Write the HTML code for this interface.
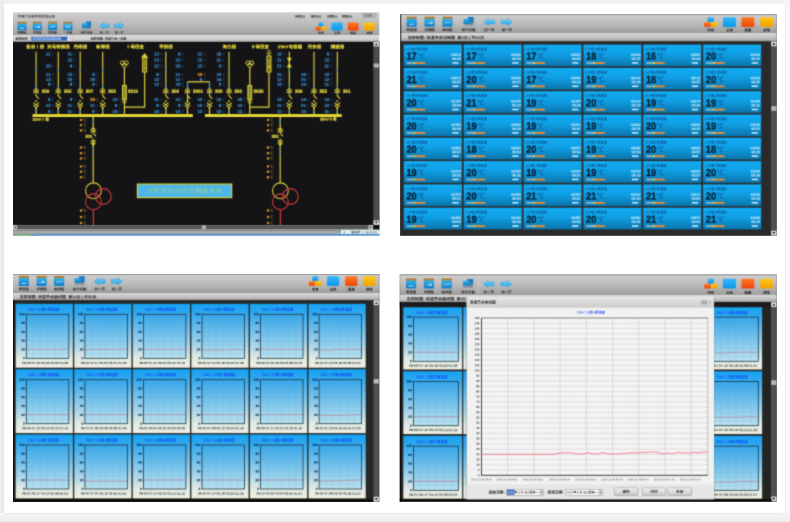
<!DOCTYPE html>
<html lang="zh-CN">
<head>
<meta charset="utf-8">
<title>丹阳变自动综合测温系统</title>
<style>
html,body{margin:0;padding:0;}
body{width:790px;height:522px;overflow:hidden;background:#f1f1f1;position:relative;font-family:"Liberation Sans","Noto Sans CJK SC",sans-serif;}
.sheet{position:absolute;left:3.5px;top:3.5px;width:781.5px;height:509.5px;background:#fff;box-shadow:0 1px 3px rgba(0,0,0,0.06);}
.edge-l{position:absolute;left:0;top:0;width:4px;height:522px;background:#ededed;}
.edge-r{position:absolute;left:785px;top:0;width:5px;height:522px;background:#f7f7f7;}
.edge-b{position:absolute;left:0;top:513px;width:790px;height:9px;background:linear-gradient(#f8f8f8,#ececec);}
.panel{position:absolute;display:block;overflow:hidden;will-change:transform;filter:url(#soft);}
svg text{white-space:pre;}
</style>
</head>
<body>
<div class="edge-l"></div>
<div class="edge-r"></div>
<div class="edge-b"></div>
<div class="sheet"></div>
<svg width="0" height="0" style="position:absolute"><defs><filter id="soft" x="0" y="0" width="1" height="1" color-interpolation-filters="sRGB"><feConvolveMatrix order="3" kernelMatrix="1 2 1 2 11 2 1 2 1" divisor="23" edgeMode="duplicate" preserveAlpha="true"/></filter>
<linearGradient id="gTool" x1="0" y1="0" x2="0" y2="1"><stop offset="0" stop-color="#cfcfcf"/><stop offset="0.55" stop-color="#b9b9b9"/><stop offset="1" stop-color="#9d9d9d"/></linearGradient>
<linearGradient id="gInfo" x1="0" y1="0" x2="0" y2="1"><stop offset="0" stop-color="#dadada"/><stop offset="0.7" stop-color="#bebebe"/><stop offset="1" stop-color="#969696"/></linearGradient>
<linearGradient id="gInfo1" x1="0" y1="0" x2="0" y2="1"><stop offset="0" stop-color="#dedede"/><stop offset="0.8" stop-color="#c8c8c8"/><stop offset="1" stop-color="#acacac"/></linearGradient>
<linearGradient id="gOrangeBar" x1="0" y1="0" x2="0" y2="1"><stop offset="0" stop-color="#a8702c"/><stop offset="1" stop-color="#d08a30"/></linearGradient>
<linearGradient id="gIconBlue" x1="0" y1="0" x2="0" y2="1"><stop offset="0" stop-color="#2cb2ee"/><stop offset="1" stop-color="#1078c4"/></linearGradient>
<linearGradient id="gArrow" x1="0" y1="0" x2="0" y2="1"><stop offset="0" stop-color="#7ad4fa"/><stop offset="1" stop-color="#1ea0e6"/></linearGradient>
<linearGradient id="gBlueBtn" x1="0" y1="0" x2="0" y2="1"><stop offset="0" stop-color="#34b8fa"/><stop offset="1" stop-color="#0c96e8"/></linearGradient>
<linearGradient id="gOrangeBtn" x1="0" y1="0" x2="0" y2="1"><stop offset="0" stop-color="#ff7a24"/><stop offset="1" stop-color="#f04404"/></linearGradient>
<linearGradient id="gYellowBtn" x1="0" y1="0" x2="0" y2="1"><stop offset="0" stop-color="#ffc818"/><stop offset="1" stop-color="#f0a000"/></linearGradient>
<linearGradient id="gCard" x1="0" y1="0" x2="0" y2="1"><stop offset="0" stop-color="#12acf4"/><stop offset="0.45" stop-color="#0f9fe4"/><stop offset="1" stop-color="#0a74ac"/></linearGradient>
<linearGradient id="gChartCard" x1="0" y1="0" x2="0" y2="1"><stop offset="0" stop-color="#16a2f2"/><stop offset="0.12" stop-color="#2aa6ee"/><stop offset="0.6" stop-color="#9cd0ea"/><stop offset="0.86" stop-color="#e2ebe2"/><stop offset="1" stop-color="#efeee2"/></linearGradient>
<linearGradient id="gPlot" x1="0" y1="0" x2="0" y2="1"><stop offset="0" stop-color="#34a6ea"/><stop offset="1" stop-color="#bce2ee"/></linearGradient>
<linearGradient id="gBtn" x1="0" y1="0" x2="0" y2="1"><stop offset="0" stop-color="#f4f4f4"/><stop offset="1" stop-color="#c4c4c4"/></linearGradient>
<linearGradient id="gDlgTitle" x1="0" y1="0" x2="0" y2="1"><stop offset="0" stop-color="#e8e8e8"/><stop offset="1" stop-color="#cbcbcb"/></linearGradient>
</defs></svg>
<svg class="panel" style="left:13px;top:12px" width="367" height="224" viewBox="13 12 367 224" font-family='"Liberation Sans","Noto Sans CJK SC",sans-serif'>
<rect x="13" y="12.3" width="366.3" height="23.2" fill="url(#gTool)" />
<text x="17.6" y="16.6" font-size="3.4" fill="#333" font-weight="500" text-anchor="start" dominant-baseline="central" transform="rotate(0.06 17.6 16.6)" >供电力设备状态监测系统</text>
<text x="295" y="16.6" font-size="3.05" fill="#222" font-weight="700" text-anchor="start" dominant-baseline="central" transform="rotate(0.06 295 16.6)" >系统(S)</text>
<text x="310.7" y="16.6" font-size="3.05" fill="#222" font-weight="700" text-anchor="start" dominant-baseline="central" transform="rotate(0.06 310.7 16.6)" >操作(O)</text>
<text x="327" y="16.6" font-size="3.05" fill="#222" font-weight="700" text-anchor="start" dominant-baseline="central" transform="rotate(0.06 327 16.6)" >设置(S)</text>
<text x="342" y="16.6" font-size="3.05" fill="#222" font-weight="700" text-anchor="start" dominant-baseline="central" transform="rotate(0.06 342 16.6)" >帮助(H)</text>
<rect x="362.7" y="13.4" width="13.3" height="4" fill="#bcbcc4" stroke="#8c8c98" stroke-width="0.4"/>
<text x="364" y="15.5" font-size="2.8" fill="#555" font-weight="500" text-anchor="start" dominant-baseline="central" transform="rotate(0.06 364 15.5)" >监控端</text>
<rect x="17.3" y="21.8" width="9.3" height="2.18" fill="url(#gOrangeBar)" rx="0.6"/><rect x="17.3" y="23.48" width="9.3" height="6.72" fill="url(#gIconBlue)" rx="1"/><rect x="19.62" y="27.78" width="4.65" height="0.9" fill="#d8f2ff" opacity="0.85"/>
<text x="21.95" y="32.5" font-size="2.95" fill="#2e2e2e" font-weight="700" text-anchor="middle" dominant-baseline="central" transform="rotate(0.06 21.95 32.5)" >概要图</text>
<rect x="32.6" y="21.8" width="9.3" height="2.18" fill="url(#gOrangeBar)" rx="0.6"/><rect x="32.6" y="23.48" width="9.3" height="6.72" fill="url(#gIconBlue)" rx="1"/><rect x="37.25" y="25.78" width="2.79" height="2.2" fill="#d8f2ff" opacity="0.7"/><rect x="34.46" y="26.88" width="2.33" height="0.8" fill="#d8f2ff" opacity="0.6"/>
<text x="37.25" y="32.5" font-size="2.95" fill="#2e2e2e" font-weight="700" text-anchor="middle" dominant-baseline="central" transform="rotate(0.06 37.25 32.5)" >详细图</text>
<rect x="48" y="21.8" width="9.3" height="2.18" fill="url(#gOrangeBar)" rx="0.6"/><rect x="48" y="23.48" width="9.3" height="6.72" fill="url(#gIconBlue)" rx="1"/><polyline points="49.86,27.98 51.72,25.98 53.58,27.18 55.63,25.58" fill="none" stroke="#e0f6ff" stroke-width="0.8" opacity="0.85"/>
<text x="52.65" y="32.5" font-size="2.95" fill="#2e2e2e" font-weight="700" text-anchor="middle" dominant-baseline="central" transform="rotate(0.06 52.65 32.5)" >曲线图</text>
<rect x="63.2" y="21.8" width="9.3" height="2.18" fill="url(#gOrangeBar)" rx="0.6"/><rect x="63.2" y="23.48" width="9.3" height="6.72" fill="url(#gIconBlue)" rx="1"/><rect x="65.99" y="25.68" width="0.8" height="3" fill="#d8f2ff" opacity="0.8"/><rect x="68.78" y="25.68" width="0.8" height="3" fill="#d8f2ff" opacity="0.8"/><rect x="65.06" y="25.68" width="5.58" height="0.7" fill="#d8f2ff" opacity="0.8"/>
<text x="67.85" y="32.5" font-size="2.95" fill="#2e2e2e" font-weight="700" text-anchor="middle" dominant-baseline="central" transform="rotate(0.06 67.85 32.5)" >一次图</text>
<rect x="85.86" y="21.6" width="5.34" height="5.33" fill="#1a7cc4" rx="0.5"/><rect x="82" y="23.32" width="5.7" height="4.73" fill="url(#gIconBlue)" rx="0.6"/><rect x="82.46" y="28.31" width="8.28" height="1.72" fill="#8a97a3" rx="0.4"/><rect x="87.06" y="26.93" width="3.68" height="1.38" fill="#5f7486" />
<text x="86.6" y="32.5" font-size="2.95" fill="#2a2a2a" font-weight="700" text-anchor="middle" dominant-baseline="central" transform="rotate(0.06 86.6 32.5)" >操作设备</text>
<polygon points="99.6,25.8 103.55,22.6 103.55,24.01 109,24.01 109,27.59 103.55,27.59 103.55,29" fill="url(#gArrow)" stroke="#2a9ad8" stroke-width="0.4" stroke-linejoin="round"/>
<text x="104.3" y="32.5" font-size="2.95" fill="#2a2a2a" font-weight="700" text-anchor="middle" dominant-baseline="central" transform="rotate(0.06 104.3 32.5)" >前一页</text>
<polygon points="123.8,25.8 119.85,22.6 119.85,24.01 114.4,24.01 114.4,27.59 119.85,27.59 119.85,29" fill="url(#gArrow)" stroke="#2a9ad8" stroke-width="0.4" stroke-linejoin="round"/>
<text x="119.1" y="32.5" font-size="2.95" fill="#2a2a2a" font-weight="700" text-anchor="middle" dominant-baseline="central" transform="rotate(0.06 119.1 32.5)" >后一页</text>
<rect x="318.54" y="22.4" width="5.01" height="4.05" fill="url(#gBlueBtn)" rx="1"/><rect x="315.6" y="26.61" width="5.45" height="3.89" fill="url(#gOrangeBtn)" rx="1.2"/><rect x="321.27" y="26.45" width="5.23" height="4.05" fill="url(#gYellowBtn)" rx="1.2"/><rect x="331.5" y="22.4" width="11.1" height="8.1" fill="url(#gBlueBtn)" rx="1.3"/><rect x="347.8" y="22.4" width="10.8" height="8.1" fill="url(#gOrangeBtn)" rx="1.3"/><rect x="364" y="22.4" width="10.9" height="8.1" fill="url(#gYellowBtn)" rx="1.3"/><text x="321.05" y="33.1" font-size="3" fill="#1c1c1c" font-weight="700" text-anchor="middle" dominant-baseline="central" transform="rotate(0.06 321.05 33.1)" >所有</text><text x="337.05" y="33.1" font-size="3" fill="#1c1c1c" font-weight="700" text-anchor="middle" dominant-baseline="central" transform="rotate(0.06 337.05 33.1)" >正常</text><text x="353.2" y="33.1" font-size="3" fill="#1c1c1c" font-weight="700" text-anchor="middle" dominant-baseline="central" transform="rotate(0.06 353.2 33.1)" >超温</text><text x="369.45" y="33.1" font-size="3" fill="#1c1c1c" font-weight="700" text-anchor="middle" dominant-baseline="central" transform="rotate(0.06 369.45 33.1)" >故障</text>
<rect x="13" y="35.4" width="366.3" height="6.3" fill="url(#gInfo1)" />
<text x="15.2" y="38.7" font-size="3.05" fill="#222" font-weight="700" text-anchor="start" dominant-baseline="central" transform="rotate(0.06 15.2 38.7)" >当前系统:</text>
<rect x="31" y="36.4" width="41.6" height="4.6" fill="#f4f4f4" stroke="#8a8a8a" stroke-width="0.3"/>
<rect x="31.4" y="36.8" width="36" height="3.8" fill="#2f62c0" />
<text x="32.4" y="38.7" font-size="3.2" fill="#d8e4ff" font-weight="500" text-anchor="start" dominant-baseline="central" transform="rotate(0.06 32.4 38.7)" >丹阳变电站测温系统</text>
<polygon points="69.4,38 71.4,38 70.4,39.4" fill="#444"/>
<text x="90.4" y="38.7" font-size="3.1" fill="#222" font-weight="700" text-anchor="start" dominant-baseline="central" transform="rotate(0.06 90.4 38.7)" >当前视图: 测温节点一次图</text>
<rect x="13" y="41.6" width="366.3" height="183.6" fill="#141416" />
<rect x="373.3" y="41.6" width="6" height="183.6" fill="#4c4c4c" />
<rect x="373.6" y="42" width="5.4" height="4.4" fill="#e8e8e8" />
<polygon points="374.8,45.2 377.8,45.2 376.3,43" fill="#111"/>
<rect x="373.6" y="63.5" width="5.4" height="4" fill="#b4b4b4" />
<rect x="373.6" y="220.4" width="5.4" height="4.4" fill="#e8e8e8" />
<polygon points="374.8,221.6 377.8,221.6 376.3,223.8" fill="#111"/>
<rect x="13" y="225.1" width="366.3" height="4.6" fill="#585858" />
<rect x="13.2" y="225.3" width="3.6" height="4.2" fill="#e8e8e8" />
<polygon points="15.8,226.1 15.8,228.7 14,227.4" fill="#111"/>
<rect x="368.6" y="225.3" width="4.2" height="4.2" fill="#e8e8e8" />
<polygon points="369.8,226.1 369.8,228.7 371.8,227.4" fill="#111"/>
<rect x="373.3" y="225.1" width="6" height="4.6" fill="#0c0c0c" />
<rect x="201.8" y="225.3" width="4.2" height="4.2" fill="#b4b4b4" />
<rect x="13" y="229.7" width="366.3" height="5.8" fill="#a6a6a6" />
<rect x="13" y="229.7" width="366.3" height="1.2" fill="#8c8c8c" />
<rect x="341" y="229.9" width="38.3" height="4.6" fill="#dff3f6" />
<text x="343" y="232.2" font-size="2.4" fill="#333" font-weight="normal" text-anchor="start" dominant-baseline="central" transform="rotate(0.06 343 232.2)" >▲</text>
<text x="351" y="232.2" font-size="3" fill="#333" font-weight="500" text-anchor="start" dominant-baseline="central" transform="rotate(0.06 351 232.2)" >值班员: 1  06:09:09</text>
<rect x="13" y="234" width="19" height="1.5" fill="#74a878" />
<rect x="32" y="234" width="347.3" height="1.5" fill="#4a90d8" />
<linearGradient id="gGB" x1="0" x2="1"><stop offset="0" stop-color="#74a878"/><stop offset="1" stop-color="#4a90d8"/></linearGradient>
<rect x="30" y="234" width="6" height="1.5" fill="url(#gGB)" />
<text x="35.2" y="46.8" font-size="4.3" fill="#e6d83e" font-weight="700" text-anchor="middle" dominant-baseline="central" transform="rotate(0.06 35.2 46.8)" letter-spacing="0.2" stroke="#e6d83e" stroke-width="0.2">备用Ⅰ线</text>
<text x="58.6" y="46.8" font-size="4.3" fill="#e6d83e" font-weight="700" text-anchor="middle" dominant-baseline="central" transform="rotate(0.06 58.6 46.8)" letter-spacing="0.2" stroke="#e6d83e" stroke-width="0.2">天马特钢线</text>
<text x="80.4" y="46.8" font-size="4.3" fill="#e6d83e" font-weight="700" text-anchor="middle" dominant-baseline="central" transform="rotate(0.06 80.4 46.8)" letter-spacing="0.2" stroke="#e6d83e" stroke-width="0.2">丹阳线</text>
<text x="102.9" y="46.8" font-size="4.3" fill="#e6d83e" font-weight="700" text-anchor="middle" dominant-baseline="central" transform="rotate(0.06 102.9 46.8)" letter-spacing="0.2" stroke="#e6d83e" stroke-width="0.2">新博线</text>
<text x="135" y="46.8" font-size="4.3" fill="#e6d83e" font-weight="700" text-anchor="middle" dominant-baseline="central" transform="rotate(0.06 135 46.8)" letter-spacing="0.2" stroke="#e6d83e" stroke-width="0.2">Ⅰ母压变</text>
<text x="166" y="46.8" font-size="4.3" fill="#e6d83e" font-weight="700" text-anchor="middle" dominant-baseline="central" transform="rotate(0.06 166 46.8)" letter-spacing="0.2" stroke="#e6d83e" stroke-width="0.2">平桥线</text>
<text x="229.2" y="46.8" font-size="4.3" fill="#e6d83e" font-weight="700" text-anchor="middle" dominant-baseline="central" transform="rotate(0.06 229.2 46.8)" letter-spacing="0.2" stroke="#e6d83e" stroke-width="0.2">海力线</text>
<text x="260" y="46.8" font-size="4.3" fill="#e6d83e" font-weight="700" text-anchor="middle" dominant-baseline="central" transform="rotate(0.06 260 46.8)" letter-spacing="0.2" stroke="#e6d83e" stroke-width="0.2">Ⅱ母压变</text>
<text x="290" y="46.8" font-size="4.3" fill="#e6d83e" font-weight="700" text-anchor="middle" dominant-baseline="central" transform="rotate(0.06 290 46.8)" letter-spacing="0.2" stroke="#e6d83e" stroke-width="0.2">35kV电容器</text>
<text x="314.5" y="46.8" font-size="4.3" fill="#e6d83e" font-weight="700" text-anchor="middle" dominant-baseline="central" transform="rotate(0.06 314.5 46.8)" letter-spacing="0.2" stroke="#e6d83e" stroke-width="0.2">丹东线</text>
<text x="337.4" y="46.8" font-size="4.3" fill="#e6d83e" font-weight="700" text-anchor="middle" dominant-baseline="central" transform="rotate(0.06 337.4 46.8)" letter-spacing="0.2" stroke="#e6d83e" stroke-width="0.2">搏盛线</text>
<line x1="36.1" y1="51.7" x2="36.1" y2="88.6" stroke="#dcd23c" stroke-width="1.15" />
<polyline points="33.4,90.8 36.1,88.4 38.8,90.8" fill="none" stroke="#dcd23c" stroke-width="1.1"/><polyline points="33.4,93.2 36.1,90.8 38.8,93.2" fill="none" stroke="#dcd23c" stroke-width="1.1"/><polyline points="36.1,90.4 36.1,95.7 38.9,99" fill="none" stroke="#dcd23c" stroke-width="1.1"/><line x1="35.1" y1="100.4" x2="37.1" y2="102" stroke="#dcd23c" stroke-width="0.8" /><line x1="37.1" y1="100.4" x2="35.1" y2="102" stroke="#dcd23c" stroke-width="0.8" /><polyline points="33.5,102.6 36.1,105.2 38.7,102.6" fill="none" stroke="#dcd23c" stroke-width="1.1"/><polyline points="33.5,105.2 36.1,107.8 38.7,105.2" fill="none" stroke="#dcd23c" stroke-width="1.1"/><line x1="36.1" y1="107" x2="36.1" y2="108.4" stroke="#dcd23c" stroke-width="1.1" /><text x="41.7" y="91.3" font-size="4.5" fill="#e6d83e" font-weight="700" text-anchor="start" dominant-baseline="central" transform="rotate(0.06 41.7 91.3)" stroke="#e6d83e" stroke-width="0.25">359</text>
<line x1="36.1" y1="108" x2="36.1" y2="114.5" stroke="#dcd23c" stroke-width="1.3" />
<line x1="36.1" y1="68.5" x2="36.1" y2="71" stroke="#3a86c8" stroke-width="1.3" />
<line x1="36.1" y1="85" x2="36.1" y2="87.2" stroke="#3a86c8" stroke-width="1.3" />
<line x1="36.1" y1="110.5" x2="36.1" y2="112.5" stroke="#3a86c8" stroke-width="1.3" />
<line x1="58.3" y1="51.7" x2="58.3" y2="88.6" stroke="#dcd23c" stroke-width="1.15" />
<polyline points="55.6,90.8 58.3,88.4 61,90.8" fill="none" stroke="#dcd23c" stroke-width="1.1"/><polyline points="55.6,93.2 58.3,90.8 61,93.2" fill="none" stroke="#dcd23c" stroke-width="1.1"/><polyline points="58.3,90.4 58.3,95.7 61.1,99" fill="none" stroke="#dcd23c" stroke-width="1.1"/><line x1="57.3" y1="100.4" x2="59.3" y2="102" stroke="#dcd23c" stroke-width="0.8" /><line x1="59.3" y1="100.4" x2="57.3" y2="102" stroke="#dcd23c" stroke-width="0.8" /><polyline points="55.7,102.6 58.3,105.2 60.9,102.6" fill="none" stroke="#dcd23c" stroke-width="1.1"/><polyline points="55.7,105.2 58.3,107.8 60.9,105.2" fill="none" stroke="#dcd23c" stroke-width="1.1"/><line x1="58.3" y1="107" x2="58.3" y2="108.4" stroke="#dcd23c" stroke-width="1.1" /><text x="63.9" y="91.3" font-size="4.5" fill="#e6d83e" font-weight="700" text-anchor="start" dominant-baseline="central" transform="rotate(0.06 63.9 91.3)" stroke="#e6d83e" stroke-width="0.25">355</text>
<line x1="58.3" y1="108" x2="58.3" y2="114.5" stroke="#dcd23c" stroke-width="1.3" />
<line x1="58.3" y1="68.5" x2="58.3" y2="71" stroke="#3a86c8" stroke-width="1.3" />
<line x1="58.3" y1="85" x2="58.3" y2="87.2" stroke="#3a86c8" stroke-width="1.3" />
<line x1="58.3" y1="110.5" x2="58.3" y2="112.5" stroke="#3a86c8" stroke-width="1.3" />
<line x1="80.2" y1="51.7" x2="80.2" y2="88.6" stroke="#dcd23c" stroke-width="1.15" />
<polyline points="77.5,90.8 80.2,88.4 82.9,90.8" fill="none" stroke="#dcd23c" stroke-width="1.1"/><polyline points="77.5,93.2 80.2,90.8 82.9,93.2" fill="none" stroke="#dcd23c" stroke-width="1.1"/><polyline points="80.2,90.4 80.2,95.7 83,99" fill="none" stroke="#dcd23c" stroke-width="1.1"/><line x1="79.2" y1="100.4" x2="81.2" y2="102" stroke="#dcd23c" stroke-width="0.8" /><line x1="81.2" y1="100.4" x2="79.2" y2="102" stroke="#dcd23c" stroke-width="0.8" /><polyline points="77.6,102.6 80.2,105.2 82.8,102.6" fill="none" stroke="#dcd23c" stroke-width="1.1"/><polyline points="77.6,105.2 80.2,107.8 82.8,105.2" fill="none" stroke="#dcd23c" stroke-width="1.1"/><line x1="80.2" y1="107" x2="80.2" y2="108.4" stroke="#dcd23c" stroke-width="1.1" /><text x="85.8" y="91.3" font-size="4.5" fill="#e6d83e" font-weight="700" text-anchor="start" dominant-baseline="central" transform="rotate(0.06 85.8 91.3)" stroke="#e6d83e" stroke-width="0.25">357</text>
<line x1="80.2" y1="108" x2="80.2" y2="114.5" stroke="#dcd23c" stroke-width="1.3" />
<line x1="80.2" y1="68.5" x2="80.2" y2="71" stroke="#3a86c8" stroke-width="1.3" />
<line x1="80.2" y1="85" x2="80.2" y2="87.2" stroke="#3a86c8" stroke-width="1.3" />
<line x1="80.2" y1="110.5" x2="80.2" y2="112.5" stroke="#3a86c8" stroke-width="1.3" />
<line x1="102.7" y1="51.7" x2="102.7" y2="88.6" stroke="#dcd23c" stroke-width="1.15" />
<polyline points="100,90.8 102.7,88.4 105.4,90.8" fill="none" stroke="#dcd23c" stroke-width="1.1"/><polyline points="100,93.2 102.7,90.8 105.4,93.2" fill="none" stroke="#dcd23c" stroke-width="1.1"/><polyline points="102.7,90.4 102.7,95.7 105.5,99" fill="none" stroke="#dcd23c" stroke-width="1.1"/><line x1="101.7" y1="100.4" x2="103.7" y2="102" stroke="#dcd23c" stroke-width="0.8" /><line x1="103.7" y1="100.4" x2="101.7" y2="102" stroke="#dcd23c" stroke-width="0.8" /><polyline points="100.1,102.6 102.7,105.2 105.3,102.6" fill="none" stroke="#dcd23c" stroke-width="1.1"/><polyline points="100.1,105.2 102.7,107.8 105.3,105.2" fill="none" stroke="#dcd23c" stroke-width="1.1"/><line x1="102.7" y1="107" x2="102.7" y2="108.4" stroke="#dcd23c" stroke-width="1.1" /><text x="108.3" y="91.3" font-size="4.5" fill="#e6d83e" font-weight="700" text-anchor="start" dominant-baseline="central" transform="rotate(0.06 108.3 91.3)" stroke="#e6d83e" stroke-width="0.25">353</text>
<line x1="102.7" y1="108" x2="102.7" y2="114.5" stroke="#dcd23c" stroke-width="1.3" />
<line x1="102.7" y1="68.5" x2="102.7" y2="71" stroke="#3a86c8" stroke-width="1.3" />
<line x1="102.7" y1="85" x2="102.7" y2="87.2" stroke="#3a86c8" stroke-width="1.3" />
<line x1="102.7" y1="110.5" x2="102.7" y2="112.5" stroke="#3a86c8" stroke-width="1.3" />
<line x1="165.8" y1="51.7" x2="165.8" y2="88.6" stroke="#dcd23c" stroke-width="1.15" />
<polyline points="163.1,90.8 165.8,88.4 168.5,90.8" fill="none" stroke="#dcd23c" stroke-width="1.1"/><polyline points="163.1,93.2 165.8,90.8 168.5,93.2" fill="none" stroke="#dcd23c" stroke-width="1.1"/><polyline points="165.8,90.4 165.8,95.7 168.6,99" fill="none" stroke="#dcd23c" stroke-width="1.1"/><line x1="164.8" y1="100.4" x2="166.8" y2="102" stroke="#dcd23c" stroke-width="0.8" /><line x1="166.8" y1="100.4" x2="164.8" y2="102" stroke="#dcd23c" stroke-width="0.8" /><polyline points="163.2,102.6 165.8,105.2 168.4,102.6" fill="none" stroke="#dcd23c" stroke-width="1.1"/><polyline points="163.2,105.2 165.8,107.8 168.4,105.2" fill="none" stroke="#dcd23c" stroke-width="1.1"/><line x1="165.8" y1="107" x2="165.8" y2="108.4" stroke="#dcd23c" stroke-width="1.1" /><text x="171.4" y="91.3" font-size="4.5" fill="#e6d83e" font-weight="700" text-anchor="start" dominant-baseline="central" transform="rotate(0.06 171.4 91.3)" stroke="#e6d83e" stroke-width="0.25">356</text>
<line x1="165.8" y1="108" x2="165.8" y2="114.5" stroke="#dcd23c" stroke-width="1.3" />
<line x1="165.8" y1="68.5" x2="165.8" y2="71" stroke="#3a86c8" stroke-width="1.3" />
<line x1="165.8" y1="85" x2="165.8" y2="87.2" stroke="#3a86c8" stroke-width="1.3" />
<line x1="165.8" y1="110.5" x2="165.8" y2="112.5" stroke="#3a86c8" stroke-width="1.3" />
<line x1="229" y1="51.7" x2="229" y2="88.6" stroke="#dcd23c" stroke-width="1.15" />
<polyline points="226.3,90.8 229,88.4 231.7,90.8" fill="none" stroke="#dcd23c" stroke-width="1.1"/><polyline points="226.3,93.2 229,90.8 231.7,93.2" fill="none" stroke="#dcd23c" stroke-width="1.1"/><polyline points="229,90.4 229,95.7 231.8,99" fill="none" stroke="#dcd23c" stroke-width="1.1"/><line x1="228" y1="100.4" x2="230" y2="102" stroke="#dcd23c" stroke-width="0.8" /><line x1="230" y1="100.4" x2="228" y2="102" stroke="#dcd23c" stroke-width="0.8" /><polyline points="226.4,102.6 229,105.2 231.6,102.6" fill="none" stroke="#dcd23c" stroke-width="1.1"/><polyline points="226.4,105.2 229,107.8 231.6,105.2" fill="none" stroke="#dcd23c" stroke-width="1.1"/><line x1="229" y1="107" x2="229" y2="108.4" stroke="#dcd23c" stroke-width="1.1" /><text x="234.6" y="91.3" font-size="4.5" fill="#e6d83e" font-weight="700" text-anchor="start" dominant-baseline="central" transform="rotate(0.06 234.6 91.3)" stroke="#e6d83e" stroke-width="0.25">350</text>
<line x1="229" y1="108" x2="229" y2="114.5" stroke="#dcd23c" stroke-width="1.3" />
<line x1="229" y1="68.5" x2="229" y2="71" stroke="#3a86c8" stroke-width="1.3" />
<line x1="229" y1="85" x2="229" y2="87.2" stroke="#3a86c8" stroke-width="1.3" />
<line x1="229" y1="110.5" x2="229" y2="112.5" stroke="#3a86c8" stroke-width="1.3" />
<line x1="289.3" y1="51.7" x2="289.3" y2="88.6" stroke="#dcd23c" stroke-width="1.15" />
<polyline points="286.6,90.8 289.3,88.4 292,90.8" fill="none" stroke="#dcd23c" stroke-width="1.1"/><polyline points="286.6,93.2 289.3,90.8 292,93.2" fill="none" stroke="#dcd23c" stroke-width="1.1"/><polyline points="289.3,90.4 289.3,95.7 292.1,99" fill="none" stroke="#dcd23c" stroke-width="1.1"/><line x1="288.3" y1="100.4" x2="290.3" y2="102" stroke="#dcd23c" stroke-width="0.8" /><line x1="290.3" y1="100.4" x2="288.3" y2="102" stroke="#dcd23c" stroke-width="0.8" /><polyline points="286.7,102.6 289.3,105.2 291.9,102.6" fill="none" stroke="#dcd23c" stroke-width="1.1"/><polyline points="286.7,105.2 289.3,107.8 291.9,105.2" fill="none" stroke="#dcd23c" stroke-width="1.1"/><line x1="289.3" y1="107" x2="289.3" y2="108.4" stroke="#dcd23c" stroke-width="1.1" /><text x="294.9" y="91.3" font-size="4.5" fill="#e6d83e" font-weight="700" text-anchor="start" dominant-baseline="central" transform="rotate(0.06 294.9 91.3)" stroke="#e6d83e" stroke-width="0.25">306</text>
<line x1="289.3" y1="108" x2="289.3" y2="114.5" stroke="#dcd23c" stroke-width="1.3" />
<line x1="289.3" y1="68.5" x2="289.3" y2="71" stroke="#3a86c8" stroke-width="1.3" />
<line x1="289.3" y1="85" x2="289.3" y2="87.2" stroke="#3a86c8" stroke-width="1.3" />
<line x1="289.3" y1="110.5" x2="289.3" y2="112.5" stroke="#3a86c8" stroke-width="1.3" />
<line x1="314" y1="51.7" x2="314" y2="88.6" stroke="#dcd23c" stroke-width="1.15" />
<polyline points="311.3,90.8 314,88.4 316.7,90.8" fill="none" stroke="#dcd23c" stroke-width="1.1"/><polyline points="311.3,93.2 314,90.8 316.7,93.2" fill="none" stroke="#dcd23c" stroke-width="1.1"/><polyline points="314,90.4 314,95.7 316.8,99" fill="none" stroke="#dcd23c" stroke-width="1.1"/><line x1="313" y1="100.4" x2="315" y2="102" stroke="#dcd23c" stroke-width="0.8" /><line x1="315" y1="100.4" x2="313" y2="102" stroke="#dcd23c" stroke-width="0.8" /><polyline points="311.4,102.6 314,105.2 316.6,102.6" fill="none" stroke="#dcd23c" stroke-width="1.1"/><polyline points="311.4,105.2 314,107.8 316.6,105.2" fill="none" stroke="#dcd23c" stroke-width="1.1"/><line x1="314" y1="107" x2="314" y2="108.4" stroke="#dcd23c" stroke-width="1.1" /><text x="319.6" y="91.3" font-size="4.5" fill="#e6d83e" font-weight="700" text-anchor="start" dominant-baseline="central" transform="rotate(0.06 319.6 91.3)" stroke="#e6d83e" stroke-width="0.25">352</text>
<line x1="314" y1="108" x2="314" y2="114.5" stroke="#dcd23c" stroke-width="1.3" />
<line x1="314" y1="68.5" x2="314" y2="71" stroke="#3a86c8" stroke-width="1.3" />
<line x1="314" y1="85" x2="314" y2="87.2" stroke="#3a86c8" stroke-width="1.3" />
<line x1="314" y1="110.5" x2="314" y2="112.5" stroke="#3a86c8" stroke-width="1.3" />
<line x1="337.3" y1="51.7" x2="337.3" y2="88.6" stroke="#dcd23c" stroke-width="1.15" />
<polyline points="334.6,90.8 337.3,88.4 340,90.8" fill="none" stroke="#dcd23c" stroke-width="1.1"/><polyline points="334.6,93.2 337.3,90.8 340,93.2" fill="none" stroke="#dcd23c" stroke-width="1.1"/><polyline points="337.3,90.4 337.3,95.7 340.1,99" fill="none" stroke="#dcd23c" stroke-width="1.1"/><line x1="336.3" y1="100.4" x2="338.3" y2="102" stroke="#dcd23c" stroke-width="0.8" /><line x1="338.3" y1="100.4" x2="336.3" y2="102" stroke="#dcd23c" stroke-width="0.8" /><polyline points="334.7,102.6 337.3,105.2 339.9,102.6" fill="none" stroke="#dcd23c" stroke-width="1.1"/><polyline points="334.7,105.2 337.3,107.8 339.9,105.2" fill="none" stroke="#dcd23c" stroke-width="1.1"/><line x1="337.3" y1="107" x2="337.3" y2="108.4" stroke="#dcd23c" stroke-width="1.1" /><text x="342.9" y="91.3" font-size="4.5" fill="#e6d83e" font-weight="700" text-anchor="start" dominant-baseline="central" transform="rotate(0.06 342.9 91.3)" stroke="#e6d83e" stroke-width="0.25">351</text>
<line x1="337.3" y1="108" x2="337.3" y2="114.5" stroke="#dcd23c" stroke-width="1.3" />
<line x1="337.3" y1="68.5" x2="337.3" y2="71" stroke="#3a86c8" stroke-width="1.3" />
<line x1="337.3" y1="85" x2="337.3" y2="87.2" stroke="#3a86c8" stroke-width="1.3" />
<line x1="337.3" y1="110.5" x2="337.3" y2="112.5" stroke="#3a86c8" stroke-width="1.3" />
<polygon points="286.8,57.8 291.8,57.8 289.3,62.6" fill="#dcd23c"/>
<polygon points="286.8,67.6 291.8,67.6 289.3,62.6" fill="#dcd23c"/>
<line x1="187.5" y1="81.8" x2="187.5" y2="88.6" stroke="#5a9ac0" stroke-width="1.3" />
<line x1="187.5" y1="108" x2="187.5" y2="114.5" stroke="#dcd23c" stroke-width="1.3" />
<line x1="209.5" y1="81.8" x2="209.5" y2="88.6" stroke="#5a9ac0" stroke-width="1.3" />
<line x1="209.5" y1="108" x2="209.5" y2="114.5" stroke="#dcd23c" stroke-width="1.3" />
<polyline points="184.8,90.8 187.5,88.4 190.2,90.8" fill="none" stroke="#dcd23c" stroke-width="1.1"/><polyline points="184.8,93.2 187.5,90.8 190.2,93.2" fill="none" stroke="#dcd23c" stroke-width="1.1"/><polyline points="187.5,90.4 187.5,95.7 190.3,99" fill="none" stroke="#dcd23c" stroke-width="1.1"/><line x1="186.5" y1="100.4" x2="188.5" y2="102" stroke="#dcd23c" stroke-width="0.8" /><line x1="188.5" y1="100.4" x2="186.5" y2="102" stroke="#dcd23c" stroke-width="0.8" /><polyline points="184.9,102.6 187.5,105.2 190.1,102.6" fill="none" stroke="#dcd23c" stroke-width="1.1"/><polyline points="184.9,105.2 187.5,107.8 190.1,105.2" fill="none" stroke="#dcd23c" stroke-width="1.1"/><line x1="187.5" y1="107" x2="187.5" y2="108.4" stroke="#dcd23c" stroke-width="1.1" /><text x="193.1" y="91.3" font-size="4.5" fill="#e6d83e" font-weight="700" text-anchor="start" dominant-baseline="central" transform="rotate(0.06 193.1 91.3)" stroke="#e6d83e" stroke-width="0.25">3001</text>
<polyline points="206.8,90.8 209.5,88.4 212.2,90.8" fill="none" stroke="#dcd23c" stroke-width="1.1"/><polyline points="206.8,93.2 209.5,90.8 212.2,93.2" fill="none" stroke="#dcd23c" stroke-width="1.1"/><polyline points="209.5,90.4 209.5,95.7 212.3,99" fill="none" stroke="#dcd23c" stroke-width="1.1"/><line x1="208.5" y1="100.4" x2="210.5" y2="102" stroke="#dcd23c" stroke-width="0.8" /><line x1="210.5" y1="100.4" x2="208.5" y2="102" stroke="#dcd23c" stroke-width="0.8" /><polyline points="206.9,102.6 209.5,105.2 212.1,102.6" fill="none" stroke="#dcd23c" stroke-width="1.1"/><polyline points="206.9,105.2 209.5,107.8 212.1,105.2" fill="none" stroke="#dcd23c" stroke-width="1.1"/><line x1="209.5" y1="107" x2="209.5" y2="108.4" stroke="#dcd23c" stroke-width="1.1" /><text x="215.1" y="91.3" font-size="4.5" fill="#e6d83e" font-weight="700" text-anchor="start" dominant-baseline="central" transform="rotate(0.06 215.1 91.3)" stroke="#e6d83e" stroke-width="0.25">300</text>
<line x1="187.5" y1="90" x2="187.5" y2="103" stroke="#dcd23c" stroke-width="1.1" />
<line x1="187.5" y1="81.8" x2="209.5" y2="81.8" stroke="#dcd23c" stroke-width="1.3" />
<circle cx="122.5" cy="62.9" r="2" fill="none" stroke="#dcd23c" stroke-width="1"/><circle cx="126.3" cy="62.9" r="2" fill="none" stroke="#dcd23c" stroke-width="1"/><circle cx="124.4" cy="65.3" r="2" fill="none" stroke="#dcd23c" stroke-width="1"/><line x1="124.4" y1="67.3" x2="124.4" y2="85.5" stroke="#dcd23c" stroke-width="1.2" /><rect x="122.5" y="85.5" width="3.8" height="13.6" fill="#8c8a2c" stroke="#dcd23c" stroke-width="1"/><line x1="124.4" y1="99" x2="124.4" y2="114.5" stroke="#dcd23c" stroke-width="1.2" /><polyline points="122.2,99.6 124.4,101.8 126.6,99.6" fill="none" stroke="#dcd23c" stroke-width="1"/><polyline points="122.2,101.6 124.4,103.8 126.6,101.6" fill="none" stroke="#dcd23c" stroke-width="1"/><text x="128" y="91.3" font-size="4.5" fill="#e6d83e" font-weight="700" text-anchor="start" dominant-baseline="central" transform="rotate(0.06 128 91.3)" stroke="#e6d83e" stroke-width="0.25">3015</text>
<circle cx="247.9" cy="62.9" r="2" fill="none" stroke="#dcd23c" stroke-width="1"/><circle cx="251.7" cy="62.9" r="2" fill="none" stroke="#dcd23c" stroke-width="1"/><circle cx="249.8" cy="65.3" r="2" fill="none" stroke="#dcd23c" stroke-width="1"/><line x1="249.8" y1="67.3" x2="249.8" y2="85.5" stroke="#dcd23c" stroke-width="1.2" /><rect x="247.9" y="85.5" width="3.8" height="13.6" fill="#8c8a2c" stroke="#dcd23c" stroke-width="1"/><line x1="249.8" y1="99" x2="249.8" y2="114.5" stroke="#dcd23c" stroke-width="1.2" /><polyline points="247.6,99.6 249.8,101.8 252,99.6" fill="none" stroke="#dcd23c" stroke-width="1"/><polyline points="247.6,101.6 249.8,103.8 252,101.6" fill="none" stroke="#dcd23c" stroke-width="1"/><text x="253.4" y="91.3" font-size="4.5" fill="#e6d83e" font-weight="700" text-anchor="start" dominant-baseline="central" transform="rotate(0.06 253.4 91.3)" stroke="#e6d83e" stroke-width="0.25">3025</text>
<polygon points="141,57.8 148.2,57.8 144.6,53" fill="#dcd23c"/>
<rect x="142.6" y="58" width="4" height="14" fill="#5c5a1c" stroke="#dcd23c" stroke-width="1"/>
<line x1="144.6" y1="60" x2="144.6" y2="68" stroke="#dcd23c" stroke-width="0.8" />
<polygon points="143.4,69.6 145.8,69.6 144.6,67.4" fill="#dcd23c"/>
<polyline points="144.6,72 144.6,107.2 124.4,107.2" fill="none" stroke="#dcd23c" stroke-width="1.2"/>
<line x1="267" y1="51" x2="271" y2="51" stroke="#dcd23c" stroke-width="0.9" />
<line x1="266.4" y1="53.2" x2="271.6" y2="53.2" stroke="#dcd23c" stroke-width="0.9" />
<line x1="269" y1="53.2" x2="269" y2="56" stroke="#dcd23c" stroke-width="1.1" />
<rect x="267" y="56" width="4" height="16" fill="#5c5a1c" stroke="#dcd23c" stroke-width="1"/>
<line x1="269" y1="59" x2="269" y2="68" stroke="#dcd23c" stroke-width="0.8" />
<rect x="267.9" y="66.4" width="2.2" height="2.6" fill="none" stroke="#dcd23c" stroke-width="0.6"/>
<polyline points="269,72 269,107.2 249.8,107.2" fill="none" stroke="#dcd23c" stroke-width="1.2"/>
<rect x="32.5" y="114.1" width="160.3" height="2.9" fill="#e8dc34" />
<rect x="205" y="114.1" width="136.7" height="2.9" fill="#e8dc34" />
<text x="32.5" y="119.8" font-size="3.8" fill="#e6d83e" font-weight="700" text-anchor="start" dominant-baseline="central" transform="rotate(0.06 32.5 119.8)" stroke="#e6d83e" stroke-width="0.2">35kVⅠ母</text>
<text x="320" y="119.6" font-size="3.8" fill="#e6d83e" font-weight="700" text-anchor="start" dominant-baseline="central" transform="rotate(0.06 320 119.6)" stroke="#e6d83e" stroke-width="0.2">35kVⅡ母</text>
<text x="45.7" y="54" font-size="4.4" font-weight="700" dominant-baseline="central" transform="rotate(0.06 45.7 54)" fill="#3a92dc" stroke="#3a92dc" stroke-width="0.15">11<tspan fill="#24557e" font-weight="400" font-size="3.9" stroke="none">℃</tspan></text>
<text x="45.7" y="66" font-size="4.4" font-weight="700" dominant-baseline="central" transform="rotate(0.06 45.7 66)" fill="#3a92dc" stroke="#3a92dc" stroke-width="0.15">10<tspan fill="#24557e" font-weight="400" font-size="3.9" stroke="none">℃</tspan></text>
<text x="45.7" y="74.5" font-size="4.4" font-weight="700" dominant-baseline="central" transform="rotate(0.06 45.7 74.5)" fill="#3a92dc" stroke="#3a92dc" stroke-width="0.15">11<tspan fill="#24557e" font-weight="400" font-size="3.9" stroke="none">℃</tspan></text>
<text x="45.7" y="79.4" font-size="4.4" font-weight="700" dominant-baseline="central" transform="rotate(0.06 45.7 79.4)" fill="#3a92dc" stroke="#3a92dc" stroke-width="0.15">13<tspan fill="#24557e" font-weight="400" font-size="3.9" stroke="none">℃</tspan></text>
<text x="48" y="84.3" font-size="4.4" font-weight="700" dominant-baseline="central" transform="rotate(0.06 48 84.3)" fill="#3a92dc" stroke="#3a92dc" stroke-width="0.15">8<tspan fill="#24557e" font-weight="400" font-size="3.9" stroke="none">℃</tspan></text>
<text x="48" y="99.6" font-size="4.4" font-weight="700" dominant-baseline="central" transform="rotate(0.06 48 99.6)" fill="#3a92dc" stroke="#3a92dc" stroke-width="0.15">9<tspan fill="#24557e" font-weight="400" font-size="3.9" stroke="none">℃</tspan></text>
<text x="45.7" y="105.6" font-size="4.4" font-weight="700" dominant-baseline="central" transform="rotate(0.06 45.7 105.6)" fill="#3a92dc" stroke="#3a92dc" stroke-width="0.15">12<tspan fill="#24557e" font-weight="400" font-size="3.9" stroke="none">℃</tspan></text>
<text x="48" y="111.6" font-size="4.4" font-weight="700" dominant-baseline="central" transform="rotate(0.06 48 111.6)" fill="#3a92dc" stroke="#3a92dc" stroke-width="0.15">9<tspan fill="#24557e" font-weight="400" font-size="3.9" stroke="none">℃</tspan></text>
<text x="67.4" y="54" font-size="4.4" font-weight="700" dominant-baseline="central" transform="rotate(0.06 67.4 54)" fill="#3a92dc" stroke="#3a92dc" stroke-width="0.15">11<tspan fill="#24557e" font-weight="400" font-size="3.9" stroke="none">℃</tspan></text>
<text x="67.4" y="60" font-size="4.4" font-weight="700" dominant-baseline="central" transform="rotate(0.06 67.4 60)" fill="#3a92dc" stroke="#3a92dc" stroke-width="0.15">12<tspan fill="#24557e" font-weight="400" font-size="3.9" stroke="none">℃</tspan></text>
<text x="69.7" y="66" font-size="4.4" font-weight="700" dominant-baseline="central" transform="rotate(0.06 69.7 66)" fill="#3a92dc" stroke="#3a92dc" stroke-width="0.15">8<tspan fill="#24557e" font-weight="400" font-size="3.9" stroke="none">℃</tspan></text>
<text x="67.4" y="74.5" font-size="4.4" font-weight="700" dominant-baseline="central" transform="rotate(0.06 67.4 74.5)" fill="#3a92dc" stroke="#3a92dc" stroke-width="0.15">12<tspan fill="#24557e" font-weight="400" font-size="3.9" stroke="none">℃</tspan></text>
<text x="67.4" y="79.4" font-size="4.4" font-weight="700" dominant-baseline="central" transform="rotate(0.06 67.4 79.4)" fill="#3a92dc" stroke="#3a92dc" stroke-width="0.15">10<tspan fill="#24557e" font-weight="400" font-size="3.9" stroke="none">℃</tspan></text>
<text x="69.7" y="84.3" font-size="4.4" font-weight="700" dominant-baseline="central" transform="rotate(0.06 69.7 84.3)" fill="#3a92dc" stroke="#3a92dc" stroke-width="0.15">8<tspan fill="#24557e" font-weight="400" font-size="3.9" stroke="none">℃</tspan></text>
<text x="69.7" y="99.6" font-size="4.4" font-weight="700" dominant-baseline="central" transform="rotate(0.06 69.7 99.6)" fill="#3a92dc" stroke="#3a92dc" stroke-width="0.15">9<tspan fill="#24557e" font-weight="400" font-size="3.9" stroke="none">℃</tspan></text>
<text x="67.4" y="105.6" font-size="4.4" font-weight="700" dominant-baseline="central" transform="rotate(0.06 67.4 105.6)" fill="#3a92dc" stroke="#3a92dc" stroke-width="0.15">11<tspan fill="#24557e" font-weight="400" font-size="3.9" stroke="none">℃</tspan></text>
<text x="67.4" y="111.6" font-size="4.4" font-weight="700" dominant-baseline="central" transform="rotate(0.06 67.4 111.6)" fill="#3a92dc" stroke="#3a92dc" stroke-width="0.15">11<tspan fill="#24557e" font-weight="400" font-size="3.9" stroke="none">℃</tspan></text>
<text x="92.3" y="74.5" font-size="4.4" font-weight="700" dominant-baseline="central" transform="rotate(0.06 92.3 74.5)" fill="#3a92dc" stroke="#3a92dc" stroke-width="0.15">9<tspan fill="#24557e" font-weight="400" font-size="3.9" stroke="none">℃</tspan></text>
<text x="90" y="79.4" font-size="4.4" font-weight="700" dominant-baseline="central" transform="rotate(0.06 90 79.4)" fill="#3a92dc" stroke="#3a92dc" stroke-width="0.15">10<tspan fill="#24557e" font-weight="400" font-size="3.9" stroke="none">℃</tspan></text>
<text x="92.3" y="84.3" font-size="4.4" font-weight="700" dominant-baseline="central" transform="rotate(0.06 92.3 84.3)" fill="#3a92dc" stroke="#3a92dc" stroke-width="0.15">9<tspan fill="#24557e" font-weight="400" font-size="3.9" stroke="none">℃</tspan></text>
<text x="90" y="99.6" font-size="4.4" font-weight="700" dominant-baseline="central" transform="rotate(0.06 90 99.6)" fill="#f09a1c" stroke="#f09a1c" stroke-width="0.15">36<tspan fill="#8a6a30" font-weight="400" font-size="3.9" stroke="none">℃</tspan></text>
<text x="90" y="105.6" font-size="4.4" font-weight="700" dominant-baseline="central" transform="rotate(0.06 90 105.6)" fill="#3a92dc" stroke="#3a92dc" stroke-width="0.15">11<tspan fill="#24557e" font-weight="400" font-size="3.9" stroke="none">℃</tspan></text>
<text x="92.3" y="111.6" font-size="4.4" font-weight="700" dominant-baseline="central" transform="rotate(0.06 92.3 111.6)" fill="#3a92dc" stroke="#3a92dc" stroke-width="0.15">8<tspan fill="#24557e" font-weight="400" font-size="3.9" stroke="none">℃</tspan></text>
<text x="112.5" y="99.6" font-size="4.4" font-weight="700" dominant-baseline="central" transform="rotate(0.06 112.5 99.6)" fill="#3a92dc" stroke="#3a92dc" stroke-width="0.15">12<tspan fill="#24557e" font-weight="400" font-size="3.9" stroke="none">℃</tspan></text>
<text x="114.8" y="105.6" font-size="4.4" font-weight="700" dominant-baseline="central" transform="rotate(0.06 114.8 105.6)" fill="#3a92dc" stroke="#3a92dc" stroke-width="0.15">9<tspan fill="#24557e" font-weight="400" font-size="3.9" stroke="none">℃</tspan></text>
<text x="112.5" y="111.6" font-size="4.4" font-weight="700" dominant-baseline="central" transform="rotate(0.06 112.5 111.6)" fill="#3a92dc" stroke="#3a92dc" stroke-width="0.15">10<tspan fill="#24557e" font-weight="400" font-size="3.9" stroke="none">℃</tspan></text>
<text x="154" y="54" font-size="4.4" font-weight="700" dominant-baseline="central" transform="rotate(0.06 154 54)" fill="#3a92dc" stroke="#3a92dc" stroke-width="0.15">13<tspan fill="#24557e" font-weight="400" font-size="3.9" stroke="none">℃</tspan></text>
<text x="154" y="60" font-size="4.4" font-weight="700" dominant-baseline="central" transform="rotate(0.06 154 60)" fill="#3a92dc" stroke="#3a92dc" stroke-width="0.15">13<tspan fill="#24557e" font-weight="400" font-size="3.9" stroke="none">℃</tspan></text>
<text x="154" y="66" font-size="4.4" font-weight="700" dominant-baseline="central" transform="rotate(0.06 154 66)" fill="#3a92dc" stroke="#3a92dc" stroke-width="0.15">12<tspan fill="#24557e" font-weight="400" font-size="3.9" stroke="none">℃</tspan></text>
<text x="156.3" y="74.5" font-size="4.4" font-weight="700" dominant-baseline="central" transform="rotate(0.06 156.3 74.5)" fill="#3a92dc" stroke="#3a92dc" stroke-width="0.15">8<tspan fill="#24557e" font-weight="400" font-size="3.9" stroke="none">℃</tspan></text>
<text x="154" y="79.4" font-size="4.4" font-weight="700" dominant-baseline="central" transform="rotate(0.06 154 79.4)" fill="#3a92dc" stroke="#3a92dc" stroke-width="0.15">12<tspan fill="#24557e" font-weight="400" font-size="3.9" stroke="none">℃</tspan></text>
<text x="154" y="84.3" font-size="4.4" font-weight="700" dominant-baseline="central" transform="rotate(0.06 154 84.3)" fill="#3a92dc" stroke="#3a92dc" stroke-width="0.15">12<tspan fill="#24557e" font-weight="400" font-size="3.9" stroke="none">℃</tspan></text>
<text x="154" y="99.6" font-size="4.4" font-weight="700" dominant-baseline="central" transform="rotate(0.06 154 99.6)" fill="#3a92dc" stroke="#3a92dc" stroke-width="0.15">11<tspan fill="#24557e" font-weight="400" font-size="3.9" stroke="none">℃</tspan></text>
<text x="156.3" y="105.6" font-size="4.4" font-weight="700" dominant-baseline="central" transform="rotate(0.06 156.3 105.6)" fill="#3a92dc" stroke="#3a92dc" stroke-width="0.15">8<tspan fill="#24557e" font-weight="400" font-size="3.9" stroke="none">℃</tspan></text>
<text x="154" y="111.6" font-size="4.4" font-weight="700" dominant-baseline="central" transform="rotate(0.06 154 111.6)" fill="#3a92dc" stroke="#3a92dc" stroke-width="0.15">10<tspan fill="#24557e" font-weight="400" font-size="3.9" stroke="none">℃</tspan></text>
<text x="177.9" y="54" font-size="4.4" font-weight="700" dominant-baseline="central" transform="rotate(0.06 177.9 54)" fill="#3a92dc" stroke="#3a92dc" stroke-width="0.15">8<tspan fill="#24557e" font-weight="400" font-size="3.9" stroke="none">℃</tspan></text>
<text x="175.6" y="60" font-size="4.4" font-weight="700" dominant-baseline="central" transform="rotate(0.06 175.6 60)" fill="#3a92dc" stroke="#3a92dc" stroke-width="0.15">12<tspan fill="#24557e" font-weight="400" font-size="3.9" stroke="none">℃</tspan></text>
<text x="175.6" y="66" font-size="4.4" font-weight="700" dominant-baseline="central" transform="rotate(0.06 175.6 66)" fill="#3a92dc" stroke="#3a92dc" stroke-width="0.15">10<tspan fill="#24557e" font-weight="400" font-size="3.9" stroke="none">℃</tspan></text>
<text x="175.6" y="74.5" font-size="4.4" font-weight="700" dominant-baseline="central" transform="rotate(0.06 175.6 74.5)" fill="#3a92dc" stroke="#3a92dc" stroke-width="0.15">11<tspan fill="#24557e" font-weight="400" font-size="3.9" stroke="none">℃</tspan></text>
<text x="175.6" y="79.4" font-size="4.4" font-weight="700" dominant-baseline="central" transform="rotate(0.06 175.6 79.4)" fill="#3a92dc" stroke="#3a92dc" stroke-width="0.15">11<tspan fill="#24557e" font-weight="400" font-size="3.9" stroke="none">℃</tspan></text>
<text x="175.6" y="84.3" font-size="4.4" font-weight="700" dominant-baseline="central" transform="rotate(0.06 175.6 84.3)" fill="#3a92dc" stroke="#3a92dc" stroke-width="0.15">10<tspan fill="#24557e" font-weight="400" font-size="3.9" stroke="none">℃</tspan></text>
<text x="175.6" y="99.6" font-size="4.4" font-weight="700" dominant-baseline="central" transform="rotate(0.06 175.6 99.6)" fill="#3a92dc" stroke="#3a92dc" stroke-width="0.15">12<tspan fill="#24557e" font-weight="400" font-size="3.9" stroke="none">℃</tspan></text>
<text x="177.9" y="105.6" font-size="4.4" font-weight="700" dominant-baseline="central" transform="rotate(0.06 177.9 105.6)" fill="#3a92dc" stroke="#3a92dc" stroke-width="0.15">9<tspan fill="#24557e" font-weight="400" font-size="3.9" stroke="none">℃</tspan></text>
<text x="175.6" y="111.6" font-size="4.4" font-weight="700" dominant-baseline="central" transform="rotate(0.06 175.6 111.6)" fill="#3a92dc" stroke="#3a92dc" stroke-width="0.15">12<tspan fill="#24557e" font-weight="400" font-size="3.9" stroke="none">℃</tspan></text>
<text x="197.4" y="54" font-size="4.4" font-weight="700" dominant-baseline="central" transform="rotate(0.06 197.4 54)" fill="#3a92dc" stroke="#3a92dc" stroke-width="0.15">11<tspan fill="#24557e" font-weight="400" font-size="3.9" stroke="none">℃</tspan></text>
<text x="197.4" y="60" font-size="4.4" font-weight="700" dominant-baseline="central" transform="rotate(0.06 197.4 60)" fill="#3a92dc" stroke="#3a92dc" stroke-width="0.15">12<tspan fill="#24557e" font-weight="400" font-size="3.9" stroke="none">℃</tspan></text>
<text x="197.4" y="66" font-size="4.4" font-weight="700" dominant-baseline="central" transform="rotate(0.06 197.4 66)" fill="#3a92dc" stroke="#3a92dc" stroke-width="0.15">13<tspan fill="#24557e" font-weight="400" font-size="3.9" stroke="none">℃</tspan></text>
<text x="197.4" y="74.5" font-size="4.4" font-weight="700" dominant-baseline="central" transform="rotate(0.06 197.4 74.5)" fill="#f09a1c" stroke="#f09a1c" stroke-width="0.15">19<tspan fill="#8a6a30" font-weight="400" font-size="3.9" stroke="none">℃</tspan></text>
<text x="199.7" y="79.4" font-size="4.4" font-weight="700" dominant-baseline="central" transform="rotate(0.06 199.7 79.4)" fill="#3a92dc" stroke="#3a92dc" stroke-width="0.15">9<tspan fill="#24557e" font-weight="400" font-size="3.9" stroke="none">℃</tspan></text>
<text x="197.4" y="99.6" font-size="4.4" font-weight="700" dominant-baseline="central" transform="rotate(0.06 197.4 99.6)" fill="#3a92dc" stroke="#3a92dc" stroke-width="0.15">12<tspan fill="#24557e" font-weight="400" font-size="3.9" stroke="none">℃</tspan></text>
<text x="197.4" y="105.6" font-size="4.4" font-weight="700" dominant-baseline="central" transform="rotate(0.06 197.4 105.6)" fill="#3a92dc" stroke="#3a92dc" stroke-width="0.15">12<tspan fill="#24557e" font-weight="400" font-size="3.9" stroke="none">℃</tspan></text>
<text x="197.4" y="111.6" font-size="4.4" font-weight="700" dominant-baseline="central" transform="rotate(0.06 197.4 111.6)" fill="#3a92dc" stroke="#3a92dc" stroke-width="0.15">13<tspan fill="#24557e" font-weight="400" font-size="3.9" stroke="none">℃</tspan></text>
<text x="216.4" y="54" font-size="4.4" font-weight="700" dominant-baseline="central" transform="rotate(0.06 216.4 54)" fill="#3a92dc" stroke="#3a92dc" stroke-width="0.15">10<tspan fill="#24557e" font-weight="400" font-size="3.9" stroke="none">℃</tspan></text>
<text x="216.4" y="60" font-size="4.4" font-weight="700" dominant-baseline="central" transform="rotate(0.06 216.4 60)" fill="#3a92dc" stroke="#3a92dc" stroke-width="0.15">11<tspan fill="#24557e" font-weight="400" font-size="3.9" stroke="none">℃</tspan></text>
<text x="218.7" y="66" font-size="4.4" font-weight="700" dominant-baseline="central" transform="rotate(0.06 218.7 66)" fill="#3a92dc" stroke="#3a92dc" stroke-width="0.15">9<tspan fill="#24557e" font-weight="400" font-size="3.9" stroke="none">℃</tspan></text>
<text x="216.4" y="74.5" font-size="4.4" font-weight="700" dominant-baseline="central" transform="rotate(0.06 216.4 74.5)" fill="#3a92dc" stroke="#3a92dc" stroke-width="0.15">12<tspan fill="#24557e" font-weight="400" font-size="3.9" stroke="none">℃</tspan></text>
<text x="216.4" y="79.4" font-size="4.4" font-weight="700" dominant-baseline="central" transform="rotate(0.06 216.4 79.4)" fill="#3a92dc" stroke="#3a92dc" stroke-width="0.15">14<tspan fill="#24557e" font-weight="400" font-size="3.9" stroke="none">℃</tspan></text>
<text x="218.7" y="84.3" font-size="4.4" font-weight="700" dominant-baseline="central" transform="rotate(0.06 218.7 84.3)" fill="#3a92dc" stroke="#3a92dc" stroke-width="0.15">9<tspan fill="#24557e" font-weight="400" font-size="3.9" stroke="none">℃</tspan></text>
<text x="216.4" y="99.6" font-size="4.4" font-weight="700" dominant-baseline="central" transform="rotate(0.06 216.4 99.6)" fill="#3a92dc" stroke="#3a92dc" stroke-width="0.15">12<tspan fill="#24557e" font-weight="400" font-size="3.9" stroke="none">℃</tspan></text>
<text x="218.7" y="105.6" font-size="4.4" font-weight="700" dominant-baseline="central" transform="rotate(0.06 218.7 105.6)" fill="#3a92dc" stroke="#3a92dc" stroke-width="0.15">8<tspan fill="#24557e" font-weight="400" font-size="3.9" stroke="none">℃</tspan></text>
<text x="216.4" y="111.6" font-size="4.4" font-weight="700" dominant-baseline="central" transform="rotate(0.06 216.4 111.6)" fill="#3a92dc" stroke="#3a92dc" stroke-width="0.15">12<tspan fill="#24557e" font-weight="400" font-size="3.9" stroke="none">℃</tspan></text>
<text x="237.4" y="99.6" font-size="4.4" font-weight="700" dominant-baseline="central" transform="rotate(0.06 237.4 99.6)" fill="#3a92dc" stroke="#3a92dc" stroke-width="0.15">10<tspan fill="#24557e" font-weight="400" font-size="3.9" stroke="none">℃</tspan></text>
<text x="237.4" y="105.6" font-size="4.4" font-weight="700" dominant-baseline="central" transform="rotate(0.06 237.4 105.6)" fill="#3a92dc" stroke="#3a92dc" stroke-width="0.15">12<tspan fill="#24557e" font-weight="400" font-size="3.9" stroke="none">℃</tspan></text>
<text x="237.4" y="111.6" font-size="4.4" font-weight="700" dominant-baseline="central" transform="rotate(0.06 237.4 111.6)" fill="#3a92dc" stroke="#3a92dc" stroke-width="0.15">13<tspan fill="#24557e" font-weight="400" font-size="3.9" stroke="none">℃</tspan></text>
<text x="276.9" y="54" font-size="4.4" font-weight="700" dominant-baseline="central" transform="rotate(0.06 276.9 54)" fill="#3a92dc" stroke="#3a92dc" stroke-width="0.15">12<tspan fill="#24557e" font-weight="400" font-size="3.9" stroke="none">℃</tspan></text>
<text x="276.9" y="60" font-size="4.4" font-weight="700" dominant-baseline="central" transform="rotate(0.06 276.9 60)" fill="#3a92dc" stroke="#3a92dc" stroke-width="0.15">11<tspan fill="#24557e" font-weight="400" font-size="3.9" stroke="none">℃</tspan></text>
<text x="276.9" y="66" font-size="4.4" font-weight="700" dominant-baseline="central" transform="rotate(0.06 276.9 66)" fill="#3a92dc" stroke="#3a92dc" stroke-width="0.15">21<tspan fill="#24557e" font-weight="400" font-size="3.9" stroke="none">℃</tspan></text>
<text x="276.9" y="74.5" font-size="4.4" font-weight="700" dominant-baseline="central" transform="rotate(0.06 276.9 74.5)" fill="#3a92dc" stroke="#3a92dc" stroke-width="0.15">11<tspan fill="#24557e" font-weight="400" font-size="3.9" stroke="none">℃</tspan></text>
<text x="276.9" y="79.4" font-size="4.4" font-weight="700" dominant-baseline="central" transform="rotate(0.06 276.9 79.4)" fill="#3a92dc" stroke="#3a92dc" stroke-width="0.15">12<tspan fill="#24557e" font-weight="400" font-size="3.9" stroke="none">℃</tspan></text>
<text x="276.9" y="84.3" font-size="4.4" font-weight="700" dominant-baseline="central" transform="rotate(0.06 276.9 84.3)" fill="#3a92dc" stroke="#3a92dc" stroke-width="0.15">12<tspan fill="#24557e" font-weight="400" font-size="3.9" stroke="none">℃</tspan></text>
<text x="276.9" y="99.6" font-size="4.4" font-weight="700" dominant-baseline="central" transform="rotate(0.06 276.9 99.6)" fill="#3a92dc" stroke="#3a92dc" stroke-width="0.15">12<tspan fill="#24557e" font-weight="400" font-size="3.9" stroke="none">℃</tspan></text>
<text x="276.9" y="105.6" font-size="4.4" font-weight="700" dominant-baseline="central" transform="rotate(0.06 276.9 105.6)" fill="#3a92dc" stroke="#3a92dc" stroke-width="0.15">11<tspan fill="#24557e" font-weight="400" font-size="3.9" stroke="none">℃</tspan></text>
<text x="276.9" y="111.6" font-size="4.4" font-weight="700" dominant-baseline="central" transform="rotate(0.06 276.9 111.6)" fill="#3a92dc" stroke="#3a92dc" stroke-width="0.15">11<tspan fill="#24557e" font-weight="400" font-size="3.9" stroke="none">℃</tspan></text>
<text x="301" y="74.5" font-size="4.4" font-weight="700" dominant-baseline="central" transform="rotate(0.06 301 74.5)" fill="#3a92dc" stroke="#3a92dc" stroke-width="0.15">10<tspan fill="#24557e" font-weight="400" font-size="3.9" stroke="none">℃</tspan></text>
<text x="301" y="79.4" font-size="4.4" font-weight="700" dominant-baseline="central" transform="rotate(0.06 301 79.4)" fill="#3a92dc" stroke="#3a92dc" stroke-width="0.15">21<tspan fill="#24557e" font-weight="400" font-size="3.9" stroke="none">℃</tspan></text>
<text x="301" y="84.3" font-size="4.4" font-weight="700" dominant-baseline="central" transform="rotate(0.06 301 84.3)" fill="#3a92dc" stroke="#3a92dc" stroke-width="0.15">10<tspan fill="#24557e" font-weight="400" font-size="3.9" stroke="none">℃</tspan></text>
<text x="301" y="99.6" font-size="4.4" font-weight="700" dominant-baseline="central" transform="rotate(0.06 301 99.6)" fill="#3a92dc" stroke="#3a92dc" stroke-width="0.15">14<tspan fill="#24557e" font-weight="400" font-size="3.9" stroke="none">℃</tspan></text>
<text x="301" y="105.6" font-size="4.4" font-weight="700" dominant-baseline="central" transform="rotate(0.06 301 105.6)" fill="#3a92dc" stroke="#3a92dc" stroke-width="0.15">21<tspan fill="#24557e" font-weight="400" font-size="3.9" stroke="none">℃</tspan></text>
<text x="301" y="111.6" font-size="4.4" font-weight="700" dominant-baseline="central" transform="rotate(0.06 301 111.6)" fill="#3a92dc" stroke="#3a92dc" stroke-width="0.15">10<tspan fill="#24557e" font-weight="400" font-size="3.9" stroke="none">℃</tspan></text>
<text x="326.7" y="54" font-size="4.4" font-weight="700" dominant-baseline="central" transform="rotate(0.06 326.7 54)" fill="#3a92dc" stroke="#3a92dc" stroke-width="0.15">9<tspan fill="#24557e" font-weight="400" font-size="3.9" stroke="none">℃</tspan></text>
<text x="324.4" y="60" font-size="4.4" font-weight="700" dominant-baseline="central" transform="rotate(0.06 324.4 60)" fill="#3a92dc" stroke="#3a92dc" stroke-width="0.15">12<tspan fill="#24557e" font-weight="400" font-size="3.9" stroke="none">℃</tspan></text>
<text x="324.4" y="66" font-size="4.4" font-weight="700" dominant-baseline="central" transform="rotate(0.06 324.4 66)" fill="#3a92dc" stroke="#3a92dc" stroke-width="0.15">11<tspan fill="#24557e" font-weight="400" font-size="3.9" stroke="none">℃</tspan></text>
<text x="324.4" y="74.5" font-size="4.4" font-weight="700" dominant-baseline="central" transform="rotate(0.06 324.4 74.5)" fill="#3a92dc" stroke="#3a92dc" stroke-width="0.15">12<tspan fill="#24557e" font-weight="400" font-size="3.9" stroke="none">℃</tspan></text>
<text x="324.4" y="79.4" font-size="4.4" font-weight="700" dominant-baseline="central" transform="rotate(0.06 324.4 79.4)" fill="#3a92dc" stroke="#3a92dc" stroke-width="0.15">12<tspan fill="#24557e" font-weight="400" font-size="3.9" stroke="none">℃</tspan></text>
<text x="324.4" y="84.3" font-size="4.4" font-weight="700" dominant-baseline="central" transform="rotate(0.06 324.4 84.3)" fill="#3a92dc" stroke="#3a92dc" stroke-width="0.15">11<tspan fill="#24557e" font-weight="400" font-size="3.9" stroke="none">℃</tspan></text>
<text x="324.4" y="99.6" font-size="4.4" font-weight="700" dominant-baseline="central" transform="rotate(0.06 324.4 99.6)" fill="#3a92dc" stroke="#3a92dc" stroke-width="0.15">14<tspan fill="#24557e" font-weight="400" font-size="3.9" stroke="none">℃</tspan></text>
<text x="324.4" y="105.6" font-size="4.4" font-weight="700" dominant-baseline="central" transform="rotate(0.06 324.4 105.6)" fill="#3a92dc" stroke="#3a92dc" stroke-width="0.15">12<tspan fill="#24557e" font-weight="400" font-size="3.9" stroke="none">℃</tspan></text>
<text x="324.4" y="111.6" font-size="4.4" font-weight="700" dominant-baseline="central" transform="rotate(0.06 324.4 111.6)" fill="#3a92dc" stroke="#3a92dc" stroke-width="0.15">11<tspan fill="#24557e" font-weight="400" font-size="3.9" stroke="none">℃</tspan></text>
<line x1="93.2" y1="117" x2="93.2" y2="127.8" stroke="#dcd23c" stroke-width="1.2" />
<line x1="93.2" y1="120.5" x2="93.2" y2="123" stroke="#3a86c8" stroke-width="1.2" />
<polyline points="90.6,130.2 93.2,127.8 95.8,130.2" fill="none" stroke="#dcd23c" stroke-width="1.1"/>
<polyline points="90.6,132.4 93.2,130 95.8,132.4" fill="none" stroke="#dcd23c" stroke-width="1.1"/>
<polyline points="93.2,129.5 93.2,133 96,136.4" fill="none" stroke="#dcd23c" stroke-width="1.1"/>
<text x="85.2" y="136.2" font-size="4.3" fill="#e6d83e" font-weight="700" text-anchor="start" dominant-baseline="central" transform="rotate(0.06 85.2 136.2)" stroke="#e6d83e" stroke-width="0.25">301</text>
<polyline points="90.8,140 93.2,142.6 95.6,140" fill="none" stroke="#dcd23c" stroke-width="1.1"/>
<polyline points="90.8,142.6 93.2,145.2 95.6,142.6" fill="none" stroke="#dcd23c" stroke-width="1.1"/>
<line x1="93.2" y1="138.6" x2="93.2" y2="183" stroke="#dcd23c" stroke-width="1.2" />
<line x1="93.2" y1="148" x2="93.2" y2="150" stroke="#3a86c8" stroke-width="1.2" />
<line x1="93.2" y1="152.4" x2="93.2" y2="154.4" stroke="#3a86c8" stroke-width="1.2" />
<circle cx="93.4" cy="190.8" r="7.9" fill="none" stroke="#d8cc3c" stroke-width="1.1"/>
<circle cx="103.3" cy="196.5" r="7.9" fill="none" stroke="#d23a3a" stroke-width="1.1"/>
<circle cx="93.4" cy="201.8" r="7.9" fill="none" stroke="#d23a3a" stroke-width="1.1"/>
<line x1="93.4" y1="209.7" x2="93.4" y2="225.1" stroke="#d23a3a" stroke-width="1.2" />
<circle cx="81" cy="119.9" r="1.2" fill="#e09a20"/><text x="82.4" y="119.9" font-size="4" dominant-baseline="central" transform="rotate(0.06 82.4 119.9)" fill="#b8a45a">℃</text>
<circle cx="81" cy="125.1" r="1.2" fill="#e09a20"/><text x="82.4" y="125.1" font-size="4" dominant-baseline="central" transform="rotate(0.06 82.4 125.1)" fill="#b8a45a">℃</text>
<circle cx="81" cy="130.5" r="1.2" fill="#e09a20"/><text x="82.4" y="130.5" font-size="4" dominant-baseline="central" transform="rotate(0.06 82.4 130.5)" fill="#b8a45a">℃</text>
<circle cx="81" cy="147.5" r="1.2" fill="#e09a20"/><text x="82.4" y="147.5" font-size="4" dominant-baseline="central" transform="rotate(0.06 82.4 147.5)" fill="#b8a45a">℃</text>
<circle cx="81" cy="153.2" r="1.2" fill="#e09a20"/><text x="82.4" y="153.2" font-size="4" dominant-baseline="central" transform="rotate(0.06 82.4 153.2)" fill="#b8a45a">℃</text>
<circle cx="81" cy="158.5" r="1.2" fill="#e09a20"/><text x="82.4" y="158.5" font-size="4" dominant-baseline="central" transform="rotate(0.06 82.4 158.5)" fill="#b8a45a">℃</text>
<circle cx="81" cy="166.4" r="1.2" fill="#e09a20"/><text x="82.4" y="166.4" font-size="4" dominant-baseline="central" transform="rotate(0.06 82.4 166.4)" fill="#b8a45a">℃</text>
<circle cx="81" cy="171.8" r="1.2" fill="#e09a20"/><text x="82.4" y="171.8" font-size="4" dominant-baseline="central" transform="rotate(0.06 82.4 171.8)" fill="#b8a45a">℃</text>
<circle cx="81" cy="177.3" r="1.2" fill="#e09a20"/><text x="82.4" y="177.3" font-size="4" dominant-baseline="central" transform="rotate(0.06 82.4 177.3)" fill="#b8a45a">℃</text>
<circle cx="81" cy="210.5" r="1.2" fill="#e09a20"/><text x="82.4" y="210.5" font-size="4" dominant-baseline="central" transform="rotate(0.06 82.4 210.5)" fill="#b8a45a">℃</text>
<circle cx="81" cy="217" r="1.2" fill="#e09a20"/><text x="82.4" y="217" font-size="4" dominant-baseline="central" transform="rotate(0.06 82.4 217)" fill="#b8a45a">℃</text>
<circle cx="81" cy="223" r="1.2" fill="#e09a20"/><text x="82.4" y="223" font-size="4" dominant-baseline="central" transform="rotate(0.06 82.4 223)" fill="#b8a45a">℃</text>
<line x1="280.2" y1="117" x2="280.2" y2="127.8" stroke="#dcd23c" stroke-width="1.2" />
<line x1="280.2" y1="120.5" x2="280.2" y2="123" stroke="#3a86c8" stroke-width="1.2" />
<polyline points="277.6,130.2 280.2,127.8 282.8,130.2" fill="none" stroke="#dcd23c" stroke-width="1.1"/>
<polyline points="277.6,132.4 280.2,130 282.8,132.4" fill="none" stroke="#dcd23c" stroke-width="1.1"/>
<polyline points="280.2,129.5 280.2,133 283,136.4" fill="none" stroke="#dcd23c" stroke-width="1.1"/>
<text x="271.4" y="136.2" font-size="4.3" fill="#e6d83e" font-weight="700" text-anchor="start" dominant-baseline="central" transform="rotate(0.06 271.4 136.2)" stroke="#e6d83e" stroke-width="0.25">302</text>
<polyline points="277.8,140 280.2,142.6 282.6,140" fill="none" stroke="#dcd23c" stroke-width="1.1"/>
<polyline points="277.8,142.6 280.2,145.2 282.6,142.6" fill="none" stroke="#dcd23c" stroke-width="1.1"/>
<line x1="280.2" y1="138.6" x2="280.2" y2="183" stroke="#dcd23c" stroke-width="1.2" />
<line x1="280.2" y1="148" x2="280.2" y2="150" stroke="#3a86c8" stroke-width="1.2" />
<line x1="280.2" y1="152.4" x2="280.2" y2="154.4" stroke="#3a86c8" stroke-width="1.2" />
<circle cx="280.4" cy="190.8" r="7.9" fill="none" stroke="#d8cc3c" stroke-width="1.1"/>
<circle cx="290.3" cy="196.5" r="7.9" fill="none" stroke="#d23a3a" stroke-width="1.1"/>
<circle cx="280.4" cy="201.8" r="7.9" fill="none" stroke="#d23a3a" stroke-width="1.1"/>
<line x1="280.4" y1="209.7" x2="280.4" y2="225.1" stroke="#d23a3a" stroke-width="1.2" />
<circle cx="268" cy="119.9" r="1.2" fill="#e09a20"/><text x="269.4" y="119.9" font-size="4" dominant-baseline="central" transform="rotate(0.06 269.4 119.9)" fill="#b8a45a">℃</text>
<circle cx="268" cy="125.1" r="1.2" fill="#e09a20"/><text x="269.4" y="125.1" font-size="4" dominant-baseline="central" transform="rotate(0.06 269.4 125.1)" fill="#b8a45a">℃</text>
<circle cx="268" cy="130.5" r="1.2" fill="#e09a20"/><text x="269.4" y="130.5" font-size="4" dominant-baseline="central" transform="rotate(0.06 269.4 130.5)" fill="#b8a45a">℃</text>
<circle cx="268" cy="147.5" r="1.2" fill="#e09a20"/><text x="269.4" y="147.5" font-size="4" dominant-baseline="central" transform="rotate(0.06 269.4 147.5)" fill="#b8a45a">℃</text>
<circle cx="268" cy="153.2" r="1.2" fill="#e09a20"/><text x="269.4" y="153.2" font-size="4" dominant-baseline="central" transform="rotate(0.06 269.4 153.2)" fill="#b8a45a">℃</text>
<circle cx="268" cy="158.5" r="1.2" fill="#e09a20"/><text x="269.4" y="158.5" font-size="4" dominant-baseline="central" transform="rotate(0.06 269.4 158.5)" fill="#b8a45a">℃</text>
<circle cx="268" cy="166.4" r="1.2" fill="#e09a20"/><text x="269.4" y="166.4" font-size="4" dominant-baseline="central" transform="rotate(0.06 269.4 166.4)" fill="#b8a45a">℃</text>
<circle cx="268" cy="171.8" r="1.2" fill="#e09a20"/><text x="269.4" y="171.8" font-size="4" dominant-baseline="central" transform="rotate(0.06 269.4 171.8)" fill="#b8a45a">℃</text>
<circle cx="268" cy="177.3" r="1.2" fill="#e09a20"/><text x="269.4" y="177.3" font-size="4" dominant-baseline="central" transform="rotate(0.06 269.4 177.3)" fill="#b8a45a">℃</text>
<circle cx="268" cy="210.5" r="1.2" fill="#e09a20"/><text x="269.4" y="210.5" font-size="4" dominant-baseline="central" transform="rotate(0.06 269.4 210.5)" fill="#b8a45a">℃</text>
<circle cx="268" cy="217" r="1.2" fill="#e09a20"/><text x="269.4" y="217" font-size="4" dominant-baseline="central" transform="rotate(0.06 269.4 217)" fill="#b8a45a">℃</text>
<circle cx="268" cy="223" r="1.2" fill="#e09a20"/><text x="269.4" y="223" font-size="4" dominant-baseline="central" transform="rotate(0.06 269.4 223)" fill="#b8a45a">℃</text>
<rect x="137.4" y="184.1" width="94.3" height="13.5" fill="#4cb6ea" stroke="#d8d23c" stroke-width="1.2"/>
<text x="184.6" y="190.5" transform="rotate(0.06 184.6 190.5)" font-size="6.4" fill="#a8d87a" text-anchor="middle" dominant-baseline="central" letter-spacing="0.45" font-family='"Liberation Serif","Noto Serif CJK SC",serif'>丹阳变自动综合测温系统</text>
</svg>
<svg class="panel" style="left:400px;top:14px" width="377" height="222" viewBox="400 14 377 222" font-family='"Liberation Sans","Noto Sans CJK SC",sans-serif'>
<rect x="400.3" y="14.3" width="376.3" height="221.5" fill="#2a2a2a" />
<rect x="400.3" y="14.3" width="376.3" height="18.5" fill="url(#gTool)" />
<rect x="400.3" y="14.3" width="376.3" height="0.6" fill="#8e8e8e" />
<rect x="406.6" y="16.8" width="10.2" height="2.5" fill="url(#gOrangeBar)" rx="0.6"/><rect x="406.6" y="18.8" width="10.2" height="8" fill="url(#gIconBlue)" rx="1"/><rect x="409.15" y="23.8" width="5.1" height="0.9" fill="#d8f2ff" opacity="0.85"/>
<text x="411.7" y="30" font-size="3.4" fill="#2a2a2a" font-weight="700" text-anchor="middle" dominant-baseline="central" transform="rotate(0.06 411.7 30)" >概要图</text>
<rect x="424.5" y="16.8" width="10.2" height="2.5" fill="url(#gOrangeBar)" rx="0.6"/><rect x="424.5" y="18.8" width="10.2" height="8" fill="url(#gIconBlue)" rx="1"/><rect x="429.6" y="21.8" width="3.06" height="2.2" fill="#d8f2ff" opacity="0.7"/><rect x="426.54" y="22.9" width="2.55" height="0.8" fill="#d8f2ff" opacity="0.6"/>
<text x="429.6" y="30" font-size="3.4" fill="#2a2a2a" font-weight="700" text-anchor="middle" dominant-baseline="central" transform="rotate(0.06 429.6 30)" >详细图</text>
<rect x="442.3" y="16.8" width="10.2" height="2.5" fill="url(#gOrangeBar)" rx="0.6"/><rect x="442.3" y="18.8" width="10.2" height="8" fill="url(#gIconBlue)" rx="1"/><polyline points="444.34,24 446.38,22 448.42,23.2 450.66,21.6" fill="none" stroke="#e0f6ff" stroke-width="0.8" opacity="0.85"/>
<text x="447.4" y="30" font-size="3.4" fill="#2a2a2a" font-weight="700" text-anchor="middle" dominant-baseline="central" transform="rotate(0.06 447.4 30)" >曲线图</text>
<rect x="467.78" y="17.1" width="5.92" height="5.7" fill="#1a7cc4" rx="0.5"/><rect x="463.5" y="18.94" width="6.32" height="5.06" fill="url(#gIconBlue)" rx="0.6"/><rect x="464.01" y="24.28" width="9.18" height="1.84" fill="#8a97a3" rx="0.4"/><rect x="469.11" y="22.8" width="4.08" height="1.47" fill="#5f7486" />
<text x="468.6" y="30" font-size="3.4" fill="#2a2a2a" font-weight="700" text-anchor="middle" dominant-baseline="central" transform="rotate(0.06 468.6 30)" >操作设备</text>
<line x1="478.9" y1="16.3" x2="478.9" y2="31.3" stroke="#d6d6d6" stroke-width="0.5" />
<polygon points="483.8,22.1 488.42,18.6 488.42,20.14 494.8,20.14 494.8,24.06 488.42,24.06 488.42,25.6" fill="url(#gArrow)" stroke="#2a9ad8" stroke-width="0.4" stroke-linejoin="round"/>
<text x="489.3" y="30" font-size="3.4" fill="#2a2a2a" font-weight="700" text-anchor="middle" dominant-baseline="central" transform="rotate(0.06 489.3 30)" >前一页</text>
<polygon points="512.3,22.1 507.68,18.6 507.68,20.14 501.3,20.14 501.3,24.06 507.68,24.06 507.68,25.6" fill="url(#gArrow)" stroke="#2a9ad8" stroke-width="0.4" stroke-linejoin="round"/>
<text x="506.8" y="30" font-size="3.4" fill="#2a2a2a" font-weight="700" text-anchor="middle" dominant-baseline="central" transform="rotate(0.06 506.8 30)" >后一页</text>
<rect x="707.62" y="17.2" width="6.16" height="4.9" fill="url(#gBlueBtn)" rx="1"/><rect x="704" y="22.3" width="6.7" height="4.7" fill="url(#gOrangeBtn)" rx="1.2"/><rect x="710.97" y="22.1" width="6.43" height="4.9" fill="url(#gYellowBtn)" rx="1.2"/><rect x="722.9" y="17.2" width="13.1" height="9.8" fill="url(#gBlueBtn)" rx="1.3"/><rect x="741.4" y="17.2" width="12.9" height="9.8" fill="url(#gOrangeBtn)" rx="1.3"/><rect x="760" y="17.2" width="13.3" height="9.8" fill="url(#gYellowBtn)" rx="1.3"/><text x="710.7" y="30.3" font-size="3.3" fill="#1c1c1c" font-weight="700" text-anchor="middle" dominant-baseline="central" transform="rotate(0.06 710.7 30.3)" >所有</text><text x="729.45" y="30.3" font-size="3.3" fill="#1c1c1c" font-weight="700" text-anchor="middle" dominant-baseline="central" transform="rotate(0.06 729.45 30.3)" >正常</text><text x="747.85" y="30.3" font-size="3.3" fill="#1c1c1c" font-weight="700" text-anchor="middle" dominant-baseline="central" transform="rotate(0.06 747.85 30.3)" >超温</text><text x="766.65" y="30.3" font-size="3.3" fill="#1c1c1c" font-weight="700" text-anchor="middle" dominant-baseline="central" transform="rotate(0.06 766.65 30.3)" >故障</text>
<rect x="400.3" y="32.8" width="376.3" height="8.4" fill="url(#gInfo)" />
<text x="407.4" y="37.4" font-size="3.9" fill="#1e1e1e" font-weight="700" textLength="76.6" lengthAdjust="spacingAndGlyphs" dominant-baseline="central" transform="rotate(0.06 407.4 37.4)" >当前视图: 测温节点详细图&#160;&#160;第1页 | 共10页</text>
<rect x="771" y="41.2" width="5.6" height="194.6" fill="#505050" />
<rect x="771.2" y="41.6" width="5.2" height="4.6" fill="#ececec" />
<polygon points="772.3,45 775.3,45 773.8,42.6" fill="#111"/>
<rect x="771.2" y="230.8" width="5.2" height="4.6" fill="#ececec" />
<polygon points="772.3,232 775.3,232 773.8,234.4" fill="#111"/>
<rect x="771.2" y="106.2" width="5.2" height="4.6" fill="#b8b8b8" />
<rect x="400.3" y="14.3" width="0.9" height="221.5" fill="#2c2c2c" />
<rect x="403.8" y="44.6" width="58.1" height="21.7" fill="url(#gCard)" />
<text x="405.8" y="49.2" font-size="3.4" fill="#0e4c86" font-weight="500" text-anchor="start" dominant-baseline="central" transform="rotate(0.06 405.8 49.2)" >01#柜A相温度</text>
<text x="406.5" y="56.1" font-size="10.2" fill="#07192c" font-weight="700" textLength="10.2" lengthAdjust="spacingAndGlyphs" dominant-baseline="central" transform="rotate(0.06 406.5 56.1)" stroke="#07192c" stroke-width="0.25">17</text>
<text x="417.4" y="56.3" font-size="7.2" fill="#0c62a6" font-weight="700" text-anchor="start" dominant-baseline="central" transform="rotate(0.06 417.4 56.3)" >℃</text>
<rect x="406.6" y="62.1" width="6.8" height="1.9" fill="#8db2c8" />
<rect x="413.4" y="62.1" width="2.2" height="1.9" fill="#f6d23a" />
<rect x="415.6" y="62.1" width="9.6" height="1.9" fill="#f08a30" />
<text x="461" y="55" font-size="3.5" fill="#e6f6ff" font-weight="700" text-anchor="end" dominant-baseline="central" transform="rotate(0.06 461 55)" >0201#</text>
<text x="461" y="59" font-size="3.5" fill="#e6f6ff" font-weight="700" text-anchor="end" dominant-baseline="central" transform="rotate(0.06 461 59)" >08:36</text>
<rect x="452.4" y="62.2" width="6.2" height="1.5" fill="#d4ecf8" />
<rect x="463.66" y="44.6" width="58.1" height="21.7" fill="url(#gCard)" />
<text x="465.66" y="49.2" font-size="3.4" fill="#0e4c86" font-weight="500" text-anchor="start" dominant-baseline="central" transform="rotate(0.06 465.66 49.2)" >01#柜B相温度</text>
<text x="466.36" y="56.1" font-size="10.2" fill="#07192c" font-weight="700" textLength="10.2" lengthAdjust="spacingAndGlyphs" dominant-baseline="central" transform="rotate(0.06 466.36 56.1)" stroke="#07192c" stroke-width="0.25">17</text>
<text x="477.26" y="56.3" font-size="7.2" fill="#0c62a6" font-weight="700" text-anchor="start" dominant-baseline="central" transform="rotate(0.06 477.26 56.3)" >℃</text>
<rect x="466.46" y="62.1" width="6.8" height="1.9" fill="#8db2c8" />
<rect x="473.26" y="62.1" width="2.2" height="1.9" fill="#f6d23a" />
<rect x="475.46" y="62.1" width="9.6" height="1.9" fill="#f08a30" />
<text x="520.86" y="55" font-size="3.5" fill="#e6f6ff" font-weight="700" text-anchor="end" dominant-baseline="central" transform="rotate(0.06 520.86 55)" >0202#</text>
<text x="520.86" y="59" font-size="3.5" fill="#e6f6ff" font-weight="700" text-anchor="end" dominant-baseline="central" transform="rotate(0.06 520.86 59)" >08:33</text>
<rect x="512.26" y="62.2" width="6.2" height="1.5" fill="#d4ecf8" />
<rect x="523.52" y="44.6" width="58.1" height="21.7" fill="url(#gCard)" />
<text x="525.52" y="49.2" font-size="3.4" fill="#0e4c86" font-weight="500" text-anchor="start" dominant-baseline="central" transform="rotate(0.06 525.52 49.2)" >01#柜C相温度</text>
<text x="526.22" y="56.1" font-size="10.2" fill="#07192c" font-weight="700" textLength="10.2" lengthAdjust="spacingAndGlyphs" dominant-baseline="central" transform="rotate(0.06 526.22 56.1)" stroke="#07192c" stroke-width="0.25">17</text>
<text x="537.12" y="56.3" font-size="7.2" fill="#0c62a6" font-weight="700" text-anchor="start" dominant-baseline="central" transform="rotate(0.06 537.12 56.3)" >℃</text>
<rect x="526.32" y="62.1" width="6.8" height="1.9" fill="#8db2c8" />
<rect x="533.12" y="62.1" width="2.2" height="1.9" fill="#f6d23a" />
<rect x="535.32" y="62.1" width="9.6" height="1.9" fill="#f08a30" />
<text x="580.72" y="55" font-size="3.5" fill="#e6f6ff" font-weight="700" text-anchor="end" dominant-baseline="central" transform="rotate(0.06 580.72 55)" >0203#</text>
<text x="580.72" y="59" font-size="3.5" fill="#e6f6ff" font-weight="700" text-anchor="end" dominant-baseline="central" transform="rotate(0.06 580.72 59)" >08:52</text>
<rect x="572.12" y="62.2" width="6.2" height="1.5" fill="#d4ecf8" />
<rect x="583.38" y="44.6" width="58.1" height="21.7" fill="url(#gCard)" />
<text x="585.38" y="49.2" font-size="3.4" fill="#0e4c86" font-weight="500" text-anchor="start" dominant-baseline="central" transform="rotate(0.06 585.38 49.2)" >02#柜A相温度</text>
<text x="586.08" y="56.1" font-size="10.2" fill="#07192c" font-weight="700" textLength="10.2" lengthAdjust="spacingAndGlyphs" dominant-baseline="central" transform="rotate(0.06 586.08 56.1)" stroke="#07192c" stroke-width="0.25">18</text>
<text x="596.98" y="56.3" font-size="7.2" fill="#0c62a6" font-weight="700" text-anchor="start" dominant-baseline="central" transform="rotate(0.06 596.98 56.3)" >℃</text>
<rect x="586.18" y="62.1" width="6.8" height="1.9" fill="#8db2c8" />
<rect x="592.98" y="62.1" width="2.2" height="1.9" fill="#f6d23a" />
<rect x="595.18" y="62.1" width="9.6" height="1.9" fill="#f08a30" />
<text x="640.58" y="55" font-size="3.5" fill="#e6f6ff" font-weight="700" text-anchor="end" dominant-baseline="central" transform="rotate(0.06 640.58 55)" >0204#</text>
<text x="640.58" y="59" font-size="3.5" fill="#e6f6ff" font-weight="700" text-anchor="end" dominant-baseline="central" transform="rotate(0.06 640.58 59)" >08:57</text>
<rect x="631.98" y="62.2" width="6.2" height="1.5" fill="#d4ecf8" />
<rect x="643.24" y="44.6" width="58.1" height="21.7" fill="url(#gCard)" />
<text x="645.24" y="49.2" font-size="3.4" fill="#0e4c86" font-weight="500" text-anchor="start" dominant-baseline="central" transform="rotate(0.06 645.24 49.2)" >02#柜B相温度</text>
<text x="645.94" y="56.1" font-size="10.2" fill="#07192c" font-weight="700" textLength="10.2" lengthAdjust="spacingAndGlyphs" dominant-baseline="central" transform="rotate(0.06 645.94 56.1)" stroke="#07192c" stroke-width="0.25">16</text>
<text x="656.84" y="56.3" font-size="7.2" fill="#0c62a6" font-weight="700" text-anchor="start" dominant-baseline="central" transform="rotate(0.06 656.84 56.3)" >℃</text>
<rect x="646.04" y="62.1" width="6.8" height="1.9" fill="#8db2c8" />
<rect x="652.84" y="62.1" width="2.2" height="1.9" fill="#f6d23a" />
<rect x="655.04" y="62.1" width="9.6" height="1.9" fill="#f08a30" />
<text x="700.44" y="55" font-size="3.5" fill="#e6f6ff" font-weight="700" text-anchor="end" dominant-baseline="central" transform="rotate(0.06 700.44 55)" >0205#</text>
<text x="700.44" y="59" font-size="3.5" fill="#e6f6ff" font-weight="700" text-anchor="end" dominant-baseline="central" transform="rotate(0.06 700.44 59)" >08:32</text>
<rect x="691.84" y="62.2" width="6.2" height="1.5" fill="#d4ecf8" />
<rect x="703.1" y="44.6" width="58.1" height="21.7" fill="url(#gCard)" />
<text x="705.1" y="49.2" font-size="3.4" fill="#0e4c86" font-weight="500" text-anchor="start" dominant-baseline="central" transform="rotate(0.06 705.1 49.2)" >02#柜C相温度</text>
<text x="705.8" y="56.1" font-size="10.2" fill="#07192c" font-weight="700" textLength="10.2" lengthAdjust="spacingAndGlyphs" dominant-baseline="central" transform="rotate(0.06 705.8 56.1)" stroke="#07192c" stroke-width="0.25">20</text>
<text x="716.7" y="56.3" font-size="7.2" fill="#0c62a6" font-weight="700" text-anchor="start" dominant-baseline="central" transform="rotate(0.06 716.7 56.3)" >℃</text>
<rect x="705.9" y="62.1" width="6.8" height="1.9" fill="#8db2c8" />
<rect x="712.7" y="62.1" width="2.2" height="1.9" fill="#f6d23a" />
<rect x="714.9" y="62.1" width="9.6" height="1.9" fill="#f08a30" />
<text x="760.3" y="55" font-size="3.5" fill="#e6f6ff" font-weight="700" text-anchor="end" dominant-baseline="central" transform="rotate(0.06 760.3 55)" >0206#</text>
<text x="760.3" y="59" font-size="3.5" fill="#e6f6ff" font-weight="700" text-anchor="end" dominant-baseline="central" transform="rotate(0.06 760.3 59)" >08:31</text>
<rect x="751.7" y="62.2" width="6.2" height="1.5" fill="#d4ecf8" />
<rect x="403.8" y="67.9" width="58.1" height="21.7" fill="url(#gCard)" />
<text x="405.8" y="72.5" font-size="3.4" fill="#0e4c86" font-weight="500" text-anchor="start" dominant-baseline="central" transform="rotate(0.06 405.8 72.5)" >03#柜A相温度</text>
<text x="406.5" y="79.4" font-size="10.2" fill="#07192c" font-weight="700" textLength="10.2" lengthAdjust="spacingAndGlyphs" dominant-baseline="central" transform="rotate(0.06 406.5 79.4)" stroke="#07192c" stroke-width="0.25">21</text>
<text x="417.4" y="79.6" font-size="7.2" fill="#0c62a6" font-weight="700" text-anchor="start" dominant-baseline="central" transform="rotate(0.06 417.4 79.6)" >℃</text>
<rect x="406.6" y="85.4" width="6.8" height="1.9" fill="#8db2c8" />
<rect x="413.4" y="85.4" width="2.2" height="1.9" fill="#f6d23a" />
<rect x="415.6" y="85.4" width="9.6" height="1.9" fill="#f08a30" />
<text x="461" y="78.3" font-size="3.5" fill="#e6f6ff" font-weight="700" text-anchor="end" dominant-baseline="central" transform="rotate(0.06 461 78.3)" >0207#</text>
<text x="461" y="82.3" font-size="3.5" fill="#e6f6ff" font-weight="700" text-anchor="end" dominant-baseline="central" transform="rotate(0.06 461 82.3)" >08:57</text>
<rect x="452.4" y="85.5" width="6.2" height="1.5" fill="#d4ecf8" />
<rect x="463.66" y="67.9" width="58.1" height="21.7" fill="url(#gCard)" />
<text x="465.66" y="72.5" font-size="3.4" fill="#0e4c86" font-weight="500" text-anchor="start" dominant-baseline="central" transform="rotate(0.06 465.66 72.5)" >03#柜B相温度</text>
<text x="466.36" y="79.4" font-size="10.2" fill="#07192c" font-weight="700" textLength="10.2" lengthAdjust="spacingAndGlyphs" dominant-baseline="central" transform="rotate(0.06 466.36 79.4)" stroke="#07192c" stroke-width="0.25">20</text>
<text x="477.26" y="79.6" font-size="7.2" fill="#0c62a6" font-weight="700" text-anchor="start" dominant-baseline="central" transform="rotate(0.06 477.26 79.6)" >℃</text>
<rect x="466.46" y="85.4" width="6.8" height="1.9" fill="#8db2c8" />
<rect x="473.26" y="85.4" width="2.2" height="1.9" fill="#f6d23a" />
<rect x="475.46" y="85.4" width="9.6" height="1.9" fill="#f08a30" />
<text x="520.86" y="78.3" font-size="3.5" fill="#e6f6ff" font-weight="700" text-anchor="end" dominant-baseline="central" transform="rotate(0.06 520.86 78.3)" >0208#</text>
<text x="520.86" y="82.3" font-size="3.5" fill="#e6f6ff" font-weight="700" text-anchor="end" dominant-baseline="central" transform="rotate(0.06 520.86 82.3)" >08:51</text>
<rect x="512.26" y="85.5" width="6.2" height="1.5" fill="#d4ecf8" />
<rect x="523.52" y="67.9" width="58.1" height="21.7" fill="url(#gCard)" />
<text x="525.52" y="72.5" font-size="3.4" fill="#0e4c86" font-weight="500" text-anchor="start" dominant-baseline="central" transform="rotate(0.06 525.52 72.5)" >03#柜C相温度</text>
<text x="526.22" y="79.4" font-size="10.2" fill="#07192c" font-weight="700" textLength="10.2" lengthAdjust="spacingAndGlyphs" dominant-baseline="central" transform="rotate(0.06 526.22 79.4)" stroke="#07192c" stroke-width="0.25">17</text>
<text x="537.12" y="79.6" font-size="7.2" fill="#0c62a6" font-weight="700" text-anchor="start" dominant-baseline="central" transform="rotate(0.06 537.12 79.6)" >℃</text>
<rect x="526.32" y="85.4" width="6.8" height="1.9" fill="#8db2c8" />
<rect x="533.12" y="85.4" width="2.2" height="1.9" fill="#f6d23a" />
<rect x="535.32" y="85.4" width="9.6" height="1.9" fill="#f08a30" />
<text x="580.72" y="78.3" font-size="3.5" fill="#e6f6ff" font-weight="700" text-anchor="end" dominant-baseline="central" transform="rotate(0.06 580.72 78.3)" >0209#</text>
<text x="580.72" y="82.3" font-size="3.5" fill="#e6f6ff" font-weight="700" text-anchor="end" dominant-baseline="central" transform="rotate(0.06 580.72 82.3)" >08:36</text>
<rect x="572.12" y="85.5" width="6.2" height="1.5" fill="#d4ecf8" />
<rect x="583.38" y="67.9" width="58.1" height="21.7" fill="url(#gCard)" />
<text x="585.38" y="72.5" font-size="3.4" fill="#0e4c86" font-weight="500" text-anchor="start" dominant-baseline="central" transform="rotate(0.06 585.38 72.5)" >04#柜A相温度</text>
<text x="586.08" y="79.4" font-size="10.2" fill="#07192c" font-weight="700" textLength="10.2" lengthAdjust="spacingAndGlyphs" dominant-baseline="central" transform="rotate(0.06 586.08 79.4)" stroke="#07192c" stroke-width="0.25">19</text>
<text x="596.98" y="79.6" font-size="7.2" fill="#0c62a6" font-weight="700" text-anchor="start" dominant-baseline="central" transform="rotate(0.06 596.98 79.6)" >℃</text>
<rect x="586.18" y="85.4" width="6.8" height="1.9" fill="#8db2c8" />
<rect x="592.98" y="85.4" width="2.2" height="1.9" fill="#f6d23a" />
<rect x="595.18" y="85.4" width="9.6" height="1.9" fill="#f08a30" />
<text x="640.58" y="78.3" font-size="3.5" fill="#e6f6ff" font-weight="700" text-anchor="end" dominant-baseline="central" transform="rotate(0.06 640.58 78.3)" >0210#</text>
<text x="640.58" y="82.3" font-size="3.5" fill="#e6f6ff" font-weight="700" text-anchor="end" dominant-baseline="central" transform="rotate(0.06 640.58 82.3)" >08:36</text>
<rect x="631.98" y="85.5" width="6.2" height="1.5" fill="#d4ecf8" />
<rect x="643.24" y="67.9" width="58.1" height="21.7" fill="url(#gCard)" />
<text x="645.24" y="72.5" font-size="3.4" fill="#0e4c86" font-weight="500" text-anchor="start" dominant-baseline="central" transform="rotate(0.06 645.24 72.5)" >04#柜B相温度</text>
<text x="645.94" y="79.4" font-size="10.2" fill="#07192c" font-weight="700" textLength="10.2" lengthAdjust="spacingAndGlyphs" dominant-baseline="central" transform="rotate(0.06 645.94 79.4)" stroke="#07192c" stroke-width="0.25">18</text>
<text x="656.84" y="79.6" font-size="7.2" fill="#0c62a6" font-weight="700" text-anchor="start" dominant-baseline="central" transform="rotate(0.06 656.84 79.6)" >℃</text>
<rect x="646.04" y="85.4" width="6.8" height="1.9" fill="#8db2c8" />
<rect x="652.84" y="85.4" width="2.2" height="1.9" fill="#f6d23a" />
<rect x="655.04" y="85.4" width="9.6" height="1.9" fill="#f08a30" />
<text x="700.44" y="78.3" font-size="3.5" fill="#e6f6ff" font-weight="700" text-anchor="end" dominant-baseline="central" transform="rotate(0.06 700.44 78.3)" >0211#</text>
<text x="700.44" y="82.3" font-size="3.5" fill="#e6f6ff" font-weight="700" text-anchor="end" dominant-baseline="central" transform="rotate(0.06 700.44 82.3)" >08:57</text>
<rect x="691.84" y="85.5" width="6.2" height="1.5" fill="#d4ecf8" />
<rect x="703.1" y="67.9" width="58.1" height="21.7" fill="url(#gCard)" />
<text x="705.1" y="72.5" font-size="3.4" fill="#0e4c86" font-weight="500" text-anchor="start" dominant-baseline="central" transform="rotate(0.06 705.1 72.5)" >04#柜C相温度</text>
<text x="705.8" y="79.4" font-size="10.2" fill="#07192c" font-weight="700" textLength="10.2" lengthAdjust="spacingAndGlyphs" dominant-baseline="central" transform="rotate(0.06 705.8 79.4)" stroke="#07192c" stroke-width="0.25">20</text>
<text x="716.7" y="79.6" font-size="7.2" fill="#0c62a6" font-weight="700" text-anchor="start" dominant-baseline="central" transform="rotate(0.06 716.7 79.6)" >℃</text>
<rect x="705.9" y="85.4" width="6.8" height="1.9" fill="#8db2c8" />
<rect x="712.7" y="85.4" width="2.2" height="1.9" fill="#f6d23a" />
<rect x="714.9" y="85.4" width="9.6" height="1.9" fill="#f08a30" />
<text x="760.3" y="78.3" font-size="3.5" fill="#e6f6ff" font-weight="700" text-anchor="end" dominant-baseline="central" transform="rotate(0.06 760.3 78.3)" >0212#</text>
<text x="760.3" y="82.3" font-size="3.5" fill="#e6f6ff" font-weight="700" text-anchor="end" dominant-baseline="central" transform="rotate(0.06 760.3 82.3)" >08:57</text>
<rect x="751.7" y="85.5" width="6.2" height="1.5" fill="#d4ecf8" />
<rect x="403.8" y="91.2" width="58.1" height="21.7" fill="url(#gCard)" />
<text x="405.8" y="95.8" font-size="3.4" fill="#0e4c86" font-weight="500" text-anchor="start" dominant-baseline="central" transform="rotate(0.06 405.8 95.8)" >05#柜A相温度</text>
<text x="406.5" y="102.7" font-size="10.2" fill="#07192c" font-weight="700" textLength="10.2" lengthAdjust="spacingAndGlyphs" dominant-baseline="central" transform="rotate(0.06 406.5 102.7)" stroke="#07192c" stroke-width="0.25">20</text>
<text x="417.4" y="102.9" font-size="7.2" fill="#0c62a6" font-weight="700" text-anchor="start" dominant-baseline="central" transform="rotate(0.06 417.4 102.9)" >℃</text>
<rect x="406.6" y="108.7" width="6.8" height="1.9" fill="#8db2c8" />
<rect x="413.4" y="108.7" width="2.2" height="1.9" fill="#f6d23a" />
<rect x="415.6" y="108.7" width="9.6" height="1.9" fill="#f08a30" />
<text x="461" y="101.6" font-size="3.5" fill="#e6f6ff" font-weight="700" text-anchor="end" dominant-baseline="central" transform="rotate(0.06 461 101.6)" >0213#</text>
<text x="461" y="105.6" font-size="3.5" fill="#e6f6ff" font-weight="700" text-anchor="end" dominant-baseline="central" transform="rotate(0.06 461 105.6)" >08:54</text>
<rect x="452.4" y="108.8" width="6.2" height="1.5" fill="#d4ecf8" />
<rect x="463.66" y="91.2" width="58.1" height="21.7" fill="url(#gCard)" />
<text x="465.66" y="95.8" font-size="3.4" fill="#0e4c86" font-weight="500" text-anchor="start" dominant-baseline="central" transform="rotate(0.06 465.66 95.8)" >05#柜B相温度</text>
<text x="466.36" y="102.7" font-size="10.2" fill="#07192c" font-weight="700" textLength="10.2" lengthAdjust="spacingAndGlyphs" dominant-baseline="central" transform="rotate(0.06 466.36 102.7)" stroke="#07192c" stroke-width="0.25">21</text>
<text x="477.26" y="102.9" font-size="7.2" fill="#0c62a6" font-weight="700" text-anchor="start" dominant-baseline="central" transform="rotate(0.06 477.26 102.9)" >℃</text>
<rect x="466.46" y="108.7" width="6.8" height="1.9" fill="#8db2c8" />
<rect x="473.26" y="108.7" width="2.2" height="1.9" fill="#f6d23a" />
<rect x="475.46" y="108.7" width="9.6" height="1.9" fill="#f08a30" />
<text x="520.86" y="101.6" font-size="3.5" fill="#e6f6ff" font-weight="700" text-anchor="end" dominant-baseline="central" transform="rotate(0.06 520.86 101.6)" >0214#</text>
<text x="520.86" y="105.6" font-size="3.5" fill="#e6f6ff" font-weight="700" text-anchor="end" dominant-baseline="central" transform="rotate(0.06 520.86 105.6)" >08:33</text>
<rect x="512.26" y="108.8" width="6.2" height="1.5" fill="#d4ecf8" />
<rect x="523.52" y="91.2" width="58.1" height="21.7" fill="url(#gCard)" />
<text x="525.52" y="95.8" font-size="3.4" fill="#0e4c86" font-weight="500" text-anchor="start" dominant-baseline="central" transform="rotate(0.06 525.52 95.8)" >05#柜C相温度</text>
<text x="526.22" y="102.7" font-size="10.2" fill="#07192c" font-weight="700" textLength="10.2" lengthAdjust="spacingAndGlyphs" dominant-baseline="central" transform="rotate(0.06 526.22 102.7)" stroke="#07192c" stroke-width="0.25">19</text>
<text x="537.12" y="102.9" font-size="7.2" fill="#0c62a6" font-weight="700" text-anchor="start" dominant-baseline="central" transform="rotate(0.06 537.12 102.9)" >℃</text>
<rect x="526.32" y="108.7" width="6.8" height="1.9" fill="#8db2c8" />
<rect x="533.12" y="108.7" width="2.2" height="1.9" fill="#f6d23a" />
<rect x="535.32" y="108.7" width="9.6" height="1.9" fill="#f08a30" />
<text x="580.72" y="101.6" font-size="3.5" fill="#e6f6ff" font-weight="700" text-anchor="end" dominant-baseline="central" transform="rotate(0.06 580.72 101.6)" >0215#</text>
<text x="580.72" y="105.6" font-size="3.5" fill="#e6f6ff" font-weight="700" text-anchor="end" dominant-baseline="central" transform="rotate(0.06 580.72 105.6)" >08:36</text>
<rect x="572.12" y="108.8" width="6.2" height="1.5" fill="#d4ecf8" />
<rect x="583.38" y="91.2" width="58.1" height="21.7" fill="url(#gCard)" />
<text x="585.38" y="95.8" font-size="3.4" fill="#0e4c86" font-weight="500" text-anchor="start" dominant-baseline="central" transform="rotate(0.06 585.38 95.8)" >06#柜A相温度</text>
<text x="586.08" y="102.7" font-size="10.2" fill="#07192c" font-weight="700" textLength="10.2" lengthAdjust="spacingAndGlyphs" dominant-baseline="central" transform="rotate(0.06 586.08 102.7)" stroke="#07192c" stroke-width="0.25">20</text>
<text x="596.98" y="102.9" font-size="7.2" fill="#0c62a6" font-weight="700" text-anchor="start" dominant-baseline="central" transform="rotate(0.06 596.98 102.9)" >℃</text>
<rect x="586.18" y="108.7" width="6.8" height="1.9" fill="#8db2c8" />
<rect x="592.98" y="108.7" width="2.2" height="1.9" fill="#f6d23a" />
<rect x="595.18" y="108.7" width="9.6" height="1.9" fill="#f08a30" />
<text x="640.58" y="101.6" font-size="3.5" fill="#e6f6ff" font-weight="700" text-anchor="end" dominant-baseline="central" transform="rotate(0.06 640.58 101.6)" >0216#</text>
<text x="640.58" y="105.6" font-size="3.5" fill="#e6f6ff" font-weight="700" text-anchor="end" dominant-baseline="central" transform="rotate(0.06 640.58 105.6)" >08:33</text>
<rect x="631.98" y="108.8" width="6.2" height="1.5" fill="#d4ecf8" />
<rect x="643.24" y="91.2" width="58.1" height="21.7" fill="url(#gCard)" />
<text x="645.24" y="95.8" font-size="3.4" fill="#0e4c86" font-weight="500" text-anchor="start" dominant-baseline="central" transform="rotate(0.06 645.24 95.8)" >06#柜B相温度</text>
<text x="645.94" y="102.7" font-size="10.2" fill="#07192c" font-weight="700" textLength="10.2" lengthAdjust="spacingAndGlyphs" dominant-baseline="central" transform="rotate(0.06 645.94 102.7)" stroke="#07192c" stroke-width="0.25">19</text>
<text x="656.84" y="102.9" font-size="7.2" fill="#0c62a6" font-weight="700" text-anchor="start" dominant-baseline="central" transform="rotate(0.06 656.84 102.9)" >℃</text>
<rect x="646.04" y="108.7" width="6.8" height="1.9" fill="#8db2c8" />
<rect x="652.84" y="108.7" width="2.2" height="1.9" fill="#f6d23a" />
<rect x="655.04" y="108.7" width="9.6" height="1.9" fill="#f08a30" />
<text x="700.44" y="101.6" font-size="3.5" fill="#e6f6ff" font-weight="700" text-anchor="end" dominant-baseline="central" transform="rotate(0.06 700.44 101.6)" >0217#</text>
<text x="700.44" y="105.6" font-size="3.5" fill="#e6f6ff" font-weight="700" text-anchor="end" dominant-baseline="central" transform="rotate(0.06 700.44 105.6)" >08:54</text>
<rect x="691.84" y="108.8" width="6.2" height="1.5" fill="#d4ecf8" />
<rect x="703.1" y="91.2" width="58.1" height="21.7" fill="url(#gCard)" />
<text x="705.1" y="95.8" font-size="3.4" fill="#0e4c86" font-weight="500" text-anchor="start" dominant-baseline="central" transform="rotate(0.06 705.1 95.8)" >06#柜C相温度</text>
<text x="705.8" y="102.7" font-size="10.2" fill="#07192c" font-weight="700" textLength="10.2" lengthAdjust="spacingAndGlyphs" dominant-baseline="central" transform="rotate(0.06 705.8 102.7)" stroke="#07192c" stroke-width="0.25">19</text>
<text x="716.7" y="102.9" font-size="7.2" fill="#0c62a6" font-weight="700" text-anchor="start" dominant-baseline="central" transform="rotate(0.06 716.7 102.9)" >℃</text>
<rect x="705.9" y="108.7" width="6.8" height="1.9" fill="#8db2c8" />
<rect x="712.7" y="108.7" width="2.2" height="1.9" fill="#f6d23a" />
<rect x="714.9" y="108.7" width="9.6" height="1.9" fill="#f08a30" />
<text x="760.3" y="101.6" font-size="3.5" fill="#e6f6ff" font-weight="700" text-anchor="end" dominant-baseline="central" transform="rotate(0.06 760.3 101.6)" >0218#</text>
<text x="760.3" y="105.6" font-size="3.5" fill="#e6f6ff" font-weight="700" text-anchor="end" dominant-baseline="central" transform="rotate(0.06 760.3 105.6)" >08:31</text>
<rect x="751.7" y="108.8" width="6.2" height="1.5" fill="#d4ecf8" />
<rect x="403.8" y="114.5" width="58.1" height="21.7" fill="url(#gCard)" />
<text x="405.8" y="119.1" font-size="3.4" fill="#0e4c86" font-weight="500" text-anchor="start" dominant-baseline="central" transform="rotate(0.06 405.8 119.1)" >07#柜A相温度</text>
<text x="406.5" y="126" font-size="10.2" fill="#07192c" font-weight="700" textLength="10.2" lengthAdjust="spacingAndGlyphs" dominant-baseline="central" transform="rotate(0.06 406.5 126)" stroke="#07192c" stroke-width="0.25">20</text>
<text x="417.4" y="126.2" font-size="7.2" fill="#0c62a6" font-weight="700" text-anchor="start" dominant-baseline="central" transform="rotate(0.06 417.4 126.2)" >℃</text>
<rect x="406.6" y="132" width="6.8" height="1.9" fill="#8db2c8" />
<rect x="413.4" y="132" width="2.2" height="1.9" fill="#f6d23a" />
<rect x="415.6" y="132" width="9.6" height="1.9" fill="#f08a30" />
<text x="461" y="124.9" font-size="3.5" fill="#e6f6ff" font-weight="700" text-anchor="end" dominant-baseline="central" transform="rotate(0.06 461 124.9)" >0219#</text>
<text x="461" y="128.9" font-size="3.5" fill="#e6f6ff" font-weight="700" text-anchor="end" dominant-baseline="central" transform="rotate(0.06 461 128.9)" >08:32</text>
<rect x="452.4" y="132.1" width="6.2" height="1.5" fill="#d4ecf8" />
<rect x="463.66" y="114.5" width="58.1" height="21.7" fill="url(#gCard)" />
<text x="465.66" y="119.1" font-size="3.4" fill="#0e4c86" font-weight="500" text-anchor="start" dominant-baseline="central" transform="rotate(0.06 465.66 119.1)" >07#柜B相温度</text>
<text x="466.36" y="126" font-size="10.2" fill="#07192c" font-weight="700" textLength="10.2" lengthAdjust="spacingAndGlyphs" dominant-baseline="central" transform="rotate(0.06 466.36 126)" stroke="#07192c" stroke-width="0.25">19</text>
<text x="477.26" y="126.2" font-size="7.2" fill="#0c62a6" font-weight="700" text-anchor="start" dominant-baseline="central" transform="rotate(0.06 477.26 126.2)" >℃</text>
<rect x="466.46" y="132" width="6.8" height="1.9" fill="#8db2c8" />
<rect x="473.26" y="132" width="2.2" height="1.9" fill="#f6d23a" />
<rect x="475.46" y="132" width="9.6" height="1.9" fill="#f08a30" />
<text x="520.86" y="124.9" font-size="3.5" fill="#e6f6ff" font-weight="700" text-anchor="end" dominant-baseline="central" transform="rotate(0.06 520.86 124.9)" >0220#</text>
<text x="520.86" y="128.9" font-size="3.5" fill="#e6f6ff" font-weight="700" text-anchor="end" dominant-baseline="central" transform="rotate(0.06 520.86 128.9)" >08:33</text>
<rect x="512.26" y="132.1" width="6.2" height="1.5" fill="#d4ecf8" />
<rect x="523.52" y="114.5" width="58.1" height="21.7" fill="url(#gCard)" />
<text x="525.52" y="119.1" font-size="3.4" fill="#0e4c86" font-weight="500" text-anchor="start" dominant-baseline="central" transform="rotate(0.06 525.52 119.1)" >07#柜C相温度</text>
<text x="526.22" y="126" font-size="10.2" fill="#07192c" font-weight="700" textLength="10.2" lengthAdjust="spacingAndGlyphs" dominant-baseline="central" transform="rotate(0.06 526.22 126)" stroke="#07192c" stroke-width="0.25">19</text>
<text x="537.12" y="126.2" font-size="7.2" fill="#0c62a6" font-weight="700" text-anchor="start" dominant-baseline="central" transform="rotate(0.06 537.12 126.2)" >℃</text>
<rect x="526.32" y="132" width="6.8" height="1.9" fill="#8db2c8" />
<rect x="533.12" y="132" width="2.2" height="1.9" fill="#f6d23a" />
<rect x="535.32" y="132" width="9.6" height="1.9" fill="#f08a30" />
<text x="580.72" y="124.9" font-size="3.5" fill="#e6f6ff" font-weight="700" text-anchor="end" dominant-baseline="central" transform="rotate(0.06 580.72 124.9)" >0221#</text>
<text x="580.72" y="128.9" font-size="3.5" fill="#e6f6ff" font-weight="700" text-anchor="end" dominant-baseline="central" transform="rotate(0.06 580.72 128.9)" >08:31</text>
<rect x="572.12" y="132.1" width="6.2" height="1.5" fill="#d4ecf8" />
<rect x="583.38" y="114.5" width="58.1" height="21.7" fill="url(#gCard)" />
<text x="585.38" y="119.1" font-size="3.4" fill="#0e4c86" font-weight="500" text-anchor="start" dominant-baseline="central" transform="rotate(0.06 585.38 119.1)" >08#柜A相温度</text>
<text x="586.08" y="126" font-size="10.2" fill="#07192c" font-weight="700" textLength="10.2" lengthAdjust="spacingAndGlyphs" dominant-baseline="central" transform="rotate(0.06 586.08 126)" stroke="#07192c" stroke-width="0.25">19</text>
<text x="596.98" y="126.2" font-size="7.2" fill="#0c62a6" font-weight="700" text-anchor="start" dominant-baseline="central" transform="rotate(0.06 596.98 126.2)" >℃</text>
<rect x="586.18" y="132" width="6.8" height="1.9" fill="#8db2c8" />
<rect x="592.98" y="132" width="2.2" height="1.9" fill="#f6d23a" />
<rect x="595.18" y="132" width="9.6" height="1.9" fill="#f08a30" />
<text x="640.58" y="124.9" font-size="3.5" fill="#e6f6ff" font-weight="700" text-anchor="end" dominant-baseline="central" transform="rotate(0.06 640.58 124.9)" >0222#</text>
<text x="640.58" y="128.9" font-size="3.5" fill="#e6f6ff" font-weight="700" text-anchor="end" dominant-baseline="central" transform="rotate(0.06 640.58 128.9)" >08:51</text>
<rect x="631.98" y="132.1" width="6.2" height="1.5" fill="#d4ecf8" />
<rect x="643.24" y="114.5" width="58.1" height="21.7" fill="url(#gCard)" />
<text x="645.24" y="119.1" font-size="3.4" fill="#0e4c86" font-weight="500" text-anchor="start" dominant-baseline="central" transform="rotate(0.06 645.24 119.1)" >08#柜B相温度</text>
<text x="645.94" y="126" font-size="10.2" fill="#07192c" font-weight="700" textLength="10.2" lengthAdjust="spacingAndGlyphs" dominant-baseline="central" transform="rotate(0.06 645.94 126)" stroke="#07192c" stroke-width="0.25">20</text>
<text x="656.84" y="126.2" font-size="7.2" fill="#0c62a6" font-weight="700" text-anchor="start" dominant-baseline="central" transform="rotate(0.06 656.84 126.2)" >℃</text>
<rect x="646.04" y="132" width="6.8" height="1.9" fill="#8db2c8" />
<rect x="652.84" y="132" width="2.2" height="1.9" fill="#f6d23a" />
<rect x="655.04" y="132" width="9.6" height="1.9" fill="#f08a30" />
<text x="700.44" y="124.9" font-size="3.5" fill="#e6f6ff" font-weight="700" text-anchor="end" dominant-baseline="central" transform="rotate(0.06 700.44 124.9)" >0223#</text>
<text x="700.44" y="128.9" font-size="3.5" fill="#e6f6ff" font-weight="700" text-anchor="end" dominant-baseline="central" transform="rotate(0.06 700.44 128.9)" >08:31</text>
<rect x="691.84" y="132.1" width="6.2" height="1.5" fill="#d4ecf8" />
<rect x="703.1" y="114.5" width="58.1" height="21.7" fill="url(#gCard)" />
<text x="705.1" y="119.1" font-size="3.4" fill="#0e4c86" font-weight="500" text-anchor="start" dominant-baseline="central" transform="rotate(0.06 705.1 119.1)" >08#柜C相温度</text>
<text x="705.8" y="126" font-size="10.2" fill="#07192c" font-weight="700" textLength="10.2" lengthAdjust="spacingAndGlyphs" dominant-baseline="central" transform="rotate(0.06 705.8 126)" stroke="#07192c" stroke-width="0.25">19</text>
<text x="716.7" y="126.2" font-size="7.2" fill="#0c62a6" font-weight="700" text-anchor="start" dominant-baseline="central" transform="rotate(0.06 716.7 126.2)" >℃</text>
<rect x="705.9" y="132" width="6.8" height="1.9" fill="#8db2c8" />
<rect x="712.7" y="132" width="2.2" height="1.9" fill="#f6d23a" />
<rect x="714.9" y="132" width="9.6" height="1.9" fill="#f08a30" />
<text x="760.3" y="124.9" font-size="3.5" fill="#e6f6ff" font-weight="700" text-anchor="end" dominant-baseline="central" transform="rotate(0.06 760.3 124.9)" >0224#</text>
<text x="760.3" y="128.9" font-size="3.5" fill="#e6f6ff" font-weight="700" text-anchor="end" dominant-baseline="central" transform="rotate(0.06 760.3 128.9)" >08:51</text>
<rect x="751.7" y="132.1" width="6.2" height="1.5" fill="#d4ecf8" />
<rect x="403.8" y="137.8" width="58.1" height="21.7" fill="url(#gCard)" />
<text x="405.8" y="142.4" font-size="3.4" fill="#0e4c86" font-weight="500" text-anchor="start" dominant-baseline="central" transform="rotate(0.06 405.8 142.4)" >09#柜A相温度</text>
<text x="406.5" y="149.3" font-size="10.2" fill="#07192c" font-weight="700" textLength="10.2" lengthAdjust="spacingAndGlyphs" dominant-baseline="central" transform="rotate(0.06 406.5 149.3)" stroke="#07192c" stroke-width="0.25">20</text>
<text x="417.4" y="149.5" font-size="7.2" fill="#0c62a6" font-weight="700" text-anchor="start" dominant-baseline="central" transform="rotate(0.06 417.4 149.5)" >℃</text>
<rect x="406.6" y="155.3" width="6.8" height="1.9" fill="#8db2c8" />
<rect x="413.4" y="155.3" width="2.2" height="1.9" fill="#f6d23a" />
<rect x="415.6" y="155.3" width="9.6" height="1.9" fill="#f08a30" />
<text x="461" y="148.2" font-size="3.5" fill="#e6f6ff" font-weight="700" text-anchor="end" dominant-baseline="central" transform="rotate(0.06 461 148.2)" >0225#</text>
<text x="461" y="152.2" font-size="3.5" fill="#e6f6ff" font-weight="700" text-anchor="end" dominant-baseline="central" transform="rotate(0.06 461 152.2)" >08:57</text>
<rect x="452.4" y="155.4" width="6.2" height="1.5" fill="#d4ecf8" />
<rect x="463.66" y="137.8" width="58.1" height="21.7" fill="url(#gCard)" />
<text x="465.66" y="142.4" font-size="3.4" fill="#0e4c86" font-weight="500" text-anchor="start" dominant-baseline="central" transform="rotate(0.06 465.66 142.4)" >09#柜B相温度</text>
<text x="466.36" y="149.3" font-size="10.2" fill="#07192c" font-weight="700" textLength="10.2" lengthAdjust="spacingAndGlyphs" dominant-baseline="central" transform="rotate(0.06 466.36 149.3)" stroke="#07192c" stroke-width="0.25">18</text>
<text x="477.26" y="149.5" font-size="7.2" fill="#0c62a6" font-weight="700" text-anchor="start" dominant-baseline="central" transform="rotate(0.06 477.26 149.5)" >℃</text>
<rect x="466.46" y="155.3" width="6.8" height="1.9" fill="#8db2c8" />
<rect x="473.26" y="155.3" width="2.2" height="1.9" fill="#f6d23a" />
<rect x="475.46" y="155.3" width="9.6" height="1.9" fill="#f08a30" />
<text x="520.86" y="148.2" font-size="3.5" fill="#e6f6ff" font-weight="700" text-anchor="end" dominant-baseline="central" transform="rotate(0.06 520.86 148.2)" >0226#</text>
<text x="520.86" y="152.2" font-size="3.5" fill="#e6f6ff" font-weight="700" text-anchor="end" dominant-baseline="central" transform="rotate(0.06 520.86 152.2)" >08:54</text>
<rect x="512.26" y="155.4" width="6.2" height="1.5" fill="#d4ecf8" />
<rect x="523.52" y="137.8" width="58.1" height="21.7" fill="url(#gCard)" />
<text x="525.52" y="142.4" font-size="3.4" fill="#0e4c86" font-weight="500" text-anchor="start" dominant-baseline="central" transform="rotate(0.06 525.52 142.4)" >09#柜C相温度</text>
<text x="526.22" y="149.3" font-size="10.2" fill="#07192c" font-weight="700" textLength="10.2" lengthAdjust="spacingAndGlyphs" dominant-baseline="central" transform="rotate(0.06 526.22 149.3)" stroke="#07192c" stroke-width="0.25">20</text>
<text x="537.12" y="149.5" font-size="7.2" fill="#0c62a6" font-weight="700" text-anchor="start" dominant-baseline="central" transform="rotate(0.06 537.12 149.5)" >℃</text>
<rect x="526.32" y="155.3" width="6.8" height="1.9" fill="#8db2c8" />
<rect x="533.12" y="155.3" width="2.2" height="1.9" fill="#f6d23a" />
<rect x="535.32" y="155.3" width="9.6" height="1.9" fill="#f08a30" />
<text x="580.72" y="148.2" font-size="3.5" fill="#e6f6ff" font-weight="700" text-anchor="end" dominant-baseline="central" transform="rotate(0.06 580.72 148.2)" >0227#</text>
<text x="580.72" y="152.2" font-size="3.5" fill="#e6f6ff" font-weight="700" text-anchor="end" dominant-baseline="central" transform="rotate(0.06 580.72 152.2)" >08:54</text>
<rect x="572.12" y="155.4" width="6.2" height="1.5" fill="#d4ecf8" />
<rect x="583.38" y="137.8" width="58.1" height="21.7" fill="url(#gCard)" />
<text x="585.38" y="142.4" font-size="3.4" fill="#0e4c86" font-weight="500" text-anchor="start" dominant-baseline="central" transform="rotate(0.06 585.38 142.4)" >10#柜A相温度</text>
<text x="586.08" y="149.3" font-size="10.2" fill="#07192c" font-weight="700" textLength="10.2" lengthAdjust="spacingAndGlyphs" dominant-baseline="central" transform="rotate(0.06 586.08 149.3)" stroke="#07192c" stroke-width="0.25">19</text>
<text x="596.98" y="149.5" font-size="7.2" fill="#0c62a6" font-weight="700" text-anchor="start" dominant-baseline="central" transform="rotate(0.06 596.98 149.5)" >℃</text>
<rect x="586.18" y="155.3" width="6.8" height="1.9" fill="#8db2c8" />
<rect x="592.98" y="155.3" width="2.2" height="1.9" fill="#f6d23a" />
<rect x="595.18" y="155.3" width="9.6" height="1.9" fill="#f08a30" />
<text x="640.58" y="148.2" font-size="3.5" fill="#e6f6ff" font-weight="700" text-anchor="end" dominant-baseline="central" transform="rotate(0.06 640.58 148.2)" >0228#</text>
<text x="640.58" y="152.2" font-size="3.5" fill="#e6f6ff" font-weight="700" text-anchor="end" dominant-baseline="central" transform="rotate(0.06 640.58 152.2)" >08:54</text>
<rect x="631.98" y="155.4" width="6.2" height="1.5" fill="#d4ecf8" />
<rect x="643.24" y="137.8" width="58.1" height="21.7" fill="url(#gCard)" />
<text x="645.24" y="142.4" font-size="3.4" fill="#0e4c86" font-weight="500" text-anchor="start" dominant-baseline="central" transform="rotate(0.06 645.24 142.4)" >10#柜B相温度</text>
<text x="645.94" y="149.3" font-size="10.2" fill="#07192c" font-weight="700" textLength="10.2" lengthAdjust="spacingAndGlyphs" dominant-baseline="central" transform="rotate(0.06 645.94 149.3)" stroke="#07192c" stroke-width="0.25">20</text>
<text x="656.84" y="149.5" font-size="7.2" fill="#0c62a6" font-weight="700" text-anchor="start" dominant-baseline="central" transform="rotate(0.06 656.84 149.5)" >℃</text>
<rect x="646.04" y="155.3" width="6.8" height="1.9" fill="#8db2c8" />
<rect x="652.84" y="155.3" width="2.2" height="1.9" fill="#f6d23a" />
<rect x="655.04" y="155.3" width="9.6" height="1.9" fill="#f08a30" />
<text x="700.44" y="148.2" font-size="3.5" fill="#e6f6ff" font-weight="700" text-anchor="end" dominant-baseline="central" transform="rotate(0.06 700.44 148.2)" >0229#</text>
<text x="700.44" y="152.2" font-size="3.5" fill="#e6f6ff" font-weight="700" text-anchor="end" dominant-baseline="central" transform="rotate(0.06 700.44 152.2)" >08:57</text>
<rect x="691.84" y="155.4" width="6.2" height="1.5" fill="#d4ecf8" />
<rect x="703.1" y="137.8" width="58.1" height="21.7" fill="url(#gCard)" />
<text x="705.1" y="142.4" font-size="3.4" fill="#0e4c86" font-weight="500" text-anchor="start" dominant-baseline="central" transform="rotate(0.06 705.1 142.4)" >10#柜C相温度</text>
<text x="705.8" y="149.3" font-size="10.2" fill="#07192c" font-weight="700" textLength="10.2" lengthAdjust="spacingAndGlyphs" dominant-baseline="central" transform="rotate(0.06 705.8 149.3)" stroke="#07192c" stroke-width="0.25">18</text>
<text x="716.7" y="149.5" font-size="7.2" fill="#0c62a6" font-weight="700" text-anchor="start" dominant-baseline="central" transform="rotate(0.06 716.7 149.5)" >℃</text>
<rect x="705.9" y="155.3" width="6.8" height="1.9" fill="#8db2c8" />
<rect x="712.7" y="155.3" width="2.2" height="1.9" fill="#f6d23a" />
<rect x="714.9" y="155.3" width="9.6" height="1.9" fill="#f08a30" />
<text x="760.3" y="148.2" font-size="3.5" fill="#e6f6ff" font-weight="700" text-anchor="end" dominant-baseline="central" transform="rotate(0.06 760.3 148.2)" >0230#</text>
<text x="760.3" y="152.2" font-size="3.5" fill="#e6f6ff" font-weight="700" text-anchor="end" dominant-baseline="central" transform="rotate(0.06 760.3 152.2)" >08:33</text>
<rect x="751.7" y="155.4" width="6.2" height="1.5" fill="#d4ecf8" />
<rect x="403.8" y="161.1" width="58.1" height="21.7" fill="url(#gCard)" />
<text x="405.8" y="165.7" font-size="3.4" fill="#0e4c86" font-weight="500" text-anchor="start" dominant-baseline="central" transform="rotate(0.06 405.8 165.7)" >11#柜A相温度</text>
<text x="406.5" y="172.6" font-size="10.2" fill="#07192c" font-weight="700" textLength="10.2" lengthAdjust="spacingAndGlyphs" dominant-baseline="central" transform="rotate(0.06 406.5 172.6)" stroke="#07192c" stroke-width="0.25">19</text>
<text x="417.4" y="172.8" font-size="7.2" fill="#0c62a6" font-weight="700" text-anchor="start" dominant-baseline="central" transform="rotate(0.06 417.4 172.8)" >℃</text>
<rect x="406.6" y="178.6" width="6.8" height="1.9" fill="#8db2c8" />
<rect x="413.4" y="178.6" width="2.2" height="1.9" fill="#f6d23a" />
<rect x="415.6" y="178.6" width="9.6" height="1.9" fill="#f08a30" />
<text x="461" y="171.5" font-size="3.5" fill="#e6f6ff" font-weight="700" text-anchor="end" dominant-baseline="central" transform="rotate(0.06 461 171.5)" >0231#</text>
<text x="461" y="175.5" font-size="3.5" fill="#e6f6ff" font-weight="700" text-anchor="end" dominant-baseline="central" transform="rotate(0.06 461 175.5)" >08:52</text>
<rect x="452.4" y="178.7" width="6.2" height="1.5" fill="#d4ecf8" />
<rect x="463.66" y="161.1" width="58.1" height="21.7" fill="url(#gCard)" />
<text x="465.66" y="165.7" font-size="3.4" fill="#0e4c86" font-weight="500" text-anchor="start" dominant-baseline="central" transform="rotate(0.06 465.66 165.7)" >11#柜B相温度</text>
<text x="466.36" y="172.6" font-size="10.2" fill="#07192c" font-weight="700" textLength="10.2" lengthAdjust="spacingAndGlyphs" dominant-baseline="central" transform="rotate(0.06 466.36 172.6)" stroke="#07192c" stroke-width="0.25">20</text>
<text x="477.26" y="172.8" font-size="7.2" fill="#0c62a6" font-weight="700" text-anchor="start" dominant-baseline="central" transform="rotate(0.06 477.26 172.8)" >℃</text>
<rect x="466.46" y="178.6" width="6.8" height="1.9" fill="#8db2c8" />
<rect x="473.26" y="178.6" width="2.2" height="1.9" fill="#f6d23a" />
<rect x="475.46" y="178.6" width="9.6" height="1.9" fill="#f08a30" />
<text x="520.86" y="171.5" font-size="3.5" fill="#e6f6ff" font-weight="700" text-anchor="end" dominant-baseline="central" transform="rotate(0.06 520.86 171.5)" >0232#</text>
<text x="520.86" y="175.5" font-size="3.5" fill="#e6f6ff" font-weight="700" text-anchor="end" dominant-baseline="central" transform="rotate(0.06 520.86 175.5)" >08:32</text>
<rect x="512.26" y="178.7" width="6.2" height="1.5" fill="#d4ecf8" />
<rect x="523.52" y="161.1" width="58.1" height="21.7" fill="url(#gCard)" />
<text x="525.52" y="165.7" font-size="3.4" fill="#0e4c86" font-weight="500" text-anchor="start" dominant-baseline="central" transform="rotate(0.06 525.52 165.7)" >11#柜C相温度</text>
<text x="526.22" y="172.6" font-size="10.2" fill="#07192c" font-weight="700" textLength="10.2" lengthAdjust="spacingAndGlyphs" dominant-baseline="central" transform="rotate(0.06 526.22 172.6)" stroke="#07192c" stroke-width="0.25">19</text>
<text x="537.12" y="172.8" font-size="7.2" fill="#0c62a6" font-weight="700" text-anchor="start" dominant-baseline="central" transform="rotate(0.06 537.12 172.8)" >℃</text>
<rect x="526.32" y="178.6" width="6.8" height="1.9" fill="#8db2c8" />
<rect x="533.12" y="178.6" width="2.2" height="1.9" fill="#f6d23a" />
<rect x="535.32" y="178.6" width="9.6" height="1.9" fill="#f08a30" />
<text x="580.72" y="171.5" font-size="3.5" fill="#e6f6ff" font-weight="700" text-anchor="end" dominant-baseline="central" transform="rotate(0.06 580.72 171.5)" >0233#</text>
<text x="580.72" y="175.5" font-size="3.5" fill="#e6f6ff" font-weight="700" text-anchor="end" dominant-baseline="central" transform="rotate(0.06 580.72 175.5)" >08:31</text>
<rect x="572.12" y="178.7" width="6.2" height="1.5" fill="#d4ecf8" />
<rect x="583.38" y="161.1" width="58.1" height="21.7" fill="url(#gCard)" />
<text x="585.38" y="165.7" font-size="3.4" fill="#0e4c86" font-weight="500" text-anchor="start" dominant-baseline="central" transform="rotate(0.06 585.38 165.7)" >12#柜A相温度</text>
<text x="586.08" y="172.6" font-size="10.2" fill="#07192c" font-weight="700" textLength="10.2" lengthAdjust="spacingAndGlyphs" dominant-baseline="central" transform="rotate(0.06 586.08 172.6)" stroke="#07192c" stroke-width="0.25">19</text>
<text x="596.98" y="172.8" font-size="7.2" fill="#0c62a6" font-weight="700" text-anchor="start" dominant-baseline="central" transform="rotate(0.06 596.98 172.8)" >℃</text>
<rect x="586.18" y="178.6" width="6.8" height="1.9" fill="#8db2c8" />
<rect x="592.98" y="178.6" width="2.2" height="1.9" fill="#f6d23a" />
<rect x="595.18" y="178.6" width="9.6" height="1.9" fill="#f08a30" />
<text x="640.58" y="171.5" font-size="3.5" fill="#e6f6ff" font-weight="700" text-anchor="end" dominant-baseline="central" transform="rotate(0.06 640.58 171.5)" >0234#</text>
<text x="640.58" y="175.5" font-size="3.5" fill="#e6f6ff" font-weight="700" text-anchor="end" dominant-baseline="central" transform="rotate(0.06 640.58 175.5)" >08:33</text>
<rect x="631.98" y="178.7" width="6.2" height="1.5" fill="#d4ecf8" />
<rect x="643.24" y="161.1" width="58.1" height="21.7" fill="url(#gCard)" />
<text x="645.24" y="165.7" font-size="3.4" fill="#0e4c86" font-weight="500" text-anchor="start" dominant-baseline="central" transform="rotate(0.06 645.24 165.7)" >12#柜B相温度</text>
<text x="645.94" y="172.6" font-size="10.2" fill="#07192c" font-weight="700" textLength="10.2" lengthAdjust="spacingAndGlyphs" dominant-baseline="central" transform="rotate(0.06 645.94 172.6)" stroke="#07192c" stroke-width="0.25">19</text>
<text x="656.84" y="172.8" font-size="7.2" fill="#0c62a6" font-weight="700" text-anchor="start" dominant-baseline="central" transform="rotate(0.06 656.84 172.8)" >℃</text>
<rect x="646.04" y="178.6" width="6.8" height="1.9" fill="#8db2c8" />
<rect x="652.84" y="178.6" width="2.2" height="1.9" fill="#f6d23a" />
<rect x="655.04" y="178.6" width="9.6" height="1.9" fill="#f08a30" />
<text x="700.44" y="171.5" font-size="3.5" fill="#e6f6ff" font-weight="700" text-anchor="end" dominant-baseline="central" transform="rotate(0.06 700.44 171.5)" >0235#</text>
<text x="700.44" y="175.5" font-size="3.5" fill="#e6f6ff" font-weight="700" text-anchor="end" dominant-baseline="central" transform="rotate(0.06 700.44 175.5)" >08:57</text>
<rect x="691.84" y="178.7" width="6.2" height="1.5" fill="#d4ecf8" />
<rect x="703.1" y="161.1" width="58.1" height="21.7" fill="url(#gCard)" />
<text x="705.1" y="165.7" font-size="3.4" fill="#0e4c86" font-weight="500" text-anchor="start" dominant-baseline="central" transform="rotate(0.06 705.1 165.7)" >12#柜C相温度</text>
<text x="705.8" y="172.6" font-size="10.2" fill="#07192c" font-weight="700" textLength="10.2" lengthAdjust="spacingAndGlyphs" dominant-baseline="central" transform="rotate(0.06 705.8 172.6)" stroke="#07192c" stroke-width="0.25">20</text>
<text x="716.7" y="172.8" font-size="7.2" fill="#0c62a6" font-weight="700" text-anchor="start" dominant-baseline="central" transform="rotate(0.06 716.7 172.8)" >℃</text>
<rect x="705.9" y="178.6" width="6.8" height="1.9" fill="#8db2c8" />
<rect x="712.7" y="178.6" width="2.2" height="1.9" fill="#f6d23a" />
<rect x="714.9" y="178.6" width="9.6" height="1.9" fill="#f08a30" />
<text x="760.3" y="171.5" font-size="3.5" fill="#e6f6ff" font-weight="700" text-anchor="end" dominant-baseline="central" transform="rotate(0.06 760.3 171.5)" >0236#</text>
<text x="760.3" y="175.5" font-size="3.5" fill="#e6f6ff" font-weight="700" text-anchor="end" dominant-baseline="central" transform="rotate(0.06 760.3 175.5)" >08:36</text>
<rect x="751.7" y="178.7" width="6.2" height="1.5" fill="#d4ecf8" />
<rect x="403.8" y="184.4" width="58.1" height="21.7" fill="url(#gCard)" />
<text x="405.8" y="189" font-size="3.4" fill="#0e4c86" font-weight="500" text-anchor="start" dominant-baseline="central" transform="rotate(0.06 405.8 189)" >13#柜A相温度</text>
<text x="406.5" y="195.9" font-size="10.2" fill="#07192c" font-weight="700" textLength="10.2" lengthAdjust="spacingAndGlyphs" dominant-baseline="central" transform="rotate(0.06 406.5 195.9)" stroke="#07192c" stroke-width="0.25">20</text>
<text x="417.4" y="196.1" font-size="7.2" fill="#0c62a6" font-weight="700" text-anchor="start" dominant-baseline="central" transform="rotate(0.06 417.4 196.1)" >℃</text>
<rect x="406.6" y="201.9" width="6.8" height="1.9" fill="#8db2c8" />
<rect x="413.4" y="201.9" width="2.2" height="1.9" fill="#f6d23a" />
<rect x="415.6" y="201.9" width="9.6" height="1.9" fill="#f08a30" />
<text x="461" y="194.8" font-size="3.5" fill="#e6f6ff" font-weight="700" text-anchor="end" dominant-baseline="central" transform="rotate(0.06 461 194.8)" >0237#</text>
<text x="461" y="198.8" font-size="3.5" fill="#e6f6ff" font-weight="700" text-anchor="end" dominant-baseline="central" transform="rotate(0.06 461 198.8)" >08:51</text>
<rect x="452.4" y="202" width="6.2" height="1.5" fill="#d4ecf8" />
<rect x="463.66" y="184.4" width="58.1" height="21.7" fill="url(#gCard)" />
<text x="465.66" y="189" font-size="3.4" fill="#0e4c86" font-weight="500" text-anchor="start" dominant-baseline="central" transform="rotate(0.06 465.66 189)" >13#柜B相温度</text>
<text x="466.36" y="195.9" font-size="10.2" fill="#07192c" font-weight="700" textLength="10.2" lengthAdjust="spacingAndGlyphs" dominant-baseline="central" transform="rotate(0.06 466.36 195.9)" stroke="#07192c" stroke-width="0.25">20</text>
<text x="477.26" y="196.1" font-size="7.2" fill="#0c62a6" font-weight="700" text-anchor="start" dominant-baseline="central" transform="rotate(0.06 477.26 196.1)" >℃</text>
<rect x="466.46" y="201.9" width="6.8" height="1.9" fill="#8db2c8" />
<rect x="473.26" y="201.9" width="2.2" height="1.9" fill="#f6d23a" />
<rect x="475.46" y="201.9" width="9.6" height="1.9" fill="#f08a30" />
<text x="520.86" y="194.8" font-size="3.5" fill="#e6f6ff" font-weight="700" text-anchor="end" dominant-baseline="central" transform="rotate(0.06 520.86 194.8)" >0238#</text>
<text x="520.86" y="198.8" font-size="3.5" fill="#e6f6ff" font-weight="700" text-anchor="end" dominant-baseline="central" transform="rotate(0.06 520.86 198.8)" >08:54</text>
<rect x="512.26" y="202" width="6.2" height="1.5" fill="#d4ecf8" />
<rect x="523.52" y="184.4" width="58.1" height="21.7" fill="url(#gCard)" />
<text x="525.52" y="189" font-size="3.4" fill="#0e4c86" font-weight="500" text-anchor="start" dominant-baseline="central" transform="rotate(0.06 525.52 189)" >13#柜C相温度</text>
<text x="526.22" y="195.9" font-size="10.2" fill="#07192c" font-weight="700" textLength="10.2" lengthAdjust="spacingAndGlyphs" dominant-baseline="central" transform="rotate(0.06 526.22 195.9)" stroke="#07192c" stroke-width="0.25">21</text>
<text x="537.12" y="196.1" font-size="7.2" fill="#0c62a6" font-weight="700" text-anchor="start" dominant-baseline="central" transform="rotate(0.06 537.12 196.1)" >℃</text>
<rect x="526.32" y="201.9" width="6.8" height="1.9" fill="#8db2c8" />
<rect x="533.12" y="201.9" width="2.2" height="1.9" fill="#f6d23a" />
<rect x="535.32" y="201.9" width="9.6" height="1.9" fill="#f08a30" />
<text x="580.72" y="194.8" font-size="3.5" fill="#e6f6ff" font-weight="700" text-anchor="end" dominant-baseline="central" transform="rotate(0.06 580.72 194.8)" >0239#</text>
<text x="580.72" y="198.8" font-size="3.5" fill="#e6f6ff" font-weight="700" text-anchor="end" dominant-baseline="central" transform="rotate(0.06 580.72 198.8)" >08:51</text>
<rect x="572.12" y="202" width="6.2" height="1.5" fill="#d4ecf8" />
<rect x="583.38" y="184.4" width="58.1" height="21.7" fill="url(#gCard)" />
<text x="585.38" y="189" font-size="3.4" fill="#0e4c86" font-weight="500" text-anchor="start" dominant-baseline="central" transform="rotate(0.06 585.38 189)" >14#柜A相温度</text>
<text x="586.08" y="195.9" font-size="10.2" fill="#07192c" font-weight="700" textLength="10.2" lengthAdjust="spacingAndGlyphs" dominant-baseline="central" transform="rotate(0.06 586.08 195.9)" stroke="#07192c" stroke-width="0.25">21</text>
<text x="596.98" y="196.1" font-size="7.2" fill="#0c62a6" font-weight="700" text-anchor="start" dominant-baseline="central" transform="rotate(0.06 596.98 196.1)" >℃</text>
<rect x="586.18" y="201.9" width="6.8" height="1.9" fill="#8db2c8" />
<rect x="592.98" y="201.9" width="2.2" height="1.9" fill="#f6d23a" />
<rect x="595.18" y="201.9" width="9.6" height="1.9" fill="#f08a30" />
<text x="640.58" y="194.8" font-size="3.5" fill="#e6f6ff" font-weight="700" text-anchor="end" dominant-baseline="central" transform="rotate(0.06 640.58 194.8)" >0240#</text>
<text x="640.58" y="198.8" font-size="3.5" fill="#e6f6ff" font-weight="700" text-anchor="end" dominant-baseline="central" transform="rotate(0.06 640.58 198.8)" >08:54</text>
<rect x="631.98" y="202" width="6.2" height="1.5" fill="#d4ecf8" />
<rect x="643.24" y="184.4" width="58.1" height="21.7" fill="url(#gCard)" />
<text x="645.24" y="189" font-size="3.4" fill="#0e4c86" font-weight="500" text-anchor="start" dominant-baseline="central" transform="rotate(0.06 645.24 189)" >14#柜B相温度</text>
<text x="645.94" y="195.9" font-size="10.2" fill="#07192c" font-weight="700" textLength="10.2" lengthAdjust="spacingAndGlyphs" dominant-baseline="central" transform="rotate(0.06 645.94 195.9)" stroke="#07192c" stroke-width="0.25">21</text>
<text x="656.84" y="196.1" font-size="7.2" fill="#0c62a6" font-weight="700" text-anchor="start" dominant-baseline="central" transform="rotate(0.06 656.84 196.1)" >℃</text>
<rect x="646.04" y="201.9" width="6.8" height="1.9" fill="#8db2c8" />
<rect x="652.84" y="201.9" width="2.2" height="1.9" fill="#f6d23a" />
<rect x="655.04" y="201.9" width="9.6" height="1.9" fill="#f08a30" />
<text x="700.44" y="194.8" font-size="3.5" fill="#e6f6ff" font-weight="700" text-anchor="end" dominant-baseline="central" transform="rotate(0.06 700.44 194.8)" >0241#</text>
<text x="700.44" y="198.8" font-size="3.5" fill="#e6f6ff" font-weight="700" text-anchor="end" dominant-baseline="central" transform="rotate(0.06 700.44 198.8)" >08:54</text>
<rect x="691.84" y="202" width="6.2" height="1.5" fill="#d4ecf8" />
<rect x="703.1" y="184.4" width="58.1" height="21.7" fill="url(#gCard)" />
<text x="705.1" y="189" font-size="3.4" fill="#0e4c86" font-weight="500" text-anchor="start" dominant-baseline="central" transform="rotate(0.06 705.1 189)" >14#柜C相温度</text>
<text x="705.8" y="195.9" font-size="10.2" fill="#07192c" font-weight="700" textLength="10.2" lengthAdjust="spacingAndGlyphs" dominant-baseline="central" transform="rotate(0.06 705.8 195.9)" stroke="#07192c" stroke-width="0.25">20</text>
<text x="716.7" y="196.1" font-size="7.2" fill="#0c62a6" font-weight="700" text-anchor="start" dominant-baseline="central" transform="rotate(0.06 716.7 196.1)" >℃</text>
<rect x="705.9" y="201.9" width="6.8" height="1.9" fill="#8db2c8" />
<rect x="712.7" y="201.9" width="2.2" height="1.9" fill="#f6d23a" />
<rect x="714.9" y="201.9" width="9.6" height="1.9" fill="#f08a30" />
<text x="760.3" y="194.8" font-size="3.5" fill="#e6f6ff" font-weight="700" text-anchor="end" dominant-baseline="central" transform="rotate(0.06 760.3 194.8)" >0242#</text>
<text x="760.3" y="198.8" font-size="3.5" fill="#e6f6ff" font-weight="700" text-anchor="end" dominant-baseline="central" transform="rotate(0.06 760.3 198.8)" >08:52</text>
<rect x="751.7" y="202" width="6.2" height="1.5" fill="#d4ecf8" />
<rect x="403.8" y="207.7" width="58.1" height="21.7" fill="url(#gCard)" />
<text x="405.8" y="212.3" font-size="3.4" fill="#0e4c86" font-weight="500" text-anchor="start" dominant-baseline="central" transform="rotate(0.06 405.8 212.3)" >15#柜A相温度</text>
<text x="406.5" y="219.2" font-size="10.2" fill="#07192c" font-weight="700" textLength="10.2" lengthAdjust="spacingAndGlyphs" dominant-baseline="central" transform="rotate(0.06 406.5 219.2)" stroke="#07192c" stroke-width="0.25">19</text>
<text x="417.4" y="219.4" font-size="7.2" fill="#0c62a6" font-weight="700" text-anchor="start" dominant-baseline="central" transform="rotate(0.06 417.4 219.4)" >℃</text>
<rect x="406.6" y="225.2" width="6.8" height="1.9" fill="#8db2c8" />
<rect x="413.4" y="225.2" width="2.2" height="1.9" fill="#f6d23a" />
<rect x="415.6" y="225.2" width="9.6" height="1.9" fill="#f08a30" />
<text x="461" y="218.1" font-size="3.5" fill="#e6f6ff" font-weight="700" text-anchor="end" dominant-baseline="central" transform="rotate(0.06 461 218.1)" >0243#</text>
<text x="461" y="222.1" font-size="3.5" fill="#e6f6ff" font-weight="700" text-anchor="end" dominant-baseline="central" transform="rotate(0.06 461 222.1)" >08:54</text>
<rect x="452.4" y="225.3" width="6.2" height="1.5" fill="#d4ecf8" />
<rect x="463.66" y="207.7" width="58.1" height="21.7" fill="url(#gCard)" />
<text x="465.66" y="212.3" font-size="3.4" fill="#0e4c86" font-weight="500" text-anchor="start" dominant-baseline="central" transform="rotate(0.06 465.66 212.3)" >15#柜B相温度</text>
<text x="466.36" y="219.2" font-size="10.2" fill="#07192c" font-weight="700" textLength="10.2" lengthAdjust="spacingAndGlyphs" dominant-baseline="central" transform="rotate(0.06 466.36 219.2)" stroke="#07192c" stroke-width="0.25">19</text>
<text x="477.26" y="219.4" font-size="7.2" fill="#0c62a6" font-weight="700" text-anchor="start" dominant-baseline="central" transform="rotate(0.06 477.26 219.4)" >℃</text>
<rect x="466.46" y="225.2" width="6.8" height="1.9" fill="#8db2c8" />
<rect x="473.26" y="225.2" width="2.2" height="1.9" fill="#f6d23a" />
<rect x="475.46" y="225.2" width="9.6" height="1.9" fill="#f08a30" />
<text x="520.86" y="218.1" font-size="3.5" fill="#e6f6ff" font-weight="700" text-anchor="end" dominant-baseline="central" transform="rotate(0.06 520.86 218.1)" >0244#</text>
<text x="520.86" y="222.1" font-size="3.5" fill="#e6f6ff" font-weight="700" text-anchor="end" dominant-baseline="central" transform="rotate(0.06 520.86 222.1)" >08:36</text>
<rect x="512.26" y="225.3" width="6.2" height="1.5" fill="#d4ecf8" />
<rect x="523.52" y="207.7" width="58.1" height="21.7" fill="url(#gCard)" />
<text x="525.52" y="212.3" font-size="3.4" fill="#0e4c86" font-weight="500" text-anchor="start" dominant-baseline="central" transform="rotate(0.06 525.52 212.3)" >15#柜C相温度</text>
<text x="526.22" y="219.2" font-size="10.2" fill="#07192c" font-weight="700" textLength="10.2" lengthAdjust="spacingAndGlyphs" dominant-baseline="central" transform="rotate(0.06 526.22 219.2)" stroke="#07192c" stroke-width="0.25">20</text>
<text x="537.12" y="219.4" font-size="7.2" fill="#0c62a6" font-weight="700" text-anchor="start" dominant-baseline="central" transform="rotate(0.06 537.12 219.4)" >℃</text>
<rect x="526.32" y="225.2" width="6.8" height="1.9" fill="#8db2c8" />
<rect x="533.12" y="225.2" width="2.2" height="1.9" fill="#f6d23a" />
<rect x="535.32" y="225.2" width="9.6" height="1.9" fill="#f08a30" />
<text x="580.72" y="218.1" font-size="3.5" fill="#e6f6ff" font-weight="700" text-anchor="end" dominant-baseline="central" transform="rotate(0.06 580.72 218.1)" >0245#</text>
<text x="580.72" y="222.1" font-size="3.5" fill="#e6f6ff" font-weight="700" text-anchor="end" dominant-baseline="central" transform="rotate(0.06 580.72 222.1)" >08:52</text>
<rect x="572.12" y="225.3" width="6.2" height="1.5" fill="#d4ecf8" />
<rect x="583.38" y="207.7" width="58.1" height="21.7" fill="url(#gCard)" />
<text x="585.38" y="212.3" font-size="3.4" fill="#0e4c86" font-weight="500" text-anchor="start" dominant-baseline="central" transform="rotate(0.06 585.38 212.3)" >16#柜A相温度</text>
<text x="586.08" y="219.2" font-size="10.2" fill="#07192c" font-weight="700" textLength="10.2" lengthAdjust="spacingAndGlyphs" dominant-baseline="central" transform="rotate(0.06 586.08 219.2)" stroke="#07192c" stroke-width="0.25">20</text>
<text x="596.98" y="219.4" font-size="7.2" fill="#0c62a6" font-weight="700" text-anchor="start" dominant-baseline="central" transform="rotate(0.06 596.98 219.4)" >℃</text>
<rect x="586.18" y="225.2" width="6.8" height="1.9" fill="#8db2c8" />
<rect x="592.98" y="225.2" width="2.2" height="1.9" fill="#f6d23a" />
<rect x="595.18" y="225.2" width="9.6" height="1.9" fill="#f08a30" />
<text x="640.58" y="218.1" font-size="3.5" fill="#e6f6ff" font-weight="700" text-anchor="end" dominant-baseline="central" transform="rotate(0.06 640.58 218.1)" >0246#</text>
<text x="640.58" y="222.1" font-size="3.5" fill="#e6f6ff" font-weight="700" text-anchor="end" dominant-baseline="central" transform="rotate(0.06 640.58 222.1)" >08:31</text>
<rect x="631.98" y="225.3" width="6.2" height="1.5" fill="#d4ecf8" />
<rect x="643.24" y="207.7" width="58.1" height="21.7" fill="url(#gCard)" />
<text x="645.24" y="212.3" font-size="3.4" fill="#0e4c86" font-weight="500" text-anchor="start" dominant-baseline="central" transform="rotate(0.06 645.24 212.3)" >16#柜B相温度</text>
<text x="645.94" y="219.2" font-size="10.2" fill="#07192c" font-weight="700" textLength="10.2" lengthAdjust="spacingAndGlyphs" dominant-baseline="central" transform="rotate(0.06 645.94 219.2)" stroke="#07192c" stroke-width="0.25">21</text>
<text x="656.84" y="219.4" font-size="7.2" fill="#0c62a6" font-weight="700" text-anchor="start" dominant-baseline="central" transform="rotate(0.06 656.84 219.4)" >℃</text>
<rect x="646.04" y="225.2" width="6.8" height="1.9" fill="#8db2c8" />
<rect x="652.84" y="225.2" width="2.2" height="1.9" fill="#f6d23a" />
<rect x="655.04" y="225.2" width="9.6" height="1.9" fill="#f08a30" />
<text x="700.44" y="218.1" font-size="3.5" fill="#e6f6ff" font-weight="700" text-anchor="end" dominant-baseline="central" transform="rotate(0.06 700.44 218.1)" >0247#</text>
<text x="700.44" y="222.1" font-size="3.5" fill="#e6f6ff" font-weight="700" text-anchor="end" dominant-baseline="central" transform="rotate(0.06 700.44 222.1)" >08:51</text>
<rect x="691.84" y="225.3" width="6.2" height="1.5" fill="#d4ecf8" />
<rect x="703.1" y="207.7" width="58.1" height="21.7" fill="url(#gCard)" />
<text x="705.1" y="212.3" font-size="3.4" fill="#0e4c86" font-weight="500" text-anchor="start" dominant-baseline="central" transform="rotate(0.06 705.1 212.3)" >16#柜C相温度</text>
<text x="705.8" y="219.2" font-size="10.2" fill="#07192c" font-weight="700" textLength="10.2" lengthAdjust="spacingAndGlyphs" dominant-baseline="central" transform="rotate(0.06 705.8 219.2)" stroke="#07192c" stroke-width="0.25">21</text>
<text x="716.7" y="219.4" font-size="7.2" fill="#0c62a6" font-weight="700" text-anchor="start" dominant-baseline="central" transform="rotate(0.06 716.7 219.4)" >℃</text>
<rect x="705.9" y="225.2" width="6.8" height="1.9" fill="#8db2c8" />
<rect x="712.7" y="225.2" width="2.2" height="1.9" fill="#f6d23a" />
<rect x="714.9" y="225.2" width="9.6" height="1.9" fill="#f08a30" />
<text x="760.3" y="218.1" font-size="3.5" fill="#e6f6ff" font-weight="700" text-anchor="end" dominant-baseline="central" transform="rotate(0.06 760.3 218.1)" >0248#</text>
<text x="760.3" y="222.1" font-size="3.5" fill="#e6f6ff" font-weight="700" text-anchor="end" dominant-baseline="central" transform="rotate(0.06 760.3 222.1)" >08:33</text>
<rect x="751.7" y="225.3" width="6.2" height="1.5" fill="#d4ecf8" />
</svg>
<svg class="panel" style="left:13px;top:274px" width="367" height="228" viewBox="13 274 367 228" font-family='"Liberation Sans","Noto Sans CJK SC",sans-serif'>
<rect x="13" y="274.3" width="366.3" height="227.5" fill="#262626" />
<rect x="13" y="274.3" width="366.3" height="18.5" fill="url(#gTool)" />
<rect x="13" y="274.3" width="366.3" height="0.6" fill="#8e8e8e" />
<rect x="18.8" y="276" width="10.2" height="2.5" fill="url(#gOrangeBar)" rx="0.6"/><rect x="18.8" y="278" width="10.2" height="8" fill="url(#gIconBlue)" rx="1"/><rect x="21.35" y="283" width="5.1" height="0.9" fill="#d8f2ff" opacity="0.85"/>
<text x="23.9" y="289.3" font-size="3.4" fill="#2a2a2a" font-weight="700" text-anchor="middle" dominant-baseline="central" transform="rotate(0.06 23.9 289.3)" >概要图</text>
<rect x="36.5" y="276" width="10.2" height="2.5" fill="url(#gOrangeBar)" rx="0.6"/><rect x="36.5" y="278" width="10.2" height="8" fill="url(#gIconBlue)" rx="1"/><rect x="41.6" y="281" width="3.06" height="2.2" fill="#d8f2ff" opacity="0.7"/><rect x="38.54" y="282.1" width="2.55" height="0.8" fill="#d8f2ff" opacity="0.6"/>
<text x="41.6" y="289.3" font-size="3.4" fill="#2a2a2a" font-weight="700" text-anchor="middle" dominant-baseline="central" transform="rotate(0.06 41.6 289.3)" >详细图</text>
<rect x="54" y="276" width="10.2" height="2.5" fill="url(#gOrangeBar)" rx="0.6"/><rect x="54" y="278" width="10.2" height="8" fill="url(#gIconBlue)" rx="1"/><polyline points="56.04,283.2 58.08,281.2 60.12,282.4 62.36,280.8" fill="none" stroke="#e0f6ff" stroke-width="0.8" opacity="0.85"/>
<text x="59.1" y="289.3" font-size="3.4" fill="#2a2a2a" font-weight="700" text-anchor="middle" dominant-baseline="central" transform="rotate(0.06 59.1 289.3)" >曲线图</text>
<rect x="78.78" y="276.3" width="5.92" height="5.7" fill="#1a7cc4" rx="0.5"/><rect x="74.5" y="278.14" width="6.32" height="5.06" fill="url(#gIconBlue)" rx="0.6"/><rect x="75.01" y="283.48" width="9.18" height="1.84" fill="#8a97a3" rx="0.4"/><rect x="80.11" y="282" width="4.08" height="1.47" fill="#5f7486" />
<text x="79.6" y="289.3" font-size="3.4" fill="#2a2a2a" font-weight="700" text-anchor="middle" dominant-baseline="central" transform="rotate(0.06 79.6 289.3)" >操作设备</text>
<line x1="89.6" y1="276.3" x2="89.6" y2="291.3" stroke="#d6d6d6" stroke-width="0.5" />
<polygon points="94.2,281.3 98.82,277.8 98.82,279.34 105.2,279.34 105.2,283.26 98.82,283.26 98.82,284.8" fill="url(#gArrow)" stroke="#2a9ad8" stroke-width="0.4" stroke-linejoin="round"/>
<text x="99.7" y="289.3" font-size="3.4" fill="#2a2a2a" font-weight="700" text-anchor="middle" dominant-baseline="central" transform="rotate(0.06 99.7 289.3)" >前一页</text>
<polygon points="122.4,281.3 117.78,277.8 117.78,279.34 111.4,279.34 111.4,283.26 117.78,283.26 117.78,284.8" fill="url(#gArrow)" stroke="#2a9ad8" stroke-width="0.4" stroke-linejoin="round"/>
<text x="116.9" y="289.3" font-size="3.4" fill="#2a2a2a" font-weight="700" text-anchor="middle" dominant-baseline="central" transform="rotate(0.06 116.9 289.3)" >后一页</text>
<rect x="312.28" y="276.2" width="5.93" height="4.9" fill="url(#gBlueBtn)" rx="1"/><rect x="308.8" y="281.3" width="6.45" height="4.7" fill="url(#gOrangeBtn)" rx="1.2"/><rect x="315.51" y="281.1" width="6.19" height="4.9" fill="url(#gYellowBtn)" rx="1.2"/><rect x="327" y="276.2" width="12.1" height="9.8" fill="url(#gBlueBtn)" rx="1.3"/><rect x="345.2" y="276.2" width="12.2" height="9.8" fill="url(#gOrangeBtn)" rx="1.3"/><rect x="363" y="276.2" width="12.6" height="9.8" fill="url(#gYellowBtn)" rx="1.3"/><text x="315.25" y="289.4" font-size="3.3" fill="#1c1c1c" font-weight="700" text-anchor="middle" dominant-baseline="central" transform="rotate(0.06 315.25 289.4)" >所有</text><text x="333.05" y="289.4" font-size="3.3" fill="#1c1c1c" font-weight="700" text-anchor="middle" dominant-baseline="central" transform="rotate(0.06 333.05 289.4)" >正常</text><text x="351.3" y="289.4" font-size="3.3" fill="#1c1c1c" font-weight="700" text-anchor="middle" dominant-baseline="central" transform="rotate(0.06 351.3 289.4)" >超温</text><text x="369.3" y="289.4" font-size="3.3" fill="#1c1c1c" font-weight="700" text-anchor="middle" dominant-baseline="central" transform="rotate(0.06 369.3 289.4)" >故障</text>
<rect x="13" y="292.8" width="366.3" height="7.3" fill="url(#gInfo)" />
<text x="19.4" y="296.7" font-size="3.9" fill="#1e1e1e" font-weight="700" textLength="77.2" lengthAdjust="spacingAndGlyphs" dominant-baseline="central" transform="rotate(0.06 19.4 296.7)" >当前视图: 测温节点曲线图&#160;&#160;第10页 | 共56页</text>
<rect x="373.5" y="300" width="5.6" height="201.8" fill="#505050" />
<rect x="373.7" y="300.4" width="5.2" height="4.6" fill="#ececec" />
<polygon points="374.8,303.8 377.8,303.8 376.3,301.4" fill="#111"/>
<rect x="373.7" y="496.8" width="5.2" height="4.6" fill="#ececec" />
<polygon points="374.8,498 377.8,498 376.3,500.4" fill="#111"/>
<rect x="373.7" y="379" width="5.2" height="4.6" fill="#b8b8b8" />
<rect x="13" y="300" width="1.2" height="201.8" fill="#0c0c0c" />
<rect x="13" y="499.2" width="360" height="2.6" fill="#0c0c0c" />
<rect x="15.7" y="303.8" width="57.2" height="63.9" fill="url(#gChartCard)" />
<text x="27.7" y="309.7" font-size="3.8" fill="#0a3cf0" font-weight="500" textLength="31.6" lengthAdjust="spacingAndGlyphs" dominant-baseline="central" transform="rotate(0.06 27.7 309.7)" >35kV 10柜C相温度</text>
<rect x="26.3" y="314.3" width="42.5" height="44" fill="url(#gPlot)" />
<path d="M33.38 314.3V358.3M40.47 314.3V358.3M47.55 314.3V358.3M54.63 314.3V358.3M61.72 314.3V358.3M26.3 318.7H68.8M26.3 323.1H68.8M26.3 327.5H68.8M26.3 331.9H68.8M26.3 336.3H68.8M26.3 340.7H68.8M26.3 345.1H68.8M26.3 349.5H68.8M26.3 353.9H68.8" stroke="#5f9cc2" stroke-width="0.35" opacity="0.4" fill="none"/>
<polyline points="26.3,349.28 68.8,349.28" fill="none" stroke="#cc7484" stroke-width="0.6"/>
<rect x="26.3" y="314.3" width="42.5" height="44" fill="none" stroke="#1c3442" stroke-width="0.8"/>
<text x="24.7" y="314.3" font-size="3.2" fill="#0e2f58" font-weight="700" text-anchor="end" dominant-baseline="central" transform="rotate(0.06 24.7 314.3)" stroke="#0e2f58" stroke-width="0.12">100</text>
<line x1="25.3" y1="314.3" x2="26.3" y2="314.3" stroke="#1c3442" stroke-width="0.4" />
<text x="24.7" y="323.1" font-size="3.2" fill="#0e2f58" font-weight="700" text-anchor="end" dominant-baseline="central" transform="rotate(0.06 24.7 323.1)" stroke="#0e2f58" stroke-width="0.12">80</text>
<line x1="25.3" y1="323.1" x2="26.3" y2="323.1" stroke="#1c3442" stroke-width="0.4" />
<text x="24.7" y="331.9" font-size="3.2" fill="#0e2f58" font-weight="700" text-anchor="end" dominant-baseline="central" transform="rotate(0.06 24.7 331.9)" stroke="#0e2f58" stroke-width="0.12">60</text>
<line x1="25.3" y1="331.9" x2="26.3" y2="331.9" stroke="#1c3442" stroke-width="0.4" />
<text x="24.7" y="340.7" font-size="3.2" fill="#0e2f58" font-weight="700" text-anchor="end" dominant-baseline="central" transform="rotate(0.06 24.7 340.7)" stroke="#0e2f58" stroke-width="0.12">40</text>
<line x1="25.3" y1="340.7" x2="26.3" y2="340.7" stroke="#1c3442" stroke-width="0.4" />
<text x="24.7" y="349.5" font-size="3.2" fill="#0e2f58" font-weight="700" text-anchor="end" dominant-baseline="central" transform="rotate(0.06 24.7 349.5)" stroke="#0e2f58" stroke-width="0.12">20</text>
<line x1="25.3" y1="349.5" x2="26.3" y2="349.5" stroke="#1c3442" stroke-width="0.4" />
<text x="24.7" y="358.3" font-size="3.2" fill="#0e2f58" font-weight="700" text-anchor="end" dominant-baseline="central" transform="rotate(0.06 24.7 358.3)" stroke="#0e2f58" stroke-width="0.12">0</text>
<line x1="25.3" y1="358.3" x2="26.3" y2="358.3" stroke="#1c3442" stroke-width="0.4" />
<text x="22.1" y="362.9" font-size="3.1" fill="#27323c" font-weight="700" textLength="45.9" lengthAdjust="spacingAndGlyphs" dominant-baseline="central" transform="rotate(0.06 22.1 362.9)" >08:09 07:16 05:18 03:22 01:28</text>
<rect x="74.26" y="303.8" width="57.2" height="63.9" fill="url(#gChartCard)" />
<text x="86.26" y="309.7" font-size="3.8" fill="#0a3cf0" font-weight="500" textLength="31.6" lengthAdjust="spacingAndGlyphs" dominant-baseline="central" transform="rotate(0.06 86.26 309.7)" >35kV 10柜A相温度</text>
<rect x="84.86" y="314.3" width="42.5" height="44" fill="url(#gPlot)" />
<path d="M91.94 314.3V358.3M99.03 314.3V358.3M106.11 314.3V358.3M113.19 314.3V358.3M120.28 314.3V358.3M84.86 318.7H127.36M84.86 323.1H127.36M84.86 327.5H127.36M84.86 331.9H127.36M84.86 336.3H127.36M84.86 340.7H127.36M84.86 345.1H127.36M84.86 349.5H127.36M84.86 353.9H127.36" stroke="#5f9cc2" stroke-width="0.35" opacity="0.4" fill="none"/>
<polyline points="84.86,349.5 113.76,349.5 115.46,348.84 118.01,349.24 127.36,349.06" fill="none" stroke="#cc7484" stroke-width="0.6"/>
<rect x="84.86" y="314.3" width="42.5" height="44" fill="none" stroke="#1c3442" stroke-width="0.8"/>
<text x="83.26" y="314.3" font-size="3.2" fill="#0e2f58" font-weight="700" text-anchor="end" dominant-baseline="central" transform="rotate(0.06 83.26 314.3)" stroke="#0e2f58" stroke-width="0.12">100</text>
<line x1="83.86" y1="314.3" x2="84.86" y2="314.3" stroke="#1c3442" stroke-width="0.4" />
<text x="83.26" y="323.1" font-size="3.2" fill="#0e2f58" font-weight="700" text-anchor="end" dominant-baseline="central" transform="rotate(0.06 83.26 323.1)" stroke="#0e2f58" stroke-width="0.12">80</text>
<line x1="83.86" y1="323.1" x2="84.86" y2="323.1" stroke="#1c3442" stroke-width="0.4" />
<text x="83.26" y="331.9" font-size="3.2" fill="#0e2f58" font-weight="700" text-anchor="end" dominant-baseline="central" transform="rotate(0.06 83.26 331.9)" stroke="#0e2f58" stroke-width="0.12">60</text>
<line x1="83.86" y1="331.9" x2="84.86" y2="331.9" stroke="#1c3442" stroke-width="0.4" />
<text x="83.26" y="340.7" font-size="3.2" fill="#0e2f58" font-weight="700" text-anchor="end" dominant-baseline="central" transform="rotate(0.06 83.26 340.7)" stroke="#0e2f58" stroke-width="0.12">40</text>
<line x1="83.86" y1="340.7" x2="84.86" y2="340.7" stroke="#1c3442" stroke-width="0.4" />
<text x="83.26" y="349.5" font-size="3.2" fill="#0e2f58" font-weight="700" text-anchor="end" dominant-baseline="central" transform="rotate(0.06 83.26 349.5)" stroke="#0e2f58" stroke-width="0.12">20</text>
<line x1="83.86" y1="349.5" x2="84.86" y2="349.5" stroke="#1c3442" stroke-width="0.4" />
<text x="83.26" y="358.3" font-size="3.2" fill="#0e2f58" font-weight="700" text-anchor="end" dominant-baseline="central" transform="rotate(0.06 83.26 358.3)" stroke="#0e2f58" stroke-width="0.12">0</text>
<line x1="83.86" y1="358.3" x2="84.86" y2="358.3" stroke="#1c3442" stroke-width="0.4" />
<text x="80.66" y="362.9" font-size="3.1" fill="#27323c" font-weight="700" textLength="45.9" lengthAdjust="spacingAndGlyphs" dominant-baseline="central" transform="rotate(0.06 80.66 362.9)" >09:03 07:11 05:22 03:01 01:05</text>
<rect x="132.82" y="303.8" width="57.2" height="63.9" fill="url(#gChartCard)" />
<text x="144.82" y="309.7" font-size="3.8" fill="#0a3cf0" font-weight="500" textLength="31.6" lengthAdjust="spacingAndGlyphs" dominant-baseline="central" transform="rotate(0.06 144.82 309.7)" >35kV 10柜B相温度</text>
<rect x="143.42" y="314.3" width="42.5" height="44" fill="url(#gPlot)" />
<path d="M150.5 314.3V358.3M157.59 314.3V358.3M164.67 314.3V358.3M171.75 314.3V358.3M178.84 314.3V358.3M143.42 318.7H185.92M143.42 323.1H185.92M143.42 327.5H185.92M143.42 331.9H185.92M143.42 336.3H185.92M143.42 340.7H185.92M143.42 345.1H185.92M143.42 349.5H185.92M143.42 353.9H185.92" stroke="#5f9cc2" stroke-width="0.35" opacity="0.4" fill="none"/>
<polyline points="143.42,349.28 185.92,349.28" fill="none" stroke="#cc7484" stroke-width="0.6"/>
<rect x="143.42" y="314.3" width="42.5" height="44" fill="none" stroke="#1c3442" stroke-width="0.8"/>
<text x="141.82" y="314.3" font-size="3.2" fill="#0e2f58" font-weight="700" text-anchor="end" dominant-baseline="central" transform="rotate(0.06 141.82 314.3)" stroke="#0e2f58" stroke-width="0.12">100</text>
<line x1="142.42" y1="314.3" x2="143.42" y2="314.3" stroke="#1c3442" stroke-width="0.4" />
<text x="141.82" y="323.1" font-size="3.2" fill="#0e2f58" font-weight="700" text-anchor="end" dominant-baseline="central" transform="rotate(0.06 141.82 323.1)" stroke="#0e2f58" stroke-width="0.12">80</text>
<line x1="142.42" y1="323.1" x2="143.42" y2="323.1" stroke="#1c3442" stroke-width="0.4" />
<text x="141.82" y="331.9" font-size="3.2" fill="#0e2f58" font-weight="700" text-anchor="end" dominant-baseline="central" transform="rotate(0.06 141.82 331.9)" stroke="#0e2f58" stroke-width="0.12">60</text>
<line x1="142.42" y1="331.9" x2="143.42" y2="331.9" stroke="#1c3442" stroke-width="0.4" />
<text x="141.82" y="340.7" font-size="3.2" fill="#0e2f58" font-weight="700" text-anchor="end" dominant-baseline="central" transform="rotate(0.06 141.82 340.7)" stroke="#0e2f58" stroke-width="0.12">40</text>
<line x1="142.42" y1="340.7" x2="143.42" y2="340.7" stroke="#1c3442" stroke-width="0.4" />
<text x="141.82" y="349.5" font-size="3.2" fill="#0e2f58" font-weight="700" text-anchor="end" dominant-baseline="central" transform="rotate(0.06 141.82 349.5)" stroke="#0e2f58" stroke-width="0.12">20</text>
<line x1="142.42" y1="349.5" x2="143.42" y2="349.5" stroke="#1c3442" stroke-width="0.4" />
<text x="141.82" y="358.3" font-size="3.2" fill="#0e2f58" font-weight="700" text-anchor="end" dominant-baseline="central" transform="rotate(0.06 141.82 358.3)" stroke="#0e2f58" stroke-width="0.12">0</text>
<line x1="142.42" y1="358.3" x2="143.42" y2="358.3" stroke="#1c3442" stroke-width="0.4" />
<text x="139.22" y="362.9" font-size="3.1" fill="#27323c" font-weight="700" textLength="45.9" lengthAdjust="spacingAndGlyphs" dominant-baseline="central" transform="rotate(0.06 139.22 362.9)" >08:52 07:11 05:10 03:12 01:15</text>
<rect x="191.38" y="303.8" width="57.2" height="63.9" fill="url(#gChartCard)" />
<text x="203.38" y="309.7" font-size="3.8" fill="#0a3cf0" font-weight="500" textLength="31.6" lengthAdjust="spacingAndGlyphs" dominant-baseline="central" transform="rotate(0.06 203.38 309.7)" >35kV 11柜C相温度</text>
<rect x="201.98" y="314.3" width="42.5" height="44" fill="url(#gPlot)" />
<path d="M209.06 314.3V358.3M216.15 314.3V358.3M223.23 314.3V358.3M230.31 314.3V358.3M237.4 314.3V358.3M201.98 318.7H244.48M201.98 323.1H244.48M201.98 327.5H244.48M201.98 331.9H244.48M201.98 336.3H244.48M201.98 340.7H244.48M201.98 345.1H244.48M201.98 349.5H244.48M201.98 353.9H244.48" stroke="#5f9cc2" stroke-width="0.35" opacity="0.4" fill="none"/>
<polyline points="201.98,349.94 223.23,350.12 231.73,349.59 244.48,349.37" fill="none" stroke="#cc7484" stroke-width="0.6"/>
<rect x="201.98" y="314.3" width="42.5" height="44" fill="none" stroke="#1c3442" stroke-width="0.8"/>
<text x="200.38" y="314.3" font-size="3.2" fill="#0e2f58" font-weight="700" text-anchor="end" dominant-baseline="central" transform="rotate(0.06 200.38 314.3)" stroke="#0e2f58" stroke-width="0.12">100</text>
<line x1="200.98" y1="314.3" x2="201.98" y2="314.3" stroke="#1c3442" stroke-width="0.4" />
<text x="200.38" y="323.1" font-size="3.2" fill="#0e2f58" font-weight="700" text-anchor="end" dominant-baseline="central" transform="rotate(0.06 200.38 323.1)" stroke="#0e2f58" stroke-width="0.12">80</text>
<line x1="200.98" y1="323.1" x2="201.98" y2="323.1" stroke="#1c3442" stroke-width="0.4" />
<text x="200.38" y="331.9" font-size="3.2" fill="#0e2f58" font-weight="700" text-anchor="end" dominant-baseline="central" transform="rotate(0.06 200.38 331.9)" stroke="#0e2f58" stroke-width="0.12">60</text>
<line x1="200.98" y1="331.9" x2="201.98" y2="331.9" stroke="#1c3442" stroke-width="0.4" />
<text x="200.38" y="340.7" font-size="3.2" fill="#0e2f58" font-weight="700" text-anchor="end" dominant-baseline="central" transform="rotate(0.06 200.38 340.7)" stroke="#0e2f58" stroke-width="0.12">40</text>
<line x1="200.98" y1="340.7" x2="201.98" y2="340.7" stroke="#1c3442" stroke-width="0.4" />
<text x="200.38" y="349.5" font-size="3.2" fill="#0e2f58" font-weight="700" text-anchor="end" dominant-baseline="central" transform="rotate(0.06 200.38 349.5)" stroke="#0e2f58" stroke-width="0.12">20</text>
<line x1="200.98" y1="349.5" x2="201.98" y2="349.5" stroke="#1c3442" stroke-width="0.4" />
<text x="200.38" y="358.3" font-size="3.2" fill="#0e2f58" font-weight="700" text-anchor="end" dominant-baseline="central" transform="rotate(0.06 200.38 358.3)" stroke="#0e2f58" stroke-width="0.12">0</text>
<line x1="200.98" y1="358.3" x2="201.98" y2="358.3" stroke="#1c3442" stroke-width="0.4" />
<text x="197.78" y="362.9" font-size="3.1" fill="#27323c" font-weight="700" textLength="45.9" lengthAdjust="spacingAndGlyphs" dominant-baseline="central" transform="rotate(0.06 197.78 362.9)" >09:02 07:14 05:18 03:16 01:18</text>
<rect x="249.94" y="303.8" width="57.2" height="63.9" fill="url(#gChartCard)" />
<text x="261.94" y="309.7" font-size="3.8" fill="#0a3cf0" font-weight="500" textLength="31.6" lengthAdjust="spacingAndGlyphs" dominant-baseline="central" transform="rotate(0.06 261.94 309.7)" >35kV 11柜A相温度</text>
<rect x="260.54" y="314.3" width="42.5" height="44" fill="url(#gPlot)" />
<path d="M267.62 314.3V358.3M274.71 314.3V358.3M281.79 314.3V358.3M288.87 314.3V358.3M295.96 314.3V358.3M260.54 318.7H303.04M260.54 323.1H303.04M260.54 327.5H303.04M260.54 331.9H303.04M260.54 336.3H303.04M260.54 340.7H303.04M260.54 345.1H303.04M260.54 349.5H303.04M260.54 353.9H303.04" stroke="#5f9cc2" stroke-width="0.35" opacity="0.4" fill="none"/>
<polyline points="260.54,349.28 303.04,349.28" fill="none" stroke="#cc7484" stroke-width="0.6"/>
<rect x="260.54" y="314.3" width="42.5" height="44" fill="none" stroke="#1c3442" stroke-width="0.8"/>
<text x="258.94" y="314.3" font-size="3.2" fill="#0e2f58" font-weight="700" text-anchor="end" dominant-baseline="central" transform="rotate(0.06 258.94 314.3)" stroke="#0e2f58" stroke-width="0.12">100</text>
<line x1="259.54" y1="314.3" x2="260.54" y2="314.3" stroke="#1c3442" stroke-width="0.4" />
<text x="258.94" y="323.1" font-size="3.2" fill="#0e2f58" font-weight="700" text-anchor="end" dominant-baseline="central" transform="rotate(0.06 258.94 323.1)" stroke="#0e2f58" stroke-width="0.12">80</text>
<line x1="259.54" y1="323.1" x2="260.54" y2="323.1" stroke="#1c3442" stroke-width="0.4" />
<text x="258.94" y="331.9" font-size="3.2" fill="#0e2f58" font-weight="700" text-anchor="end" dominant-baseline="central" transform="rotate(0.06 258.94 331.9)" stroke="#0e2f58" stroke-width="0.12">60</text>
<line x1="259.54" y1="331.9" x2="260.54" y2="331.9" stroke="#1c3442" stroke-width="0.4" />
<text x="258.94" y="340.7" font-size="3.2" fill="#0e2f58" font-weight="700" text-anchor="end" dominant-baseline="central" transform="rotate(0.06 258.94 340.7)" stroke="#0e2f58" stroke-width="0.12">40</text>
<line x1="259.54" y1="340.7" x2="260.54" y2="340.7" stroke="#1c3442" stroke-width="0.4" />
<text x="258.94" y="349.5" font-size="3.2" fill="#0e2f58" font-weight="700" text-anchor="end" dominant-baseline="central" transform="rotate(0.06 258.94 349.5)" stroke="#0e2f58" stroke-width="0.12">20</text>
<line x1="259.54" y1="349.5" x2="260.54" y2="349.5" stroke="#1c3442" stroke-width="0.4" />
<text x="258.94" y="358.3" font-size="3.2" fill="#0e2f58" font-weight="700" text-anchor="end" dominant-baseline="central" transform="rotate(0.06 258.94 358.3)" stroke="#0e2f58" stroke-width="0.12">0</text>
<line x1="259.54" y1="358.3" x2="260.54" y2="358.3" stroke="#1c3442" stroke-width="0.4" />
<text x="256.34" y="362.9" font-size="3.1" fill="#27323c" font-weight="700" textLength="45.9" lengthAdjust="spacingAndGlyphs" dominant-baseline="central" transform="rotate(0.06 256.34 362.9)" >08:56 07:06 05:06 03:08 01:03</text>
<rect x="308.5" y="303.8" width="57.2" height="63.9" fill="url(#gChartCard)" />
<text x="320.5" y="309.7" font-size="3.8" fill="#0a3cf0" font-weight="500" textLength="31.6" lengthAdjust="spacingAndGlyphs" dominant-baseline="central" transform="rotate(0.06 320.5 309.7)" >35kV 11柜B相温度</text>
<rect x="319.1" y="314.3" width="42.5" height="44" fill="url(#gPlot)" />
<path d="M326.18 314.3V358.3M333.27 314.3V358.3M340.35 314.3V358.3M347.43 314.3V358.3M354.52 314.3V358.3M319.1 318.7H361.6M319.1 323.1H361.6M319.1 327.5H361.6M319.1 331.9H361.6M319.1 336.3H361.6M319.1 340.7H361.6M319.1 345.1H361.6M319.1 349.5H361.6M319.1 353.9H361.6" stroke="#5f9cc2" stroke-width="0.35" opacity="0.4" fill="none"/>
<polyline points="319.1,350.16 327.6,349.94 330.58,350.56 333.98,349.5 344.6,349.24 361.6,349.24" fill="none" stroke="#cc7484" stroke-width="0.6"/>
<rect x="319.1" y="314.3" width="42.5" height="44" fill="none" stroke="#1c3442" stroke-width="0.8"/>
<text x="317.5" y="314.3" font-size="3.2" fill="#0e2f58" font-weight="700" text-anchor="end" dominant-baseline="central" transform="rotate(0.06 317.5 314.3)" stroke="#0e2f58" stroke-width="0.12">100</text>
<line x1="318.1" y1="314.3" x2="319.1" y2="314.3" stroke="#1c3442" stroke-width="0.4" />
<text x="317.5" y="323.1" font-size="3.2" fill="#0e2f58" font-weight="700" text-anchor="end" dominant-baseline="central" transform="rotate(0.06 317.5 323.1)" stroke="#0e2f58" stroke-width="0.12">80</text>
<line x1="318.1" y1="323.1" x2="319.1" y2="323.1" stroke="#1c3442" stroke-width="0.4" />
<text x="317.5" y="331.9" font-size="3.2" fill="#0e2f58" font-weight="700" text-anchor="end" dominant-baseline="central" transform="rotate(0.06 317.5 331.9)" stroke="#0e2f58" stroke-width="0.12">60</text>
<line x1="318.1" y1="331.9" x2="319.1" y2="331.9" stroke="#1c3442" stroke-width="0.4" />
<text x="317.5" y="340.7" font-size="3.2" fill="#0e2f58" font-weight="700" text-anchor="end" dominant-baseline="central" transform="rotate(0.06 317.5 340.7)" stroke="#0e2f58" stroke-width="0.12">40</text>
<line x1="318.1" y1="340.7" x2="319.1" y2="340.7" stroke="#1c3442" stroke-width="0.4" />
<text x="317.5" y="349.5" font-size="3.2" fill="#0e2f58" font-weight="700" text-anchor="end" dominant-baseline="central" transform="rotate(0.06 317.5 349.5)" stroke="#0e2f58" stroke-width="0.12">20</text>
<line x1="318.1" y1="349.5" x2="319.1" y2="349.5" stroke="#1c3442" stroke-width="0.4" />
<text x="317.5" y="358.3" font-size="3.2" fill="#0e2f58" font-weight="700" text-anchor="end" dominant-baseline="central" transform="rotate(0.06 317.5 358.3)" stroke="#0e2f58" stroke-width="0.12">0</text>
<line x1="318.1" y1="358.3" x2="319.1" y2="358.3" stroke="#1c3442" stroke-width="0.4" />
<text x="314.9" y="362.9" font-size="3.1" fill="#27323c" font-weight="700" textLength="45.9" lengthAdjust="spacingAndGlyphs" dominant-baseline="central" transform="rotate(0.06 314.9 362.9)" >09:01 07:10 05:18 03:28 01:21</text>
<rect x="15.7" y="369.2" width="57.2" height="63.9" fill="url(#gChartCard)" />
<text x="27.7" y="375.1" font-size="3.8" fill="#0a3cf0" font-weight="500" textLength="31.6" lengthAdjust="spacingAndGlyphs" dominant-baseline="central" transform="rotate(0.06 27.7 375.1)" >35kV 12柜C相温度</text>
<rect x="26.3" y="379.7" width="42.5" height="44" fill="url(#gPlot)" />
<path d="M33.38 379.7V423.7M40.47 379.7V423.7M47.55 379.7V423.7M54.63 379.7V423.7M61.72 379.7V423.7M26.3 384.1H68.8M26.3 388.5H68.8M26.3 392.9H68.8M26.3 397.3H68.8M26.3 401.7H68.8M26.3 406.1H68.8M26.3 410.5H68.8M26.3 414.9H68.8M26.3 419.3H68.8" stroke="#5f9cc2" stroke-width="0.35" opacity="0.4" fill="none"/>
<polyline points="26.3,414.68 68.8,414.68" fill="none" stroke="#cc7484" stroke-width="0.6"/>
<rect x="26.3" y="379.7" width="42.5" height="44" fill="none" stroke="#1c3442" stroke-width="0.8"/>
<text x="24.7" y="379.7" font-size="3.2" fill="#0e2f58" font-weight="700" text-anchor="end" dominant-baseline="central" transform="rotate(0.06 24.7 379.7)" stroke="#0e2f58" stroke-width="0.12">100</text>
<line x1="25.3" y1="379.7" x2="26.3" y2="379.7" stroke="#1c3442" stroke-width="0.4" />
<text x="24.7" y="388.5" font-size="3.2" fill="#0e2f58" font-weight="700" text-anchor="end" dominant-baseline="central" transform="rotate(0.06 24.7 388.5)" stroke="#0e2f58" stroke-width="0.12">80</text>
<line x1="25.3" y1="388.5" x2="26.3" y2="388.5" stroke="#1c3442" stroke-width="0.4" />
<text x="24.7" y="397.3" font-size="3.2" fill="#0e2f58" font-weight="700" text-anchor="end" dominant-baseline="central" transform="rotate(0.06 24.7 397.3)" stroke="#0e2f58" stroke-width="0.12">60</text>
<line x1="25.3" y1="397.3" x2="26.3" y2="397.3" stroke="#1c3442" stroke-width="0.4" />
<text x="24.7" y="406.1" font-size="3.2" fill="#0e2f58" font-weight="700" text-anchor="end" dominant-baseline="central" transform="rotate(0.06 24.7 406.1)" stroke="#0e2f58" stroke-width="0.12">40</text>
<line x1="25.3" y1="406.1" x2="26.3" y2="406.1" stroke="#1c3442" stroke-width="0.4" />
<text x="24.7" y="414.9" font-size="3.2" fill="#0e2f58" font-weight="700" text-anchor="end" dominant-baseline="central" transform="rotate(0.06 24.7 414.9)" stroke="#0e2f58" stroke-width="0.12">20</text>
<line x1="25.3" y1="414.9" x2="26.3" y2="414.9" stroke="#1c3442" stroke-width="0.4" />
<text x="24.7" y="423.7" font-size="3.2" fill="#0e2f58" font-weight="700" text-anchor="end" dominant-baseline="central" transform="rotate(0.06 24.7 423.7)" stroke="#0e2f58" stroke-width="0.12">0</text>
<line x1="25.3" y1="423.7" x2="26.3" y2="423.7" stroke="#1c3442" stroke-width="0.4" />
<text x="22.1" y="428.3" font-size="3.1" fill="#27323c" font-weight="700" textLength="45.9" lengthAdjust="spacingAndGlyphs" dominant-baseline="central" transform="rotate(0.06 22.1 428.3)" >08:06 07:12 05:13 03:15 01:15</text>
<rect x="74.26" y="369.2" width="57.2" height="63.9" fill="url(#gChartCard)" />
<text x="86.26" y="375.1" font-size="3.8" fill="#0a3cf0" font-weight="500" textLength="31.6" lengthAdjust="spacingAndGlyphs" dominant-baseline="central" transform="rotate(0.06 86.26 375.1)" >35kV 12柜A相温度</text>
<rect x="84.86" y="379.7" width="42.5" height="44" fill="url(#gPlot)" />
<path d="M91.94 379.7V423.7M99.03 379.7V423.7M106.11 379.7V423.7M113.19 379.7V423.7M120.28 379.7V423.7M84.86 384.1H127.36M84.86 388.5H127.36M84.86 392.9H127.36M84.86 397.3H127.36M84.86 401.7H127.36M84.86 406.1H127.36M84.86 410.5H127.36M84.86 414.9H127.36M84.86 419.3H127.36" stroke="#5f9cc2" stroke-width="0.35" opacity="0.4" fill="none"/>
<polyline points="84.86,414.68 127.36,414.68" fill="none" stroke="#cc7484" stroke-width="0.6"/>
<rect x="84.86" y="379.7" width="42.5" height="44" fill="none" stroke="#1c3442" stroke-width="0.8"/>
<text x="83.26" y="379.7" font-size="3.2" fill="#0e2f58" font-weight="700" text-anchor="end" dominant-baseline="central" transform="rotate(0.06 83.26 379.7)" stroke="#0e2f58" stroke-width="0.12">100</text>
<line x1="83.86" y1="379.7" x2="84.86" y2="379.7" stroke="#1c3442" stroke-width="0.4" />
<text x="83.26" y="388.5" font-size="3.2" fill="#0e2f58" font-weight="700" text-anchor="end" dominant-baseline="central" transform="rotate(0.06 83.26 388.5)" stroke="#0e2f58" stroke-width="0.12">80</text>
<line x1="83.86" y1="388.5" x2="84.86" y2="388.5" stroke="#1c3442" stroke-width="0.4" />
<text x="83.26" y="397.3" font-size="3.2" fill="#0e2f58" font-weight="700" text-anchor="end" dominant-baseline="central" transform="rotate(0.06 83.26 397.3)" stroke="#0e2f58" stroke-width="0.12">60</text>
<line x1="83.86" y1="397.3" x2="84.86" y2="397.3" stroke="#1c3442" stroke-width="0.4" />
<text x="83.26" y="406.1" font-size="3.2" fill="#0e2f58" font-weight="700" text-anchor="end" dominant-baseline="central" transform="rotate(0.06 83.26 406.1)" stroke="#0e2f58" stroke-width="0.12">40</text>
<line x1="83.86" y1="406.1" x2="84.86" y2="406.1" stroke="#1c3442" stroke-width="0.4" />
<text x="83.26" y="414.9" font-size="3.2" fill="#0e2f58" font-weight="700" text-anchor="end" dominant-baseline="central" transform="rotate(0.06 83.26 414.9)" stroke="#0e2f58" stroke-width="0.12">20</text>
<line x1="83.86" y1="414.9" x2="84.86" y2="414.9" stroke="#1c3442" stroke-width="0.4" />
<text x="83.26" y="423.7" font-size="3.2" fill="#0e2f58" font-weight="700" text-anchor="end" dominant-baseline="central" transform="rotate(0.06 83.26 423.7)" stroke="#0e2f58" stroke-width="0.12">0</text>
<line x1="83.86" y1="423.7" x2="84.86" y2="423.7" stroke="#1c3442" stroke-width="0.4" />
<text x="80.66" y="428.3" font-size="3.1" fill="#27323c" font-weight="700" textLength="45.9" lengthAdjust="spacingAndGlyphs" dominant-baseline="central" transform="rotate(0.06 80.66 428.3)" >09:01 07:08 05:08 03:08 01:06</text>
<rect x="132.82" y="369.2" width="57.2" height="63.9" fill="url(#gChartCard)" />
<text x="144.82" y="375.1" font-size="3.8" fill="#0a3cf0" font-weight="500" textLength="31.6" lengthAdjust="spacingAndGlyphs" dominant-baseline="central" transform="rotate(0.06 144.82 375.1)" >35kV 12柜B相温度</text>
<rect x="143.42" y="379.7" width="42.5" height="44" fill="url(#gPlot)" />
<path d="M150.5 379.7V423.7M157.59 379.7V423.7M164.67 379.7V423.7M171.75 379.7V423.7M178.84 379.7V423.7M143.42 384.1H185.92M143.42 388.5H185.92M143.42 392.9H185.92M143.42 397.3H185.92M143.42 401.7H185.92M143.42 406.1H185.92M143.42 410.5H185.92M143.42 414.9H185.92M143.42 419.3H185.92" stroke="#5f9cc2" stroke-width="0.35" opacity="0.4" fill="none"/>
<polyline points="143.42,414.68 185.92,414.68" fill="none" stroke="#cc7484" stroke-width="0.6"/>
<rect x="143.42" y="379.7" width="42.5" height="44" fill="none" stroke="#1c3442" stroke-width="0.8"/>
<text x="141.82" y="379.7" font-size="3.2" fill="#0e2f58" font-weight="700" text-anchor="end" dominant-baseline="central" transform="rotate(0.06 141.82 379.7)" stroke="#0e2f58" stroke-width="0.12">100</text>
<line x1="142.42" y1="379.7" x2="143.42" y2="379.7" stroke="#1c3442" stroke-width="0.4" />
<text x="141.82" y="388.5" font-size="3.2" fill="#0e2f58" font-weight="700" text-anchor="end" dominant-baseline="central" transform="rotate(0.06 141.82 388.5)" stroke="#0e2f58" stroke-width="0.12">80</text>
<line x1="142.42" y1="388.5" x2="143.42" y2="388.5" stroke="#1c3442" stroke-width="0.4" />
<text x="141.82" y="397.3" font-size="3.2" fill="#0e2f58" font-weight="700" text-anchor="end" dominant-baseline="central" transform="rotate(0.06 141.82 397.3)" stroke="#0e2f58" stroke-width="0.12">60</text>
<line x1="142.42" y1="397.3" x2="143.42" y2="397.3" stroke="#1c3442" stroke-width="0.4" />
<text x="141.82" y="406.1" font-size="3.2" fill="#0e2f58" font-weight="700" text-anchor="end" dominant-baseline="central" transform="rotate(0.06 141.82 406.1)" stroke="#0e2f58" stroke-width="0.12">40</text>
<line x1="142.42" y1="406.1" x2="143.42" y2="406.1" stroke="#1c3442" stroke-width="0.4" />
<text x="141.82" y="414.9" font-size="3.2" fill="#0e2f58" font-weight="700" text-anchor="end" dominant-baseline="central" transform="rotate(0.06 141.82 414.9)" stroke="#0e2f58" stroke-width="0.12">20</text>
<line x1="142.42" y1="414.9" x2="143.42" y2="414.9" stroke="#1c3442" stroke-width="0.4" />
<text x="141.82" y="423.7" font-size="3.2" fill="#0e2f58" font-weight="700" text-anchor="end" dominant-baseline="central" transform="rotate(0.06 141.82 423.7)" stroke="#0e2f58" stroke-width="0.12">0</text>
<line x1="142.42" y1="423.7" x2="143.42" y2="423.7" stroke="#1c3442" stroke-width="0.4" />
<text x="139.22" y="428.3" font-size="3.1" fill="#27323c" font-weight="700" textLength="45.9" lengthAdjust="spacingAndGlyphs" dominant-baseline="central" transform="rotate(0.06 139.22 428.3)" >09:01 06:04 04:01 02:50 00:06</text>
<rect x="191.38" y="369.2" width="57.2" height="63.9" fill="url(#gChartCard)" />
<text x="203.38" y="375.1" font-size="3.8" fill="#0a3cf0" font-weight="500" textLength="31.6" lengthAdjust="spacingAndGlyphs" dominant-baseline="central" transform="rotate(0.06 203.38 375.1)" >35kV 13柜C相温度</text>
<rect x="201.98" y="379.7" width="42.5" height="44" fill="url(#gPlot)" />
<path d="M209.06 379.7V423.7M216.15 379.7V423.7M223.23 379.7V423.7M230.31 379.7V423.7M237.4 379.7V423.7M201.98 384.1H244.48M201.98 388.5H244.48M201.98 392.9H244.48M201.98 397.3H244.48M201.98 401.7H244.48M201.98 406.1H244.48M201.98 410.5H244.48M201.98 414.9H244.48M201.98 419.3H244.48" stroke="#5f9cc2" stroke-width="0.35" opacity="0.4" fill="none"/>
<polyline points="201.98,414.68 244.48,414.68" fill="none" stroke="#cc7484" stroke-width="0.6"/>
<rect x="201.98" y="379.7" width="42.5" height="44" fill="none" stroke="#1c3442" stroke-width="0.8"/>
<text x="200.38" y="379.7" font-size="3.2" fill="#0e2f58" font-weight="700" text-anchor="end" dominant-baseline="central" transform="rotate(0.06 200.38 379.7)" stroke="#0e2f58" stroke-width="0.12">100</text>
<line x1="200.98" y1="379.7" x2="201.98" y2="379.7" stroke="#1c3442" stroke-width="0.4" />
<text x="200.38" y="388.5" font-size="3.2" fill="#0e2f58" font-weight="700" text-anchor="end" dominant-baseline="central" transform="rotate(0.06 200.38 388.5)" stroke="#0e2f58" stroke-width="0.12">80</text>
<line x1="200.98" y1="388.5" x2="201.98" y2="388.5" stroke="#1c3442" stroke-width="0.4" />
<text x="200.38" y="397.3" font-size="3.2" fill="#0e2f58" font-weight="700" text-anchor="end" dominant-baseline="central" transform="rotate(0.06 200.38 397.3)" stroke="#0e2f58" stroke-width="0.12">60</text>
<line x1="200.98" y1="397.3" x2="201.98" y2="397.3" stroke="#1c3442" stroke-width="0.4" />
<text x="200.38" y="406.1" font-size="3.2" fill="#0e2f58" font-weight="700" text-anchor="end" dominant-baseline="central" transform="rotate(0.06 200.38 406.1)" stroke="#0e2f58" stroke-width="0.12">40</text>
<line x1="200.98" y1="406.1" x2="201.98" y2="406.1" stroke="#1c3442" stroke-width="0.4" />
<text x="200.38" y="414.9" font-size="3.2" fill="#0e2f58" font-weight="700" text-anchor="end" dominant-baseline="central" transform="rotate(0.06 200.38 414.9)" stroke="#0e2f58" stroke-width="0.12">20</text>
<line x1="200.98" y1="414.9" x2="201.98" y2="414.9" stroke="#1c3442" stroke-width="0.4" />
<text x="200.38" y="423.7" font-size="3.2" fill="#0e2f58" font-weight="700" text-anchor="end" dominant-baseline="central" transform="rotate(0.06 200.38 423.7)" stroke="#0e2f58" stroke-width="0.12">0</text>
<line x1="200.98" y1="423.7" x2="201.98" y2="423.7" stroke="#1c3442" stroke-width="0.4" />
<text x="197.78" y="428.3" font-size="3.1" fill="#27323c" font-weight="700" textLength="45.9" lengthAdjust="spacingAndGlyphs" dominant-baseline="central" transform="rotate(0.06 197.78 428.3)" >09:04 07:09 05:12 03:16 01:19</text>
<rect x="249.94" y="369.2" width="57.2" height="63.9" fill="url(#gChartCard)" />
<text x="261.94" y="375.1" font-size="3.8" fill="#0a3cf0" font-weight="500" textLength="31.6" lengthAdjust="spacingAndGlyphs" dominant-baseline="central" transform="rotate(0.06 261.94 375.1)" >35kV 13柜A相温度</text>
<rect x="260.54" y="379.7" width="42.5" height="44" fill="url(#gPlot)" />
<path d="M267.62 379.7V423.7M274.71 379.7V423.7M281.79 379.7V423.7M288.87 379.7V423.7M295.96 379.7V423.7M260.54 384.1H303.04M260.54 388.5H303.04M260.54 392.9H303.04M260.54 397.3H303.04M260.54 401.7H303.04M260.54 406.1H303.04M260.54 410.5H303.04M260.54 414.9H303.04M260.54 419.3H303.04" stroke="#5f9cc2" stroke-width="0.35" opacity="0.4" fill="none"/>
<polyline points="260.54,414.68 303.04,414.68" fill="none" stroke="#cc7484" stroke-width="0.6"/>
<rect x="260.54" y="379.7" width="42.5" height="44" fill="none" stroke="#1c3442" stroke-width="0.8"/>
<text x="258.94" y="379.7" font-size="3.2" fill="#0e2f58" font-weight="700" text-anchor="end" dominant-baseline="central" transform="rotate(0.06 258.94 379.7)" stroke="#0e2f58" stroke-width="0.12">100</text>
<line x1="259.54" y1="379.7" x2="260.54" y2="379.7" stroke="#1c3442" stroke-width="0.4" />
<text x="258.94" y="388.5" font-size="3.2" fill="#0e2f58" font-weight="700" text-anchor="end" dominant-baseline="central" transform="rotate(0.06 258.94 388.5)" stroke="#0e2f58" stroke-width="0.12">80</text>
<line x1="259.54" y1="388.5" x2="260.54" y2="388.5" stroke="#1c3442" stroke-width="0.4" />
<text x="258.94" y="397.3" font-size="3.2" fill="#0e2f58" font-weight="700" text-anchor="end" dominant-baseline="central" transform="rotate(0.06 258.94 397.3)" stroke="#0e2f58" stroke-width="0.12">60</text>
<line x1="259.54" y1="397.3" x2="260.54" y2="397.3" stroke="#1c3442" stroke-width="0.4" />
<text x="258.94" y="406.1" font-size="3.2" fill="#0e2f58" font-weight="700" text-anchor="end" dominant-baseline="central" transform="rotate(0.06 258.94 406.1)" stroke="#0e2f58" stroke-width="0.12">40</text>
<line x1="259.54" y1="406.1" x2="260.54" y2="406.1" stroke="#1c3442" stroke-width="0.4" />
<text x="258.94" y="414.9" font-size="3.2" fill="#0e2f58" font-weight="700" text-anchor="end" dominant-baseline="central" transform="rotate(0.06 258.94 414.9)" stroke="#0e2f58" stroke-width="0.12">20</text>
<line x1="259.54" y1="414.9" x2="260.54" y2="414.9" stroke="#1c3442" stroke-width="0.4" />
<text x="258.94" y="423.7" font-size="3.2" fill="#0e2f58" font-weight="700" text-anchor="end" dominant-baseline="central" transform="rotate(0.06 258.94 423.7)" stroke="#0e2f58" stroke-width="0.12">0</text>
<line x1="259.54" y1="423.7" x2="260.54" y2="423.7" stroke="#1c3442" stroke-width="0.4" />
<text x="256.34" y="428.3" font-size="3.1" fill="#27323c" font-weight="700" textLength="45.9" lengthAdjust="spacingAndGlyphs" dominant-baseline="central" transform="rotate(0.06 256.34 428.3)" >08:09 07:11 05:12 03:16 01:16</text>
<rect x="308.5" y="369.2" width="57.2" height="63.9" fill="url(#gChartCard)" />
<text x="320.5" y="375.1" font-size="3.8" fill="#0a3cf0" font-weight="500" textLength="31.6" lengthAdjust="spacingAndGlyphs" dominant-baseline="central" transform="rotate(0.06 320.5 375.1)" >35kV 13柜B相温度</text>
<rect x="319.1" y="379.7" width="42.5" height="44" fill="url(#gPlot)" />
<path d="M326.18 379.7V423.7M333.27 379.7V423.7M340.35 379.7V423.7M347.43 379.7V423.7M354.52 379.7V423.7M319.1 384.1H361.6M319.1 388.5H361.6M319.1 392.9H361.6M319.1 397.3H361.6M319.1 401.7H361.6M319.1 406.1H361.6M319.1 410.5H361.6M319.1 414.9H361.6M319.1 419.3H361.6" stroke="#5f9cc2" stroke-width="0.35" opacity="0.4" fill="none"/>
<polyline points="319.1,415.34 340.35,415.52 348.85,414.99 361.6,414.77" fill="none" stroke="#cc7484" stroke-width="0.6"/>
<rect x="319.1" y="379.7" width="42.5" height="44" fill="none" stroke="#1c3442" stroke-width="0.8"/>
<text x="317.5" y="379.7" font-size="3.2" fill="#0e2f58" font-weight="700" text-anchor="end" dominant-baseline="central" transform="rotate(0.06 317.5 379.7)" stroke="#0e2f58" stroke-width="0.12">100</text>
<line x1="318.1" y1="379.7" x2="319.1" y2="379.7" stroke="#1c3442" stroke-width="0.4" />
<text x="317.5" y="388.5" font-size="3.2" fill="#0e2f58" font-weight="700" text-anchor="end" dominant-baseline="central" transform="rotate(0.06 317.5 388.5)" stroke="#0e2f58" stroke-width="0.12">80</text>
<line x1="318.1" y1="388.5" x2="319.1" y2="388.5" stroke="#1c3442" stroke-width="0.4" />
<text x="317.5" y="397.3" font-size="3.2" fill="#0e2f58" font-weight="700" text-anchor="end" dominant-baseline="central" transform="rotate(0.06 317.5 397.3)" stroke="#0e2f58" stroke-width="0.12">60</text>
<line x1="318.1" y1="397.3" x2="319.1" y2="397.3" stroke="#1c3442" stroke-width="0.4" />
<text x="317.5" y="406.1" font-size="3.2" fill="#0e2f58" font-weight="700" text-anchor="end" dominant-baseline="central" transform="rotate(0.06 317.5 406.1)" stroke="#0e2f58" stroke-width="0.12">40</text>
<line x1="318.1" y1="406.1" x2="319.1" y2="406.1" stroke="#1c3442" stroke-width="0.4" />
<text x="317.5" y="414.9" font-size="3.2" fill="#0e2f58" font-weight="700" text-anchor="end" dominant-baseline="central" transform="rotate(0.06 317.5 414.9)" stroke="#0e2f58" stroke-width="0.12">20</text>
<line x1="318.1" y1="414.9" x2="319.1" y2="414.9" stroke="#1c3442" stroke-width="0.4" />
<text x="317.5" y="423.7" font-size="3.2" fill="#0e2f58" font-weight="700" text-anchor="end" dominant-baseline="central" transform="rotate(0.06 317.5 423.7)" stroke="#0e2f58" stroke-width="0.12">0</text>
<line x1="318.1" y1="423.7" x2="319.1" y2="423.7" stroke="#1c3442" stroke-width="0.4" />
<text x="314.9" y="428.3" font-size="3.1" fill="#27323c" font-weight="700" textLength="45.9" lengthAdjust="spacingAndGlyphs" dominant-baseline="central" transform="rotate(0.06 314.9 428.3)" >09:01 07:10 05:16 03:16 01:22</text>
<rect x="15.7" y="434.5" width="57.2" height="63.9" fill="url(#gChartCard)" />
<text x="27.7" y="440.4" font-size="3.8" fill="#0a3cf0" font-weight="500" textLength="31.6" lengthAdjust="spacingAndGlyphs" dominant-baseline="central" transform="rotate(0.06 27.7 440.4)" >35kV 14柜C相温度</text>
<rect x="26.3" y="445" width="42.5" height="44" fill="url(#gPlot)" />
<path d="M33.38 445V489M40.47 445V489M47.55 445V489M54.63 445V489M61.72 445V489M26.3 449.4H68.8M26.3 453.8H68.8M26.3 458.2H68.8M26.3 462.6H68.8M26.3 467H68.8M26.3 471.4H68.8M26.3 475.8H68.8M26.3 480.2H68.8M26.3 484.6H68.8" stroke="#5f9cc2" stroke-width="0.35" opacity="0.4" fill="none"/>
<polyline points="26.3,479.98 68.8,479.98" fill="none" stroke="#cc7484" stroke-width="0.6"/>
<rect x="26.3" y="445" width="42.5" height="44" fill="none" stroke="#1c3442" stroke-width="0.8"/>
<text x="24.7" y="445" font-size="3.2" fill="#0e2f58" font-weight="700" text-anchor="end" dominant-baseline="central" transform="rotate(0.06 24.7 445)" stroke="#0e2f58" stroke-width="0.12">100</text>
<line x1="25.3" y1="445" x2="26.3" y2="445" stroke="#1c3442" stroke-width="0.4" />
<text x="24.7" y="453.8" font-size="3.2" fill="#0e2f58" font-weight="700" text-anchor="end" dominant-baseline="central" transform="rotate(0.06 24.7 453.8)" stroke="#0e2f58" stroke-width="0.12">80</text>
<line x1="25.3" y1="453.8" x2="26.3" y2="453.8" stroke="#1c3442" stroke-width="0.4" />
<text x="24.7" y="462.6" font-size="3.2" fill="#0e2f58" font-weight="700" text-anchor="end" dominant-baseline="central" transform="rotate(0.06 24.7 462.6)" stroke="#0e2f58" stroke-width="0.12">60</text>
<line x1="25.3" y1="462.6" x2="26.3" y2="462.6" stroke="#1c3442" stroke-width="0.4" />
<text x="24.7" y="471.4" font-size="3.2" fill="#0e2f58" font-weight="700" text-anchor="end" dominant-baseline="central" transform="rotate(0.06 24.7 471.4)" stroke="#0e2f58" stroke-width="0.12">40</text>
<line x1="25.3" y1="471.4" x2="26.3" y2="471.4" stroke="#1c3442" stroke-width="0.4" />
<text x="24.7" y="480.2" font-size="3.2" fill="#0e2f58" font-weight="700" text-anchor="end" dominant-baseline="central" transform="rotate(0.06 24.7 480.2)" stroke="#0e2f58" stroke-width="0.12">20</text>
<line x1="25.3" y1="480.2" x2="26.3" y2="480.2" stroke="#1c3442" stroke-width="0.4" />
<text x="24.7" y="489" font-size="3.2" fill="#0e2f58" font-weight="700" text-anchor="end" dominant-baseline="central" transform="rotate(0.06 24.7 489)" stroke="#0e2f58" stroke-width="0.12">0</text>
<line x1="25.3" y1="489" x2="26.3" y2="489" stroke="#1c3442" stroke-width="0.4" />
<text x="22.1" y="493.6" font-size="3.1" fill="#27323c" font-weight="700" textLength="45.9" lengthAdjust="spacingAndGlyphs" dominant-baseline="central" transform="rotate(0.06 22.1 493.6)" >08:21 06:17 04:13 02:08 00:04</text>
<rect x="74.26" y="434.5" width="57.2" height="63.9" fill="url(#gChartCard)" />
<text x="86.26" y="440.4" font-size="3.8" fill="#0a3cf0" font-weight="500" textLength="31.6" lengthAdjust="spacingAndGlyphs" dominant-baseline="central" transform="rotate(0.06 86.26 440.4)" >35kV 14柜A相温度</text>
<rect x="84.86" y="445" width="42.5" height="44" fill="url(#gPlot)" />
<path d="M91.94 445V489M99.03 445V489M106.11 445V489M113.19 445V489M120.28 445V489M84.86 449.4H127.36M84.86 453.8H127.36M84.86 458.2H127.36M84.86 462.6H127.36M84.86 467H127.36M84.86 471.4H127.36M84.86 475.8H127.36M84.86 480.2H127.36M84.86 484.6H127.36" stroke="#5f9cc2" stroke-width="0.35" opacity="0.4" fill="none"/>
<polyline points="84.86,481.3 127.36,481.3" fill="none" stroke="#cc7484" stroke-width="0.6"/>
<rect x="84.86" y="445" width="42.5" height="44" fill="none" stroke="#1c3442" stroke-width="0.8"/>
<text x="83.26" y="445" font-size="3.2" fill="#0e2f58" font-weight="700" text-anchor="end" dominant-baseline="central" transform="rotate(0.06 83.26 445)" stroke="#0e2f58" stroke-width="0.12">100</text>
<line x1="83.86" y1="445" x2="84.86" y2="445" stroke="#1c3442" stroke-width="0.4" />
<text x="83.26" y="453.8" font-size="3.2" fill="#0e2f58" font-weight="700" text-anchor="end" dominant-baseline="central" transform="rotate(0.06 83.26 453.8)" stroke="#0e2f58" stroke-width="0.12">80</text>
<line x1="83.86" y1="453.8" x2="84.86" y2="453.8" stroke="#1c3442" stroke-width="0.4" />
<text x="83.26" y="462.6" font-size="3.2" fill="#0e2f58" font-weight="700" text-anchor="end" dominant-baseline="central" transform="rotate(0.06 83.26 462.6)" stroke="#0e2f58" stroke-width="0.12">60</text>
<line x1="83.86" y1="462.6" x2="84.86" y2="462.6" stroke="#1c3442" stroke-width="0.4" />
<text x="83.26" y="471.4" font-size="3.2" fill="#0e2f58" font-weight="700" text-anchor="end" dominant-baseline="central" transform="rotate(0.06 83.26 471.4)" stroke="#0e2f58" stroke-width="0.12">40</text>
<line x1="83.86" y1="471.4" x2="84.86" y2="471.4" stroke="#1c3442" stroke-width="0.4" />
<text x="83.26" y="480.2" font-size="3.2" fill="#0e2f58" font-weight="700" text-anchor="end" dominant-baseline="central" transform="rotate(0.06 83.26 480.2)" stroke="#0e2f58" stroke-width="0.12">20</text>
<line x1="83.86" y1="480.2" x2="84.86" y2="480.2" stroke="#1c3442" stroke-width="0.4" />
<text x="83.26" y="489" font-size="3.2" fill="#0e2f58" font-weight="700" text-anchor="end" dominant-baseline="central" transform="rotate(0.06 83.26 489)" stroke="#0e2f58" stroke-width="0.12">0</text>
<line x1="83.86" y1="489" x2="84.86" y2="489" stroke="#1c3442" stroke-width="0.4" />
<text x="80.66" y="493.6" font-size="3.1" fill="#27323c" font-weight="700" textLength="45.9" lengthAdjust="spacingAndGlyphs" dominant-baseline="central" transform="rotate(0.06 80.66 493.6)" >09:02 07:07 05:12 03:06 01:01</text>
<rect x="132.82" y="434.5" width="57.2" height="63.9" fill="url(#gChartCard)" />
<text x="144.82" y="440.4" font-size="3.8" fill="#0a3cf0" font-weight="500" textLength="31.6" lengthAdjust="spacingAndGlyphs" dominant-baseline="central" transform="rotate(0.06 144.82 440.4)" >35kV 14柜B相温度</text>
<rect x="143.42" y="445" width="42.5" height="44" fill="url(#gPlot)" />
<path d="M150.5 445V489M157.59 445V489M164.67 445V489M171.75 445V489M178.84 445V489M143.42 449.4H185.92M143.42 453.8H185.92M143.42 458.2H185.92M143.42 462.6H185.92M143.42 467H185.92M143.42 471.4H185.92M143.42 475.8H185.92M143.42 480.2H185.92M143.42 484.6H185.92" stroke="#5f9cc2" stroke-width="0.35" opacity="0.4" fill="none"/>
<polyline points="143.42,479.98 185.92,479.98" fill="none" stroke="#cc7484" stroke-width="0.6"/>
<rect x="143.42" y="445" width="42.5" height="44" fill="none" stroke="#1c3442" stroke-width="0.8"/>
<text x="141.82" y="445" font-size="3.2" fill="#0e2f58" font-weight="700" text-anchor="end" dominant-baseline="central" transform="rotate(0.06 141.82 445)" stroke="#0e2f58" stroke-width="0.12">100</text>
<line x1="142.42" y1="445" x2="143.42" y2="445" stroke="#1c3442" stroke-width="0.4" />
<text x="141.82" y="453.8" font-size="3.2" fill="#0e2f58" font-weight="700" text-anchor="end" dominant-baseline="central" transform="rotate(0.06 141.82 453.8)" stroke="#0e2f58" stroke-width="0.12">80</text>
<line x1="142.42" y1="453.8" x2="143.42" y2="453.8" stroke="#1c3442" stroke-width="0.4" />
<text x="141.82" y="462.6" font-size="3.2" fill="#0e2f58" font-weight="700" text-anchor="end" dominant-baseline="central" transform="rotate(0.06 141.82 462.6)" stroke="#0e2f58" stroke-width="0.12">60</text>
<line x1="142.42" y1="462.6" x2="143.42" y2="462.6" stroke="#1c3442" stroke-width="0.4" />
<text x="141.82" y="471.4" font-size="3.2" fill="#0e2f58" font-weight="700" text-anchor="end" dominant-baseline="central" transform="rotate(0.06 141.82 471.4)" stroke="#0e2f58" stroke-width="0.12">40</text>
<line x1="142.42" y1="471.4" x2="143.42" y2="471.4" stroke="#1c3442" stroke-width="0.4" />
<text x="141.82" y="480.2" font-size="3.2" fill="#0e2f58" font-weight="700" text-anchor="end" dominant-baseline="central" transform="rotate(0.06 141.82 480.2)" stroke="#0e2f58" stroke-width="0.12">20</text>
<line x1="142.42" y1="480.2" x2="143.42" y2="480.2" stroke="#1c3442" stroke-width="0.4" />
<text x="141.82" y="489" font-size="3.2" fill="#0e2f58" font-weight="700" text-anchor="end" dominant-baseline="central" transform="rotate(0.06 141.82 489)" stroke="#0e2f58" stroke-width="0.12">0</text>
<line x1="142.42" y1="489" x2="143.42" y2="489" stroke="#1c3442" stroke-width="0.4" />
<text x="139.22" y="493.6" font-size="3.1" fill="#27323c" font-weight="700" textLength="45.9" lengthAdjust="spacingAndGlyphs" dominant-baseline="central" transform="rotate(0.06 139.22 493.6)" >08:02 07:14 05:13 03:13 01:10</text>
<rect x="191.38" y="434.5" width="57.2" height="63.9" fill="url(#gChartCard)" />
<text x="203.38" y="440.4" font-size="3.8" fill="#0a3cf0" font-weight="500" textLength="31.6" lengthAdjust="spacingAndGlyphs" dominant-baseline="central" transform="rotate(0.06 203.38 440.4)" >35kV 15柜C相温度</text>
<rect x="201.98" y="445" width="42.5" height="44" fill="url(#gPlot)" />
<path d="M209.06 445V489M216.15 445V489M223.23 445V489M230.31 445V489M237.4 445V489M201.98 449.4H244.48M201.98 453.8H244.48M201.98 458.2H244.48M201.98 462.6H244.48M201.98 467H244.48M201.98 471.4H244.48M201.98 475.8H244.48M201.98 480.2H244.48M201.98 484.6H244.48" stroke="#5f9cc2" stroke-width="0.35" opacity="0.4" fill="none"/>
<polyline points="201.98,479.98 244.48,479.98" fill="none" stroke="#cc7484" stroke-width="0.6"/>
<rect x="201.98" y="445" width="42.5" height="44" fill="none" stroke="#1c3442" stroke-width="0.8"/>
<text x="200.38" y="445" font-size="3.2" fill="#0e2f58" font-weight="700" text-anchor="end" dominant-baseline="central" transform="rotate(0.06 200.38 445)" stroke="#0e2f58" stroke-width="0.12">100</text>
<line x1="200.98" y1="445" x2="201.98" y2="445" stroke="#1c3442" stroke-width="0.4" />
<text x="200.38" y="453.8" font-size="3.2" fill="#0e2f58" font-weight="700" text-anchor="end" dominant-baseline="central" transform="rotate(0.06 200.38 453.8)" stroke="#0e2f58" stroke-width="0.12">80</text>
<line x1="200.98" y1="453.8" x2="201.98" y2="453.8" stroke="#1c3442" stroke-width="0.4" />
<text x="200.38" y="462.6" font-size="3.2" fill="#0e2f58" font-weight="700" text-anchor="end" dominant-baseline="central" transform="rotate(0.06 200.38 462.6)" stroke="#0e2f58" stroke-width="0.12">60</text>
<line x1="200.98" y1="462.6" x2="201.98" y2="462.6" stroke="#1c3442" stroke-width="0.4" />
<text x="200.38" y="471.4" font-size="3.2" fill="#0e2f58" font-weight="700" text-anchor="end" dominant-baseline="central" transform="rotate(0.06 200.38 471.4)" stroke="#0e2f58" stroke-width="0.12">40</text>
<line x1="200.98" y1="471.4" x2="201.98" y2="471.4" stroke="#1c3442" stroke-width="0.4" />
<text x="200.38" y="480.2" font-size="3.2" fill="#0e2f58" font-weight="700" text-anchor="end" dominant-baseline="central" transform="rotate(0.06 200.38 480.2)" stroke="#0e2f58" stroke-width="0.12">20</text>
<line x1="200.98" y1="480.2" x2="201.98" y2="480.2" stroke="#1c3442" stroke-width="0.4" />
<text x="200.38" y="489" font-size="3.2" fill="#0e2f58" font-weight="700" text-anchor="end" dominant-baseline="central" transform="rotate(0.06 200.38 489)" stroke="#0e2f58" stroke-width="0.12">0</text>
<line x1="200.98" y1="489" x2="201.98" y2="489" stroke="#1c3442" stroke-width="0.4" />
<text x="197.78" y="493.6" font-size="3.1" fill="#27323c" font-weight="700" textLength="45.9" lengthAdjust="spacingAndGlyphs" dominant-baseline="central" transform="rotate(0.06 197.78 493.6)" >09:04 07:14 05:18 03:22 01:26</text>
<rect x="249.94" y="434.5" width="57.2" height="63.9" fill="url(#gChartCard)" />
<text x="261.94" y="440.4" font-size="3.8" fill="#0a3cf0" font-weight="500" textLength="31.6" lengthAdjust="spacingAndGlyphs" dominant-baseline="central" transform="rotate(0.06 261.94 440.4)" >35kV 15柜A相温度</text>
<rect x="260.54" y="445" width="42.5" height="44" fill="url(#gPlot)" />
<path d="M267.62 445V489M274.71 445V489M281.79 445V489M288.87 445V489M295.96 445V489M260.54 449.4H303.04M260.54 453.8H303.04M260.54 458.2H303.04M260.54 462.6H303.04M260.54 467H303.04M260.54 471.4H303.04M260.54 475.8H303.04M260.54 480.2H303.04M260.54 484.6H303.04" stroke="#5f9cc2" stroke-width="0.35" opacity="0.4" fill="none"/>
<polyline points="260.54,479.98 303.04,479.98" fill="none" stroke="#cc7484" stroke-width="0.6"/>
<rect x="260.54" y="445" width="42.5" height="44" fill="none" stroke="#1c3442" stroke-width="0.8"/>
<text x="258.94" y="445" font-size="3.2" fill="#0e2f58" font-weight="700" text-anchor="end" dominant-baseline="central" transform="rotate(0.06 258.94 445)" stroke="#0e2f58" stroke-width="0.12">100</text>
<line x1="259.54" y1="445" x2="260.54" y2="445" stroke="#1c3442" stroke-width="0.4" />
<text x="258.94" y="453.8" font-size="3.2" fill="#0e2f58" font-weight="700" text-anchor="end" dominant-baseline="central" transform="rotate(0.06 258.94 453.8)" stroke="#0e2f58" stroke-width="0.12">80</text>
<line x1="259.54" y1="453.8" x2="260.54" y2="453.8" stroke="#1c3442" stroke-width="0.4" />
<text x="258.94" y="462.6" font-size="3.2" fill="#0e2f58" font-weight="700" text-anchor="end" dominant-baseline="central" transform="rotate(0.06 258.94 462.6)" stroke="#0e2f58" stroke-width="0.12">60</text>
<line x1="259.54" y1="462.6" x2="260.54" y2="462.6" stroke="#1c3442" stroke-width="0.4" />
<text x="258.94" y="471.4" font-size="3.2" fill="#0e2f58" font-weight="700" text-anchor="end" dominant-baseline="central" transform="rotate(0.06 258.94 471.4)" stroke="#0e2f58" stroke-width="0.12">40</text>
<line x1="259.54" y1="471.4" x2="260.54" y2="471.4" stroke="#1c3442" stroke-width="0.4" />
<text x="258.94" y="480.2" font-size="3.2" fill="#0e2f58" font-weight="700" text-anchor="end" dominant-baseline="central" transform="rotate(0.06 258.94 480.2)" stroke="#0e2f58" stroke-width="0.12">20</text>
<line x1="259.54" y1="480.2" x2="260.54" y2="480.2" stroke="#1c3442" stroke-width="0.4" />
<text x="258.94" y="489" font-size="3.2" fill="#0e2f58" font-weight="700" text-anchor="end" dominant-baseline="central" transform="rotate(0.06 258.94 489)" stroke="#0e2f58" stroke-width="0.12">0</text>
<line x1="259.54" y1="489" x2="260.54" y2="489" stroke="#1c3442" stroke-width="0.4" />
<text x="256.34" y="493.6" font-size="3.1" fill="#27323c" font-weight="700" textLength="45.9" lengthAdjust="spacingAndGlyphs" dominant-baseline="central" transform="rotate(0.06 256.34 493.6)" >08:12 07:03 04:04 03:02 01:07</text>
<rect x="308.5" y="434.5" width="57.2" height="63.9" fill="url(#gChartCard)" />
<text x="320.5" y="440.4" font-size="3.8" fill="#0a3cf0" font-weight="500" textLength="31.6" lengthAdjust="spacingAndGlyphs" dominant-baseline="central" transform="rotate(0.06 320.5 440.4)" >35kV 15柜B相温度</text>
<rect x="319.1" y="445" width="42.5" height="44" fill="url(#gPlot)" />
<path d="M326.18 445V489M333.27 445V489M340.35 445V489M347.43 445V489M354.52 445V489M319.1 449.4H361.6M319.1 453.8H361.6M319.1 458.2H361.6M319.1 462.6H361.6M319.1 467H361.6M319.1 471.4H361.6M319.1 475.8H361.6M319.1 480.2H361.6M319.1 484.6H361.6" stroke="#5f9cc2" stroke-width="0.35" opacity="0.4" fill="none"/>
<polyline points="319.1,481.08 336.1,480.99 344.6,480.38 361.6,479.94" fill="none" stroke="#cc7484" stroke-width="0.6"/>
<rect x="319.1" y="445" width="42.5" height="44" fill="none" stroke="#1c3442" stroke-width="0.8"/>
<text x="317.5" y="445" font-size="3.2" fill="#0e2f58" font-weight="700" text-anchor="end" dominant-baseline="central" transform="rotate(0.06 317.5 445)" stroke="#0e2f58" stroke-width="0.12">100</text>
<line x1="318.1" y1="445" x2="319.1" y2="445" stroke="#1c3442" stroke-width="0.4" />
<text x="317.5" y="453.8" font-size="3.2" fill="#0e2f58" font-weight="700" text-anchor="end" dominant-baseline="central" transform="rotate(0.06 317.5 453.8)" stroke="#0e2f58" stroke-width="0.12">80</text>
<line x1="318.1" y1="453.8" x2="319.1" y2="453.8" stroke="#1c3442" stroke-width="0.4" />
<text x="317.5" y="462.6" font-size="3.2" fill="#0e2f58" font-weight="700" text-anchor="end" dominant-baseline="central" transform="rotate(0.06 317.5 462.6)" stroke="#0e2f58" stroke-width="0.12">60</text>
<line x1="318.1" y1="462.6" x2="319.1" y2="462.6" stroke="#1c3442" stroke-width="0.4" />
<text x="317.5" y="471.4" font-size="3.2" fill="#0e2f58" font-weight="700" text-anchor="end" dominant-baseline="central" transform="rotate(0.06 317.5 471.4)" stroke="#0e2f58" stroke-width="0.12">40</text>
<line x1="318.1" y1="471.4" x2="319.1" y2="471.4" stroke="#1c3442" stroke-width="0.4" />
<text x="317.5" y="480.2" font-size="3.2" fill="#0e2f58" font-weight="700" text-anchor="end" dominant-baseline="central" transform="rotate(0.06 317.5 480.2)" stroke="#0e2f58" stroke-width="0.12">20</text>
<line x1="318.1" y1="480.2" x2="319.1" y2="480.2" stroke="#1c3442" stroke-width="0.4" />
<text x="317.5" y="489" font-size="3.2" fill="#0e2f58" font-weight="700" text-anchor="end" dominant-baseline="central" transform="rotate(0.06 317.5 489)" stroke="#0e2f58" stroke-width="0.12">0</text>
<line x1="318.1" y1="489" x2="319.1" y2="489" stroke="#1c3442" stroke-width="0.4" />
<text x="314.9" y="493.6" font-size="3.1" fill="#27323c" font-weight="700" textLength="45.9" lengthAdjust="spacingAndGlyphs" dominant-baseline="central" transform="rotate(0.06 314.9 493.6)" >08:06 07:08 05:06 03:06 01:07</text>
</svg>
<svg class="panel" style="left:399px;top:274px" width="378" height="228" viewBox="399 274 378 228" font-family='"Liberation Sans","Noto Sans CJK SC",sans-serif'>
<rect x="399.8" y="274.6" width="376.8" height="227" fill="#242424" />
<rect x="399.8" y="274.6" width="376.8" height="20.4" fill="url(#gTool)" />
<rect x="399.8" y="274.6" width="376.8" height="0.6" fill="#8e8e8e" />
<rect x="406" y="278.6" width="10.2" height="2.5" fill="url(#gOrangeBar)" rx="0.6"/><rect x="406" y="280.6" width="10.2" height="8" fill="url(#gIconBlue)" rx="1"/><rect x="408.55" y="285.6" width="5.1" height="0.9" fill="#d8f2ff" opacity="0.85"/>
<text x="411.1" y="292.3" font-size="3.4" fill="#2a2a2a" font-weight="700" text-anchor="middle" dominant-baseline="central" transform="rotate(0.06 411.1 292.3)" >概要图</text>
<rect x="423.8" y="278.6" width="10.2" height="2.5" fill="url(#gOrangeBar)" rx="0.6"/><rect x="423.8" y="280.6" width="10.2" height="8" fill="url(#gIconBlue)" rx="1"/><rect x="428.9" y="283.6" width="3.06" height="2.2" fill="#d8f2ff" opacity="0.7"/><rect x="425.84" y="284.7" width="2.55" height="0.8" fill="#d8f2ff" opacity="0.6"/>
<text x="428.9" y="292.3" font-size="3.4" fill="#2a2a2a" font-weight="700" text-anchor="middle" dominant-baseline="central" transform="rotate(0.06 428.9 292.3)" >详细图</text>
<rect x="441.6" y="278.6" width="10.2" height="2.5" fill="url(#gOrangeBar)" rx="0.6"/><rect x="441.6" y="280.6" width="10.2" height="8" fill="url(#gIconBlue)" rx="1"/><polyline points="443.64,285.8 445.68,283.8 447.72,285 449.96,283.4" fill="none" stroke="#e0f6ff" stroke-width="0.8" opacity="0.85"/>
<text x="446.7" y="292.3" font-size="3.4" fill="#2a2a2a" font-weight="700" text-anchor="middle" dominant-baseline="central" transform="rotate(0.06 446.7 292.3)" >曲线图</text>
<rect x="467.28" y="278.9" width="5.92" height="5.7" fill="#1a7cc4" rx="0.5"/><rect x="463" y="280.74" width="6.32" height="5.06" fill="url(#gIconBlue)" rx="0.6"/><rect x="463.51" y="286.08" width="9.18" height="1.84" fill="#8a97a3" rx="0.4"/><rect x="468.61" y="284.6" width="4.08" height="1.47" fill="#5f7486" />
<text x="468.1" y="292.3" font-size="3.4" fill="#2a2a2a" font-weight="700" text-anchor="middle" dominant-baseline="central" transform="rotate(0.06 468.1 292.3)" >操作设备</text>
<line x1="478.4" y1="276.6" x2="478.4" y2="293.5" stroke="#d6d6d6" stroke-width="0.5" />
<polygon points="483.2,283.9 487.82,280.4 487.82,281.94 494.2,281.94 494.2,285.86 487.82,285.86 487.82,287.4" fill="url(#gArrow)" stroke="#2a9ad8" stroke-width="0.4" stroke-linejoin="round"/>
<text x="488.7" y="292.3" font-size="3.4" fill="#2a2a2a" font-weight="700" text-anchor="middle" dominant-baseline="central" transform="rotate(0.06 488.7 292.3)" >前一页</text>
<polygon points="511.8,283.9 507.18,280.4 507.18,281.94 500.8,281.94 500.8,285.86 507.18,285.86 507.18,287.4" fill="url(#gArrow)" stroke="#2a9ad8" stroke-width="0.4" stroke-linejoin="round"/>
<text x="506.3" y="292.3" font-size="3.4" fill="#2a2a2a" font-weight="700" text-anchor="middle" dominant-baseline="central" transform="rotate(0.06 506.3 292.3)" >后一页</text>
<rect x="707.76" y="278.8" width="6.07" height="4.85" fill="url(#gBlueBtn)" rx="1"/><rect x="704.2" y="283.84" width="6.6" height="4.66" fill="url(#gOrangeBtn)" rx="1.2"/><rect x="711.06" y="283.65" width="6.34" height="4.85" fill="url(#gYellowBtn)" rx="1.2"/><rect x="722.9" y="278.8" width="13.1" height="9.7" fill="url(#gBlueBtn)" rx="1.3"/><rect x="741.4" y="278.8" width="12.9" height="9.7" fill="url(#gOrangeBtn)" rx="1.3"/><rect x="760" y="278.8" width="13" height="9.7" fill="url(#gYellowBtn)" rx="1.3"/><text x="710.8" y="292.7" font-size="3.3" fill="#1c1c1c" font-weight="700" text-anchor="middle" dominant-baseline="central" transform="rotate(0.06 710.8 292.7)" >所有</text><text x="729.45" y="292.7" font-size="3.3" fill="#1c1c1c" font-weight="700" text-anchor="middle" dominant-baseline="central" transform="rotate(0.06 729.45 292.7)" >正常</text><text x="747.85" y="292.7" font-size="3.3" fill="#1c1c1c" font-weight="700" text-anchor="middle" dominant-baseline="central" transform="rotate(0.06 747.85 292.7)" >超温</text><text x="766.5" y="292.7" font-size="3.3" fill="#1c1c1c" font-weight="700" text-anchor="middle" dominant-baseline="central" transform="rotate(0.06 766.5 292.7)" >故障</text>
<rect x="399.8" y="295" width="376.8" height="7" fill="url(#gInfo)" />
<text x="406.6" y="298.7" font-size="3.9" fill="#1e1e1e" font-weight="700" textLength="79" lengthAdjust="spacingAndGlyphs" dominant-baseline="central" transform="rotate(0.06 406.6 298.7)" >当前视图: 测温节点曲线图&#160;&#160;第10页 | 共56页</text>
<rect x="399.8" y="302" width="376.8" height="5.2" fill="#1c1c1c" />
<rect x="771" y="302" width="5.6" height="199.6" fill="#505050" />
<rect x="771.2" y="302.4" width="5.2" height="4.6" fill="#ececec" />
<polygon points="772.3,305.8 775.3,305.8 773.8,303.4" fill="#111"/>
<rect x="771.2" y="496.6" width="5.2" height="4.6" fill="#ececec" />
<polygon points="772.3,497.8 775.3,497.8 773.8,500.2" fill="#111"/>
<rect x="771.2" y="380.3" width="5.2" height="4.6" fill="#b8b8b8" />
<rect x="399.8" y="302" width="1.2" height="199.6" fill="#0c0c0c" />
<rect x="399.8" y="499.2" width="372" height="2.4" fill="#0a0a0a" />
<rect x="403.3" y="307.3" width="58.8" height="62.2" fill="url(#gChartCard)" />
<text x="416.1" y="312.9" font-size="3.8" fill="#0a3cf0" font-weight="500" textLength="31.6" lengthAdjust="spacingAndGlyphs" dominant-baseline="central" transform="rotate(0.06 416.1 312.9)" >35kV 10柜C相温度</text>
<rect x="413.5" y="317.1" width="44.8" height="44.2" fill="url(#gPlot)" />
<path d="M420.97 317.1V361.3M428.43 317.1V361.3M435.9 317.1V361.3M443.37 317.1V361.3M450.83 317.1V361.3M413.5 321.52H458.3M413.5 325.94H458.3M413.5 330.36H458.3M413.5 334.78H458.3M413.5 339.2H458.3M413.5 343.62H458.3M413.5 348.04H458.3M413.5 352.46H458.3M413.5 356.88H458.3" stroke="#5f9cc2" stroke-width="0.35" opacity="0.4" fill="none"/>
<polyline points="413.5,352.24 458.3,352.24" fill="none" stroke="#cc7484" stroke-width="0.6"/>
<rect x="413.5" y="317.1" width="44.8" height="44.2" fill="none" stroke="#1c3442" stroke-width="0.8"/>
<text x="411.9" y="317.1" font-size="3.2" fill="#0e2f58" font-weight="700" text-anchor="end" dominant-baseline="central" transform="rotate(0.06 411.9 317.1)" stroke="#0e2f58" stroke-width="0.12">100</text>
<line x1="412.5" y1="317.1" x2="413.5" y2="317.1" stroke="#1c3442" stroke-width="0.4" />
<text x="411.9" y="325.94" font-size="3.2" fill="#0e2f58" font-weight="700" text-anchor="end" dominant-baseline="central" transform="rotate(0.06 411.9 325.94)" stroke="#0e2f58" stroke-width="0.12">80</text>
<line x1="412.5" y1="325.94" x2="413.5" y2="325.94" stroke="#1c3442" stroke-width="0.4" />
<text x="411.9" y="334.78" font-size="3.2" fill="#0e2f58" font-weight="700" text-anchor="end" dominant-baseline="central" transform="rotate(0.06 411.9 334.78)" stroke="#0e2f58" stroke-width="0.12">60</text>
<line x1="412.5" y1="334.78" x2="413.5" y2="334.78" stroke="#1c3442" stroke-width="0.4" />
<text x="411.9" y="343.62" font-size="3.2" fill="#0e2f58" font-weight="700" text-anchor="end" dominant-baseline="central" transform="rotate(0.06 411.9 343.62)" stroke="#0e2f58" stroke-width="0.12">40</text>
<line x1="412.5" y1="343.62" x2="413.5" y2="343.62" stroke="#1c3442" stroke-width="0.4" />
<text x="411.9" y="352.46" font-size="3.2" fill="#0e2f58" font-weight="700" text-anchor="end" dominant-baseline="central" transform="rotate(0.06 411.9 352.46)" stroke="#0e2f58" stroke-width="0.12">20</text>
<line x1="412.5" y1="352.46" x2="413.5" y2="352.46" stroke="#1c3442" stroke-width="0.4" />
<text x="411.9" y="361.3" font-size="3.2" fill="#0e2f58" font-weight="700" text-anchor="end" dominant-baseline="central" transform="rotate(0.06 411.9 361.3)" stroke="#0e2f58" stroke-width="0.12">0</text>
<line x1="412.5" y1="361.3" x2="413.5" y2="361.3" stroke="#1c3442" stroke-width="0.4" />
<text x="409.3" y="365.7" font-size="3.1" fill="#27323c" font-weight="700" textLength="48.2" lengthAdjust="spacingAndGlyphs" dominant-baseline="central" transform="rotate(0.06 409.3 365.7)" >08:09 07:16 05:18 03:22 01:28</text>
<rect x="463.3" y="307.3" width="58.8" height="62.2" fill="url(#gChartCard)" />
<text x="476.1" y="312.9" font-size="3.8" fill="#0a3cf0" font-weight="500" textLength="31.6" lengthAdjust="spacingAndGlyphs" dominant-baseline="central" transform="rotate(0.06 476.1 312.9)" >35kV 10柜A相温度</text>
<rect x="473.5" y="317.1" width="44.8" height="44.2" fill="url(#gPlot)" />
<path d="M480.97 317.1V361.3M488.43 317.1V361.3M495.9 317.1V361.3M503.37 317.1V361.3M510.83 317.1V361.3M473.5 321.52H518.3M473.5 325.94H518.3M473.5 330.36H518.3M473.5 334.78H518.3M473.5 339.2H518.3M473.5 343.62H518.3M473.5 348.04H518.3M473.5 352.46H518.3M473.5 356.88H518.3" stroke="#5f9cc2" stroke-width="0.35" opacity="0.4" fill="none"/>
<polyline points="473.5,353.12 482.46,352.9 485.6,353.52 489.18,352.46 500.38,352.19 518.3,352.19" fill="none" stroke="#cc7484" stroke-width="0.6"/>
<rect x="473.5" y="317.1" width="44.8" height="44.2" fill="none" stroke="#1c3442" stroke-width="0.8"/>
<text x="471.9" y="317.1" font-size="3.2" fill="#0e2f58" font-weight="700" text-anchor="end" dominant-baseline="central" transform="rotate(0.06 471.9 317.1)" stroke="#0e2f58" stroke-width="0.12">100</text>
<line x1="472.5" y1="317.1" x2="473.5" y2="317.1" stroke="#1c3442" stroke-width="0.4" />
<text x="471.9" y="325.94" font-size="3.2" fill="#0e2f58" font-weight="700" text-anchor="end" dominant-baseline="central" transform="rotate(0.06 471.9 325.94)" stroke="#0e2f58" stroke-width="0.12">80</text>
<line x1="472.5" y1="325.94" x2="473.5" y2="325.94" stroke="#1c3442" stroke-width="0.4" />
<text x="471.9" y="334.78" font-size="3.2" fill="#0e2f58" font-weight="700" text-anchor="end" dominant-baseline="central" transform="rotate(0.06 471.9 334.78)" stroke="#0e2f58" stroke-width="0.12">60</text>
<line x1="472.5" y1="334.78" x2="473.5" y2="334.78" stroke="#1c3442" stroke-width="0.4" />
<text x="471.9" y="343.62" font-size="3.2" fill="#0e2f58" font-weight="700" text-anchor="end" dominant-baseline="central" transform="rotate(0.06 471.9 343.62)" stroke="#0e2f58" stroke-width="0.12">40</text>
<line x1="472.5" y1="343.62" x2="473.5" y2="343.62" stroke="#1c3442" stroke-width="0.4" />
<text x="471.9" y="352.46" font-size="3.2" fill="#0e2f58" font-weight="700" text-anchor="end" dominant-baseline="central" transform="rotate(0.06 471.9 352.46)" stroke="#0e2f58" stroke-width="0.12">20</text>
<line x1="472.5" y1="352.46" x2="473.5" y2="352.46" stroke="#1c3442" stroke-width="0.4" />
<text x="471.9" y="361.3" font-size="3.2" fill="#0e2f58" font-weight="700" text-anchor="end" dominant-baseline="central" transform="rotate(0.06 471.9 361.3)" stroke="#0e2f58" stroke-width="0.12">0</text>
<line x1="472.5" y1="361.3" x2="473.5" y2="361.3" stroke="#1c3442" stroke-width="0.4" />
<text x="469.3" y="365.7" font-size="3.1" fill="#27323c" font-weight="700" textLength="48.2" lengthAdjust="spacingAndGlyphs" dominant-baseline="central" transform="rotate(0.06 469.3 365.7)" >09:03 07:11 05:22 03:01 01:05</text>
<rect x="703.3" y="307.3" width="58.8" height="62.2" fill="url(#gChartCard)" />
<text x="716.1" y="312.9" font-size="3.8" fill="#0a3cf0" font-weight="500" textLength="31.6" lengthAdjust="spacingAndGlyphs" dominant-baseline="central" transform="rotate(0.06 716.1 312.9)" >35kV 11柜B相温度</text>
<rect x="713.5" y="317.1" width="44.8" height="44.2" fill="url(#gPlot)" />
<path d="M720.97 317.1V361.3M728.43 317.1V361.3M735.9 317.1V361.3M743.37 317.1V361.3M750.83 317.1V361.3M713.5 321.52H758.3M713.5 325.94H758.3M713.5 330.36H758.3M713.5 334.78H758.3M713.5 339.2H758.3M713.5 343.62H758.3M713.5 348.04H758.3M713.5 352.46H758.3M713.5 356.88H758.3" stroke="#5f9cc2" stroke-width="0.35" opacity="0.4" fill="none"/>
<polyline points="713.5,353.12 722.46,352.9 725.6,353.52 729.18,352.46 740.38,352.19 758.3,352.19" fill="none" stroke="#cc7484" stroke-width="0.6"/>
<rect x="713.5" y="317.1" width="44.8" height="44.2" fill="none" stroke="#1c3442" stroke-width="0.8"/>
<text x="711.9" y="317.1" font-size="3.2" fill="#0e2f58" font-weight="700" text-anchor="end" dominant-baseline="central" transform="rotate(0.06 711.9 317.1)" stroke="#0e2f58" stroke-width="0.12">100</text>
<line x1="712.5" y1="317.1" x2="713.5" y2="317.1" stroke="#1c3442" stroke-width="0.4" />
<text x="711.9" y="325.94" font-size="3.2" fill="#0e2f58" font-weight="700" text-anchor="end" dominant-baseline="central" transform="rotate(0.06 711.9 325.94)" stroke="#0e2f58" stroke-width="0.12">80</text>
<line x1="712.5" y1="325.94" x2="713.5" y2="325.94" stroke="#1c3442" stroke-width="0.4" />
<text x="711.9" y="334.78" font-size="3.2" fill="#0e2f58" font-weight="700" text-anchor="end" dominant-baseline="central" transform="rotate(0.06 711.9 334.78)" stroke="#0e2f58" stroke-width="0.12">60</text>
<line x1="712.5" y1="334.78" x2="713.5" y2="334.78" stroke="#1c3442" stroke-width="0.4" />
<text x="711.9" y="343.62" font-size="3.2" fill="#0e2f58" font-weight="700" text-anchor="end" dominant-baseline="central" transform="rotate(0.06 711.9 343.62)" stroke="#0e2f58" stroke-width="0.12">40</text>
<line x1="712.5" y1="343.62" x2="713.5" y2="343.62" stroke="#1c3442" stroke-width="0.4" />
<text x="711.9" y="352.46" font-size="3.2" fill="#0e2f58" font-weight="700" text-anchor="end" dominant-baseline="central" transform="rotate(0.06 711.9 352.46)" stroke="#0e2f58" stroke-width="0.12">20</text>
<line x1="712.5" y1="352.46" x2="713.5" y2="352.46" stroke="#1c3442" stroke-width="0.4" />
<text x="711.9" y="361.3" font-size="3.2" fill="#0e2f58" font-weight="700" text-anchor="end" dominant-baseline="central" transform="rotate(0.06 711.9 361.3)" stroke="#0e2f58" stroke-width="0.12">0</text>
<line x1="712.5" y1="361.3" x2="713.5" y2="361.3" stroke="#1c3442" stroke-width="0.4" />
<text x="709.3" y="365.7" font-size="3.1" fill="#27323c" font-weight="700" textLength="48.2" lengthAdjust="spacingAndGlyphs" dominant-baseline="central" transform="rotate(0.06 709.3 365.7)" >09:01 07:10 05:18 03:28 01:21</text>
<rect x="403.3" y="371.2" width="58.8" height="62.9" fill="url(#gChartCard)" />
<text x="416.1" y="377.3" font-size="3.8" fill="#0a3cf0" font-weight="500" textLength="31.6" lengthAdjust="spacingAndGlyphs" dominant-baseline="central" transform="rotate(0.06 416.1 377.3)" >35kV 12柜C相温度</text>
<rect x="413.5" y="381.5" width="44.8" height="44.2" fill="url(#gPlot)" />
<path d="M420.97 381.5V425.7M428.43 381.5V425.7M435.9 381.5V425.7M443.37 381.5V425.7M450.83 381.5V425.7M413.5 385.92H458.3M413.5 390.34H458.3M413.5 394.76H458.3M413.5 399.18H458.3M413.5 403.6H458.3M413.5 408.02H458.3M413.5 412.44H458.3M413.5 416.86H458.3M413.5 421.28H458.3" stroke="#5f9cc2" stroke-width="0.35" opacity="0.4" fill="none"/>
<polyline points="413.5,416.64 458.3,416.64" fill="none" stroke="#cc7484" stroke-width="0.6"/>
<rect x="413.5" y="381.5" width="44.8" height="44.2" fill="none" stroke="#1c3442" stroke-width="0.8"/>
<text x="411.9" y="381.5" font-size="3.2" fill="#0e2f58" font-weight="700" text-anchor="end" dominant-baseline="central" transform="rotate(0.06 411.9 381.5)" stroke="#0e2f58" stroke-width="0.12">100</text>
<line x1="412.5" y1="381.5" x2="413.5" y2="381.5" stroke="#1c3442" stroke-width="0.4" />
<text x="411.9" y="390.34" font-size="3.2" fill="#0e2f58" font-weight="700" text-anchor="end" dominant-baseline="central" transform="rotate(0.06 411.9 390.34)" stroke="#0e2f58" stroke-width="0.12">80</text>
<line x1="412.5" y1="390.34" x2="413.5" y2="390.34" stroke="#1c3442" stroke-width="0.4" />
<text x="411.9" y="399.18" font-size="3.2" fill="#0e2f58" font-weight="700" text-anchor="end" dominant-baseline="central" transform="rotate(0.06 411.9 399.18)" stroke="#0e2f58" stroke-width="0.12">60</text>
<line x1="412.5" y1="399.18" x2="413.5" y2="399.18" stroke="#1c3442" stroke-width="0.4" />
<text x="411.9" y="408.02" font-size="3.2" fill="#0e2f58" font-weight="700" text-anchor="end" dominant-baseline="central" transform="rotate(0.06 411.9 408.02)" stroke="#0e2f58" stroke-width="0.12">40</text>
<line x1="412.5" y1="408.02" x2="413.5" y2="408.02" stroke="#1c3442" stroke-width="0.4" />
<text x="411.9" y="416.86" font-size="3.2" fill="#0e2f58" font-weight="700" text-anchor="end" dominant-baseline="central" transform="rotate(0.06 411.9 416.86)" stroke="#0e2f58" stroke-width="0.12">20</text>
<line x1="412.5" y1="416.86" x2="413.5" y2="416.86" stroke="#1c3442" stroke-width="0.4" />
<text x="411.9" y="425.7" font-size="3.2" fill="#0e2f58" font-weight="700" text-anchor="end" dominant-baseline="central" transform="rotate(0.06 411.9 425.7)" stroke="#0e2f58" stroke-width="0.12">0</text>
<line x1="412.5" y1="425.7" x2="413.5" y2="425.7" stroke="#1c3442" stroke-width="0.4" />
<text x="409.3" y="430.1" font-size="3.1" fill="#27323c" font-weight="700" textLength="48.2" lengthAdjust="spacingAndGlyphs" dominant-baseline="central" transform="rotate(0.06 409.3 430.1)" >08:06 07:12 05:13 03:15 01:15</text>
<rect x="463.3" y="371.2" width="58.8" height="62.9" fill="url(#gChartCard)" />
<text x="476.1" y="377.3" font-size="3.8" fill="#0a3cf0" font-weight="500" textLength="31.6" lengthAdjust="spacingAndGlyphs" dominant-baseline="central" transform="rotate(0.06 476.1 377.3)" >35kV 12柜A相温度</text>
<rect x="473.5" y="381.5" width="44.8" height="44.2" fill="url(#gPlot)" />
<path d="M480.97 381.5V425.7M488.43 381.5V425.7M495.9 381.5V425.7M503.37 381.5V425.7M510.83 381.5V425.7M473.5 385.92H518.3M473.5 390.34H518.3M473.5 394.76H518.3M473.5 399.18H518.3M473.5 403.6H518.3M473.5 408.02H518.3M473.5 412.44H518.3M473.5 416.86H518.3M473.5 421.28H518.3" stroke="#5f9cc2" stroke-width="0.35" opacity="0.4" fill="none"/>
<polyline points="473.5,417.3 495.9,417.48 504.86,416.95 518.3,416.73" fill="none" stroke="#cc7484" stroke-width="0.6"/>
<rect x="473.5" y="381.5" width="44.8" height="44.2" fill="none" stroke="#1c3442" stroke-width="0.8"/>
<text x="471.9" y="381.5" font-size="3.2" fill="#0e2f58" font-weight="700" text-anchor="end" dominant-baseline="central" transform="rotate(0.06 471.9 381.5)" stroke="#0e2f58" stroke-width="0.12">100</text>
<line x1="472.5" y1="381.5" x2="473.5" y2="381.5" stroke="#1c3442" stroke-width="0.4" />
<text x="471.9" y="390.34" font-size="3.2" fill="#0e2f58" font-weight="700" text-anchor="end" dominant-baseline="central" transform="rotate(0.06 471.9 390.34)" stroke="#0e2f58" stroke-width="0.12">80</text>
<line x1="472.5" y1="390.34" x2="473.5" y2="390.34" stroke="#1c3442" stroke-width="0.4" />
<text x="471.9" y="399.18" font-size="3.2" fill="#0e2f58" font-weight="700" text-anchor="end" dominant-baseline="central" transform="rotate(0.06 471.9 399.18)" stroke="#0e2f58" stroke-width="0.12">60</text>
<line x1="472.5" y1="399.18" x2="473.5" y2="399.18" stroke="#1c3442" stroke-width="0.4" />
<text x="471.9" y="408.02" font-size="3.2" fill="#0e2f58" font-weight="700" text-anchor="end" dominant-baseline="central" transform="rotate(0.06 471.9 408.02)" stroke="#0e2f58" stroke-width="0.12">40</text>
<line x1="472.5" y1="408.02" x2="473.5" y2="408.02" stroke="#1c3442" stroke-width="0.4" />
<text x="471.9" y="416.86" font-size="3.2" fill="#0e2f58" font-weight="700" text-anchor="end" dominant-baseline="central" transform="rotate(0.06 471.9 416.86)" stroke="#0e2f58" stroke-width="0.12">20</text>
<line x1="472.5" y1="416.86" x2="473.5" y2="416.86" stroke="#1c3442" stroke-width="0.4" />
<text x="471.9" y="425.7" font-size="3.2" fill="#0e2f58" font-weight="700" text-anchor="end" dominant-baseline="central" transform="rotate(0.06 471.9 425.7)" stroke="#0e2f58" stroke-width="0.12">0</text>
<line x1="472.5" y1="425.7" x2="473.5" y2="425.7" stroke="#1c3442" stroke-width="0.4" />
<text x="469.3" y="430.1" font-size="3.1" fill="#27323c" font-weight="700" textLength="48.2" lengthAdjust="spacingAndGlyphs" dominant-baseline="central" transform="rotate(0.06 469.3 430.1)" >09:01 07:08 05:08 03:08 01:06</text>
<rect x="703.3" y="371.2" width="58.8" height="62.9" fill="url(#gChartCard)" />
<text x="716.1" y="377.3" font-size="3.8" fill="#0a3cf0" font-weight="500" textLength="31.6" lengthAdjust="spacingAndGlyphs" dominant-baseline="central" transform="rotate(0.06 716.1 377.3)" >35kV 13柜B相温度</text>
<rect x="713.5" y="381.5" width="44.8" height="44.2" fill="url(#gPlot)" />
<path d="M720.97 381.5V425.7M728.43 381.5V425.7M735.9 381.5V425.7M743.37 381.5V425.7M750.83 381.5V425.7M713.5 385.92H758.3M713.5 390.34H758.3M713.5 394.76H758.3M713.5 399.18H758.3M713.5 403.6H758.3M713.5 408.02H758.3M713.5 412.44H758.3M713.5 416.86H758.3M713.5 421.28H758.3" stroke="#5f9cc2" stroke-width="0.35" opacity="0.4" fill="none"/>
<polyline points="713.5,417.3 735.9,417.48 744.86,416.95 758.3,416.73" fill="none" stroke="#cc7484" stroke-width="0.6"/>
<rect x="713.5" y="381.5" width="44.8" height="44.2" fill="none" stroke="#1c3442" stroke-width="0.8"/>
<text x="711.9" y="381.5" font-size="3.2" fill="#0e2f58" font-weight="700" text-anchor="end" dominant-baseline="central" transform="rotate(0.06 711.9 381.5)" stroke="#0e2f58" stroke-width="0.12">100</text>
<line x1="712.5" y1="381.5" x2="713.5" y2="381.5" stroke="#1c3442" stroke-width="0.4" />
<text x="711.9" y="390.34" font-size="3.2" fill="#0e2f58" font-weight="700" text-anchor="end" dominant-baseline="central" transform="rotate(0.06 711.9 390.34)" stroke="#0e2f58" stroke-width="0.12">80</text>
<line x1="712.5" y1="390.34" x2="713.5" y2="390.34" stroke="#1c3442" stroke-width="0.4" />
<text x="711.9" y="399.18" font-size="3.2" fill="#0e2f58" font-weight="700" text-anchor="end" dominant-baseline="central" transform="rotate(0.06 711.9 399.18)" stroke="#0e2f58" stroke-width="0.12">60</text>
<line x1="712.5" y1="399.18" x2="713.5" y2="399.18" stroke="#1c3442" stroke-width="0.4" />
<text x="711.9" y="408.02" font-size="3.2" fill="#0e2f58" font-weight="700" text-anchor="end" dominant-baseline="central" transform="rotate(0.06 711.9 408.02)" stroke="#0e2f58" stroke-width="0.12">40</text>
<line x1="712.5" y1="408.02" x2="713.5" y2="408.02" stroke="#1c3442" stroke-width="0.4" />
<text x="711.9" y="416.86" font-size="3.2" fill="#0e2f58" font-weight="700" text-anchor="end" dominant-baseline="central" transform="rotate(0.06 711.9 416.86)" stroke="#0e2f58" stroke-width="0.12">20</text>
<line x1="712.5" y1="416.86" x2="713.5" y2="416.86" stroke="#1c3442" stroke-width="0.4" />
<text x="711.9" y="425.7" font-size="3.2" fill="#0e2f58" font-weight="700" text-anchor="end" dominant-baseline="central" transform="rotate(0.06 711.9 425.7)" stroke="#0e2f58" stroke-width="0.12">0</text>
<line x1="712.5" y1="425.7" x2="713.5" y2="425.7" stroke="#1c3442" stroke-width="0.4" />
<text x="709.3" y="430.1" font-size="3.1" fill="#27323c" font-weight="700" textLength="48.2" lengthAdjust="spacingAndGlyphs" dominant-baseline="central" transform="rotate(0.06 709.3 430.1)" >09:01 07:10 05:16 03:16 01:22</text>
<rect x="403.3" y="435.8" width="58.8" height="62.9" fill="url(#gChartCard)" />
<text x="416.1" y="441.9" font-size="3.8" fill="#0a3cf0" font-weight="500" textLength="31.6" lengthAdjust="spacingAndGlyphs" dominant-baseline="central" transform="rotate(0.06 416.1 441.9)" >35kV 14柜C相温度</text>
<rect x="413.5" y="446.1" width="44.8" height="44.2" fill="url(#gPlot)" />
<path d="M420.97 446.1V490.3M428.43 446.1V490.3M435.9 446.1V490.3M443.37 446.1V490.3M450.83 446.1V490.3M413.5 450.52H458.3M413.5 454.94H458.3M413.5 459.36H458.3M413.5 463.78H458.3M413.5 468.2H458.3M413.5 472.62H458.3M413.5 477.04H458.3M413.5 481.46H458.3M413.5 485.88H458.3" stroke="#5f9cc2" stroke-width="0.35" opacity="0.4" fill="none"/>
<polyline points="413.5,481.24 458.3,481.24" fill="none" stroke="#cc7484" stroke-width="0.6"/>
<rect x="413.5" y="446.1" width="44.8" height="44.2" fill="none" stroke="#1c3442" stroke-width="0.8"/>
<text x="411.9" y="446.1" font-size="3.2" fill="#0e2f58" font-weight="700" text-anchor="end" dominant-baseline="central" transform="rotate(0.06 411.9 446.1)" stroke="#0e2f58" stroke-width="0.12">100</text>
<line x1="412.5" y1="446.1" x2="413.5" y2="446.1" stroke="#1c3442" stroke-width="0.4" />
<text x="411.9" y="454.94" font-size="3.2" fill="#0e2f58" font-weight="700" text-anchor="end" dominant-baseline="central" transform="rotate(0.06 411.9 454.94)" stroke="#0e2f58" stroke-width="0.12">80</text>
<line x1="412.5" y1="454.94" x2="413.5" y2="454.94" stroke="#1c3442" stroke-width="0.4" />
<text x="411.9" y="463.78" font-size="3.2" fill="#0e2f58" font-weight="700" text-anchor="end" dominant-baseline="central" transform="rotate(0.06 411.9 463.78)" stroke="#0e2f58" stroke-width="0.12">60</text>
<line x1="412.5" y1="463.78" x2="413.5" y2="463.78" stroke="#1c3442" stroke-width="0.4" />
<text x="411.9" y="472.62" font-size="3.2" fill="#0e2f58" font-weight="700" text-anchor="end" dominant-baseline="central" transform="rotate(0.06 411.9 472.62)" stroke="#0e2f58" stroke-width="0.12">40</text>
<line x1="412.5" y1="472.62" x2="413.5" y2="472.62" stroke="#1c3442" stroke-width="0.4" />
<text x="411.9" y="481.46" font-size="3.2" fill="#0e2f58" font-weight="700" text-anchor="end" dominant-baseline="central" transform="rotate(0.06 411.9 481.46)" stroke="#0e2f58" stroke-width="0.12">20</text>
<line x1="412.5" y1="481.46" x2="413.5" y2="481.46" stroke="#1c3442" stroke-width="0.4" />
<text x="411.9" y="490.3" font-size="3.2" fill="#0e2f58" font-weight="700" text-anchor="end" dominant-baseline="central" transform="rotate(0.06 411.9 490.3)" stroke="#0e2f58" stroke-width="0.12">0</text>
<line x1="412.5" y1="490.3" x2="413.5" y2="490.3" stroke="#1c3442" stroke-width="0.4" />
<text x="409.3" y="494.7" font-size="3.1" fill="#27323c" font-weight="700" textLength="48.2" lengthAdjust="spacingAndGlyphs" dominant-baseline="central" transform="rotate(0.06 409.3 494.7)" >08:21 06:17 04:13 02:08 00:04</text>
<rect x="463.3" y="435.8" width="58.8" height="62.9" fill="url(#gChartCard)" />
<text x="476.1" y="441.9" font-size="3.8" fill="#0a3cf0" font-weight="500" textLength="31.6" lengthAdjust="spacingAndGlyphs" dominant-baseline="central" transform="rotate(0.06 476.1 441.9)" >35kV 14柜A相温度</text>
<rect x="473.5" y="446.1" width="44.8" height="44.2" fill="url(#gPlot)" />
<path d="M480.97 446.1V490.3M488.43 446.1V490.3M495.9 446.1V490.3M503.37 446.1V490.3M510.83 446.1V490.3M473.5 450.52H518.3M473.5 454.94H518.3M473.5 459.36H518.3M473.5 463.78H518.3M473.5 468.2H518.3M473.5 472.62H518.3M473.5 477.04H518.3M473.5 481.46H518.3M473.5 485.88H518.3" stroke="#5f9cc2" stroke-width="0.35" opacity="0.4" fill="none"/>
<polyline points="473.5,482.34 491.42,482.26 500.38,481.64 518.3,481.19" fill="none" stroke="#cc7484" stroke-width="0.6"/>
<rect x="473.5" y="446.1" width="44.8" height="44.2" fill="none" stroke="#1c3442" stroke-width="0.8"/>
<text x="471.9" y="446.1" font-size="3.2" fill="#0e2f58" font-weight="700" text-anchor="end" dominant-baseline="central" transform="rotate(0.06 471.9 446.1)" stroke="#0e2f58" stroke-width="0.12">100</text>
<line x1="472.5" y1="446.1" x2="473.5" y2="446.1" stroke="#1c3442" stroke-width="0.4" />
<text x="471.9" y="454.94" font-size="3.2" fill="#0e2f58" font-weight="700" text-anchor="end" dominant-baseline="central" transform="rotate(0.06 471.9 454.94)" stroke="#0e2f58" stroke-width="0.12">80</text>
<line x1="472.5" y1="454.94" x2="473.5" y2="454.94" stroke="#1c3442" stroke-width="0.4" />
<text x="471.9" y="463.78" font-size="3.2" fill="#0e2f58" font-weight="700" text-anchor="end" dominant-baseline="central" transform="rotate(0.06 471.9 463.78)" stroke="#0e2f58" stroke-width="0.12">60</text>
<line x1="472.5" y1="463.78" x2="473.5" y2="463.78" stroke="#1c3442" stroke-width="0.4" />
<text x="471.9" y="472.62" font-size="3.2" fill="#0e2f58" font-weight="700" text-anchor="end" dominant-baseline="central" transform="rotate(0.06 471.9 472.62)" stroke="#0e2f58" stroke-width="0.12">40</text>
<line x1="472.5" y1="472.62" x2="473.5" y2="472.62" stroke="#1c3442" stroke-width="0.4" />
<text x="471.9" y="481.46" font-size="3.2" fill="#0e2f58" font-weight="700" text-anchor="end" dominant-baseline="central" transform="rotate(0.06 471.9 481.46)" stroke="#0e2f58" stroke-width="0.12">20</text>
<line x1="472.5" y1="481.46" x2="473.5" y2="481.46" stroke="#1c3442" stroke-width="0.4" />
<text x="471.9" y="490.3" font-size="3.2" fill="#0e2f58" font-weight="700" text-anchor="end" dominant-baseline="central" transform="rotate(0.06 471.9 490.3)" stroke="#0e2f58" stroke-width="0.12">0</text>
<line x1="472.5" y1="490.3" x2="473.5" y2="490.3" stroke="#1c3442" stroke-width="0.4" />
<text x="469.3" y="494.7" font-size="3.1" fill="#27323c" font-weight="700" textLength="48.2" lengthAdjust="spacingAndGlyphs" dominant-baseline="central" transform="rotate(0.06 469.3 494.7)" >09:02 07:07 05:12 03:06 01:01</text>
<rect x="703.3" y="435.8" width="58.8" height="62.9" fill="url(#gChartCard)" />
<text x="716.1" y="441.9" font-size="3.8" fill="#0a3cf0" font-weight="500" textLength="31.6" lengthAdjust="spacingAndGlyphs" dominant-baseline="central" transform="rotate(0.06 716.1 441.9)" >35kV 15柜B相温度</text>
<rect x="713.5" y="446.1" width="44.8" height="44.2" fill="url(#gPlot)" />
<path d="M720.97 446.1V490.3M728.43 446.1V490.3M735.9 446.1V490.3M743.37 446.1V490.3M750.83 446.1V490.3M713.5 450.52H758.3M713.5 454.94H758.3M713.5 459.36H758.3M713.5 463.78H758.3M713.5 468.2H758.3M713.5 472.62H758.3M713.5 477.04H758.3M713.5 481.46H758.3M713.5 485.88H758.3" stroke="#5f9cc2" stroke-width="0.35" opacity="0.4" fill="none"/>
<polyline points="713.5,482.34 731.42,482.26 740.38,481.64 758.3,481.19" fill="none" stroke="#cc7484" stroke-width="0.6"/>
<rect x="713.5" y="446.1" width="44.8" height="44.2" fill="none" stroke="#1c3442" stroke-width="0.8"/>
<text x="711.9" y="446.1" font-size="3.2" fill="#0e2f58" font-weight="700" text-anchor="end" dominant-baseline="central" transform="rotate(0.06 711.9 446.1)" stroke="#0e2f58" stroke-width="0.12">100</text>
<line x1="712.5" y1="446.1" x2="713.5" y2="446.1" stroke="#1c3442" stroke-width="0.4" />
<text x="711.9" y="454.94" font-size="3.2" fill="#0e2f58" font-weight="700" text-anchor="end" dominant-baseline="central" transform="rotate(0.06 711.9 454.94)" stroke="#0e2f58" stroke-width="0.12">80</text>
<line x1="712.5" y1="454.94" x2="713.5" y2="454.94" stroke="#1c3442" stroke-width="0.4" />
<text x="711.9" y="463.78" font-size="3.2" fill="#0e2f58" font-weight="700" text-anchor="end" dominant-baseline="central" transform="rotate(0.06 711.9 463.78)" stroke="#0e2f58" stroke-width="0.12">60</text>
<line x1="712.5" y1="463.78" x2="713.5" y2="463.78" stroke="#1c3442" stroke-width="0.4" />
<text x="711.9" y="472.62" font-size="3.2" fill="#0e2f58" font-weight="700" text-anchor="end" dominant-baseline="central" transform="rotate(0.06 711.9 472.62)" stroke="#0e2f58" stroke-width="0.12">40</text>
<line x1="712.5" y1="472.62" x2="713.5" y2="472.62" stroke="#1c3442" stroke-width="0.4" />
<text x="711.9" y="481.46" font-size="3.2" fill="#0e2f58" font-weight="700" text-anchor="end" dominant-baseline="central" transform="rotate(0.06 711.9 481.46)" stroke="#0e2f58" stroke-width="0.12">20</text>
<line x1="712.5" y1="481.46" x2="713.5" y2="481.46" stroke="#1c3442" stroke-width="0.4" />
<text x="711.9" y="490.3" font-size="3.2" fill="#0e2f58" font-weight="700" text-anchor="end" dominant-baseline="central" transform="rotate(0.06 711.9 490.3)" stroke="#0e2f58" stroke-width="0.12">0</text>
<line x1="712.5" y1="490.3" x2="713.5" y2="490.3" stroke="#1c3442" stroke-width="0.4" />
<text x="709.3" y="494.7" font-size="3.1" fill="#27323c" font-weight="700" textLength="48.2" lengthAdjust="spacingAndGlyphs" dominant-baseline="central" transform="rotate(0.06 709.3 494.7)" >08:06 07:08 05:06 03:06 01:07</text>
<rect x="465.9" y="296.6" width="248.5" height="203.2" fill="#6a6a6a" opacity="0.55"/>
<rect x="466.7" y="296.6" width="247.3" height="202.6" fill="#f1f1f1" />
<rect x="466.7" y="296.6" width="247.3" height="11" fill="url(#gDlgTitle)" />
<text x="469.8" y="302.4" font-size="3.7" fill="#1a1a1a" font-weight="700" text-anchor="start" dominant-baseline="central" transform="rotate(0.06 469.8 302.4)" >测温节点曲线图</text>
<rect x="701.2" y="300.4" width="6" height="3.8" fill="#9a9a9a" />
<line x1="701.2" y1="301.6" x2="707.2" y2="301.6" stroke="#e0e0e0" stroke-width="0.4" />
<line x1="701.2" y1="303" x2="707.2" y2="303" stroke="#e0e0e0" stroke-width="0.4" />
<polygon points="708.6,301.8 710.8,301.8 709.7,303.2" fill="#777"/>
<text x="591" y="312.6" font-size="3.4" fill="#1a3cf0" font-weight="500" text-anchor="middle" dominant-baseline="central" transform="rotate(0.06 591 312.6)" >35kV 11柜A相温度</text>
<rect x="481.5" y="318" width="226.3" height="157.3" fill="#f4f4f4" />
<path d="M481.5 323.24H707.8M481.5 328.49H707.8M481.5 333.73H707.8M481.5 338.97H707.8M481.5 344.22H707.8M481.5 349.46H707.8M481.5 354.7H707.8M481.5 359.95H707.8M481.5 365.19H707.8M481.5 370.43H707.8M481.5 375.68H707.8M481.5 380.92H707.8M481.5 386.16H707.8M481.5 391.41H707.8M481.5 396.65H707.8M481.5 401.89H707.8M481.5 407.14H707.8M481.5 412.38H707.8M481.5 417.62H707.8M481.5 422.87H707.8M481.5 428.11H707.8M481.5 433.35H707.8M481.5 438.6H707.8M481.5 443.84H707.8M481.5 449.08H707.8M481.5 454.33H707.8M481.5 459.57H707.8M481.5 464.81H707.8M481.5 470.06H707.8" stroke="#a4a4a4" stroke-width="0.5" stroke-dasharray="1.1 0.8" fill="none"/>
<path d="M507.7 318V475.3M533.9 318V475.3M560.1 318V475.3M586.3 318V475.3M612.5 318V475.3M638.7 318V475.3M664.9 318V475.3M691.1 318V475.3" stroke="#c2c2c2" stroke-width="0.5" fill="none"/>
<rect x="481.5" y="318" width="226.3" height="157.3" fill="none" stroke="#a8a8a8" stroke-width="0.7"/>
<line x1="481.5" y1="318" x2="707.8" y2="318" stroke="#909090" stroke-width="0.9" />
<line x1="481.5" y1="318" x2="481.5" y2="475.7" stroke="#3a3a3a" stroke-width="0.9" />
<line x1="481.1" y1="475.3" x2="707.8" y2="475.3" stroke="#3a3a3a" stroke-width="0.9" />
<text x="479.5" y="318" font-size="3" fill="#2e2e2e" font-weight="700" text-anchor="end" dominant-baseline="central" transform="rotate(0.06 479.5 318)" >150</text>
<text x="479.5" y="323.24" font-size="3" fill="#2e2e2e" font-weight="700" text-anchor="end" dominant-baseline="central" transform="rotate(0.06 479.5 323.24)" >145</text>
<text x="479.5" y="328.49" font-size="3" fill="#2e2e2e" font-weight="700" text-anchor="end" dominant-baseline="central" transform="rotate(0.06 479.5 328.49)" >140</text>
<text x="479.5" y="333.73" font-size="3" fill="#2e2e2e" font-weight="700" text-anchor="end" dominant-baseline="central" transform="rotate(0.06 479.5 333.73)" >135</text>
<text x="479.5" y="338.97" font-size="3" fill="#2e2e2e" font-weight="700" text-anchor="end" dominant-baseline="central" transform="rotate(0.06 479.5 338.97)" >130</text>
<text x="479.5" y="344.22" font-size="3" fill="#2e2e2e" font-weight="700" text-anchor="end" dominant-baseline="central" transform="rotate(0.06 479.5 344.22)" >125</text>
<text x="479.5" y="349.46" font-size="3" fill="#2e2e2e" font-weight="700" text-anchor="end" dominant-baseline="central" transform="rotate(0.06 479.5 349.46)" >120</text>
<text x="479.5" y="354.7" font-size="3" fill="#2e2e2e" font-weight="700" text-anchor="end" dominant-baseline="central" transform="rotate(0.06 479.5 354.7)" >115</text>
<text x="479.5" y="359.95" font-size="3" fill="#2e2e2e" font-weight="700" text-anchor="end" dominant-baseline="central" transform="rotate(0.06 479.5 359.95)" >110</text>
<text x="479.5" y="365.19" font-size="3" fill="#2e2e2e" font-weight="700" text-anchor="end" dominant-baseline="central" transform="rotate(0.06 479.5 365.19)" >105</text>
<text x="479.5" y="370.43" font-size="3" fill="#2e2e2e" font-weight="700" text-anchor="end" dominant-baseline="central" transform="rotate(0.06 479.5 370.43)" >100</text>
<text x="479.5" y="375.68" font-size="3" fill="#2e2e2e" font-weight="700" text-anchor="end" dominant-baseline="central" transform="rotate(0.06 479.5 375.68)" >95</text>
<text x="479.5" y="380.92" font-size="3" fill="#2e2e2e" font-weight="700" text-anchor="end" dominant-baseline="central" transform="rotate(0.06 479.5 380.92)" >90</text>
<text x="479.5" y="386.16" font-size="3" fill="#2e2e2e" font-weight="700" text-anchor="end" dominant-baseline="central" transform="rotate(0.06 479.5 386.16)" >85</text>
<text x="479.5" y="391.41" font-size="3" fill="#2e2e2e" font-weight="700" text-anchor="end" dominant-baseline="central" transform="rotate(0.06 479.5 391.41)" >80</text>
<text x="479.5" y="396.65" font-size="3" fill="#2e2e2e" font-weight="700" text-anchor="end" dominant-baseline="central" transform="rotate(0.06 479.5 396.65)" >75</text>
<text x="479.5" y="401.89" font-size="3" fill="#2e2e2e" font-weight="700" text-anchor="end" dominant-baseline="central" transform="rotate(0.06 479.5 401.89)" >70</text>
<text x="479.5" y="407.14" font-size="3" fill="#2e2e2e" font-weight="700" text-anchor="end" dominant-baseline="central" transform="rotate(0.06 479.5 407.14)" >65</text>
<text x="479.5" y="412.38" font-size="3" fill="#2e2e2e" font-weight="700" text-anchor="end" dominant-baseline="central" transform="rotate(0.06 479.5 412.38)" >60</text>
<text x="479.5" y="417.62" font-size="3" fill="#2e2e2e" font-weight="700" text-anchor="end" dominant-baseline="central" transform="rotate(0.06 479.5 417.62)" >55</text>
<text x="479.5" y="422.87" font-size="3" fill="#2e2e2e" font-weight="700" text-anchor="end" dominant-baseline="central" transform="rotate(0.06 479.5 422.87)" >50</text>
<text x="479.5" y="428.11" font-size="3" fill="#2e2e2e" font-weight="700" text-anchor="end" dominant-baseline="central" transform="rotate(0.06 479.5 428.11)" >45</text>
<text x="479.5" y="433.35" font-size="3" fill="#2e2e2e" font-weight="700" text-anchor="end" dominant-baseline="central" transform="rotate(0.06 479.5 433.35)" >40</text>
<text x="479.5" y="438.6" font-size="3" fill="#2e2e2e" font-weight="700" text-anchor="end" dominant-baseline="central" transform="rotate(0.06 479.5 438.6)" >35</text>
<text x="479.5" y="443.84" font-size="3" fill="#2e2e2e" font-weight="700" text-anchor="end" dominant-baseline="central" transform="rotate(0.06 479.5 443.84)" >30</text>
<text x="479.5" y="449.08" font-size="3" fill="#2e2e2e" font-weight="700" text-anchor="end" dominant-baseline="central" transform="rotate(0.06 479.5 449.08)" >25</text>
<text x="479.5" y="454.33" font-size="3" fill="#2e2e2e" font-weight="700" text-anchor="end" dominant-baseline="central" transform="rotate(0.06 479.5 454.33)" >20</text>
<text x="479.5" y="459.57" font-size="3" fill="#2e2e2e" font-weight="700" text-anchor="end" dominant-baseline="central" transform="rotate(0.06 479.5 459.57)" >15</text>
<text x="479.5" y="464.81" font-size="3" fill="#2e2e2e" font-weight="700" text-anchor="end" dominant-baseline="central" transform="rotate(0.06 479.5 464.81)" >10</text>
<text x="479.5" y="470.06" font-size="3" fill="#2e2e2e" font-weight="700" text-anchor="end" dominant-baseline="central" transform="rotate(0.06 479.5 470.06)" >5</text>
<text x="479.5" y="475.3" font-size="3" fill="#2e2e2e" font-weight="700" text-anchor="end" dominant-baseline="central" transform="rotate(0.06 479.5 475.3)" >0</text>
<text x="481.5" y="479.8" font-size="2.7" fill="#4a4a4a" font-weight="500" text-anchor="middle" dominant-baseline="central" transform="rotate(0.06 481.5 479.8)" >2010-11-08 09:00</text>
<text x="507.1" y="479.8" font-size="2.7" fill="#4a4a4a" font-weight="500" text-anchor="middle" dominant-baseline="central" transform="rotate(0.06 507.1 479.8)" >2010-11-08 09:02</text>
<text x="533.3" y="479.8" font-size="2.7" fill="#4a4a4a" font-weight="500" text-anchor="middle" dominant-baseline="central" transform="rotate(0.06 533.3 479.8)" >2010-11-08 08:57</text>
<text x="559.5" y="479.8" font-size="2.7" fill="#4a4a4a" font-weight="500" text-anchor="middle" dominant-baseline="central" transform="rotate(0.06 559.5 479.8)" >2010-11-08 08:55</text>
<text x="585.7" y="479.8" font-size="2.7" fill="#4a4a4a" font-weight="500" text-anchor="middle" dominant-baseline="central" transform="rotate(0.06 585.7 479.8)" >2010-11-08 08:51</text>
<text x="611.9" y="479.8" font-size="2.7" fill="#4a4a4a" font-weight="500" text-anchor="middle" dominant-baseline="central" transform="rotate(0.06 611.9 479.8)" >2010-11-08 08:48</text>
<text x="638.1" y="479.8" font-size="2.7" fill="#4a4a4a" font-weight="500" text-anchor="middle" dominant-baseline="central" transform="rotate(0.06 638.1 479.8)" >2010-11-08 08:45</text>
<text x="664.3" y="479.8" font-size="2.7" fill="#4a4a4a" font-weight="500" text-anchor="middle" dominant-baseline="central" transform="rotate(0.06 664.3 479.8)" >2010-11-08 07:46</text>
<text x="690.5" y="479.8" font-size="2.7" fill="#4a4a4a" font-weight="500" text-anchor="middle" dominant-baseline="central" transform="rotate(0.06 690.5 479.8)" >2010-11-08 05:41</text>
<polyline points="481.5,454.33 554,454.33 560,452.86 571,452.65 577,453.91 580,454.12 585,453.49 588,452.65 592,453.7 597,454.12 603,452.65 608,453.7 613,454.01 620,453.91 629,452.86 640,452.65 652,452.02 657,452.23 661,453.49 664,453.7 667,452.86 672,453.91 678,452.23 684,452.86 690,452.86 694,452.23 698,452.86 703,452.23 707.8,451.81" fill="none" stroke="#ee6a7e" stroke-width="0.8"/>
<rect x="466.7" y="484.6" width="247.3" height="14.6" fill="#e6e6e6" />
<text x="488.8" y="492.4" font-size="3.7" fill="#1a1a1a" font-weight="700" text-anchor="start" dominant-baseline="central" transform="rotate(0.06 488.8 492.4)" >起始日期:</text>
<rect x="506.6" y="489.3" width="37" height="6" fill="#ffffff" stroke="#8a8a8a" stroke-width="0.5"/>
<rect x="539.6" y="489.7" width="3.6" height="5.2" fill="#e0e0e0" stroke="#9a9a9a" stroke-width="0.3"/>
<polygon points="540.4,491.8 542.4,491.8 541.4,493.2" fill="#111"/>
<rect x="565.6" y="489.3" width="37" height="6" fill="#ffffff" stroke="#8a8a8a" stroke-width="0.5"/>
<rect x="598.6" y="489.7" width="3.6" height="5.2" fill="#e0e0e0" stroke="#9a9a9a" stroke-width="0.3"/>
<polygon points="599.4,491.8 601.4,491.8 600.4,493.2" fill="#111"/>
<rect x="507" y="489.7" width="7.6" height="5.2" fill="#2f62c0" />
<text x="507.4" y="492.6" transform="rotate(0.06 507.4 492.6)" font-size="3.3" font-weight="500" dominant-baseline="central" fill="#222" textLength="31" lengthAdjust="spacingAndGlyphs"><tspan fill="#fff">2010</tspan>年11月&#160;8日星期一</text>
<text x="547.6" y="492.4" font-size="3.7" fill="#1a1a1a" font-weight="700" text-anchor="start" dominant-baseline="central" transform="rotate(0.06 547.6 492.4)" >结束日期:</text>
<text x="566.4" y="492.6" font-size="3.3" fill="#222" font-weight="500" textLength="31" lengthAdjust="spacingAndGlyphs" dominant-baseline="central" transform="rotate(0.06 566.4 492.6)" >2010年11月&#160;8日星期一</text>
<rect x="614.3" y="487.8" width="23.6" height="7.8" fill="url(#gBtn)" rx="0.8" stroke="#8e8e8e" stroke-width="0.5"/>
<text x="626.1" y="491.8" font-size="3.6" fill="#1a1a1a" font-weight="700" text-anchor="middle" dominant-baseline="central" transform="rotate(0.06 626.1 491.8)" >查询</text>
<rect x="642.4" y="487.8" width="23.3" height="7.8" fill="url(#gBtn)" rx="0.8" stroke="#8e8e8e" stroke-width="0.5"/>
<text x="654.05" y="491.8" font-size="3.6" fill="#1a1a1a" font-weight="700" text-anchor="middle" dominant-baseline="central" transform="rotate(0.06 654.05 491.8)" >打印</text>
<rect x="667.8" y="487.8" width="23.7" height="7.8" fill="url(#gBtn)" rx="0.8" stroke="#8e8e8e" stroke-width="0.5"/>
<text x="679.65" y="491.8" font-size="3.6" fill="#1a1a1a" font-weight="700" text-anchor="middle" dominant-baseline="central" transform="rotate(0.06 679.65 491.8)" >关闭</text>
</svg>
</body>
</html>
